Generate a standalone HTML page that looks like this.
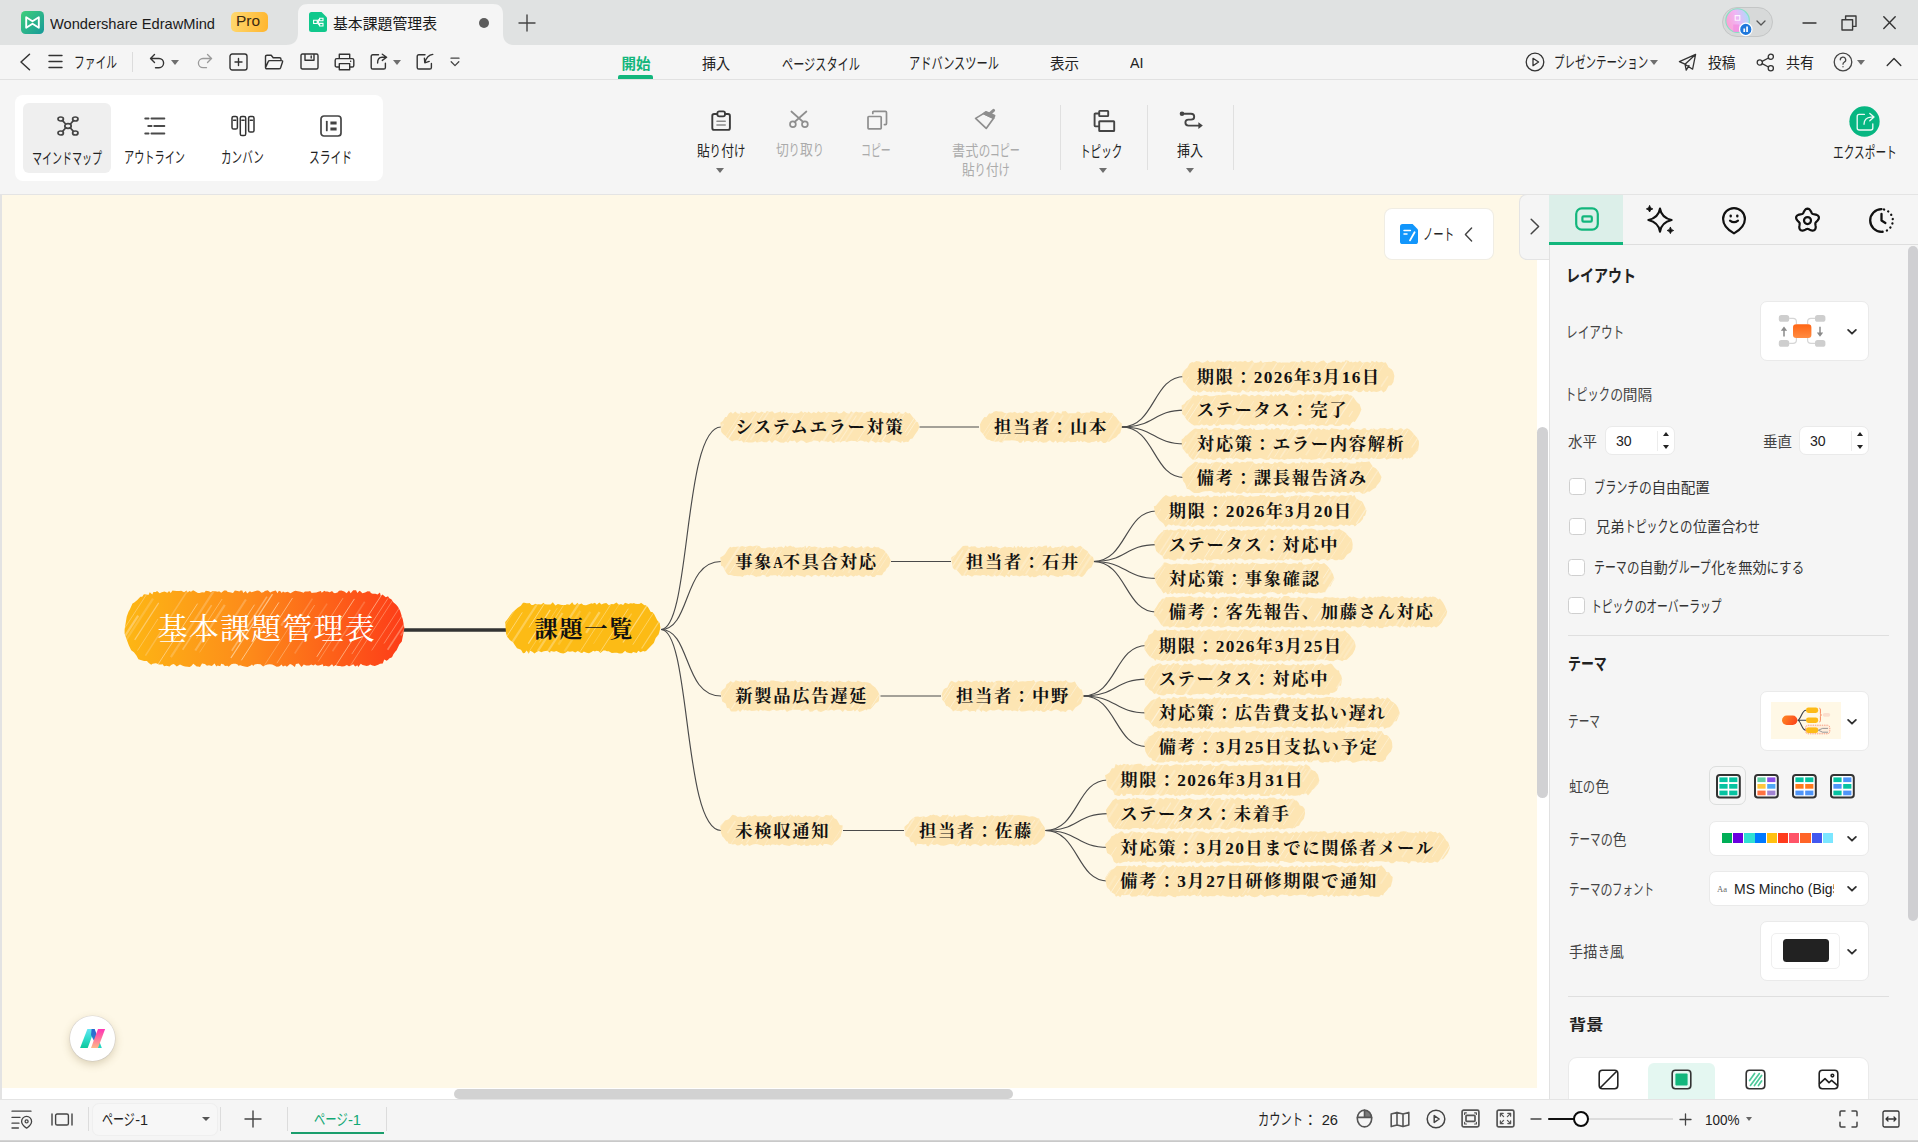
<!DOCTYPE html>
<html lang="ja"><head><meta charset="utf-8"><title>基本課題管理表 - Wondershare EdrawMind</title>
<style>
html,body{margin:0;padding:0}
html{width:1918px;height:1142px;overflow:hidden}
body{width:1918px;height:1142px;overflow:hidden;position:relative;background:#f5f5f5;font-family:"Liberation Sans","Noto Sans CJK JP",sans-serif}
.a{position:absolute;display:block}
.t{position:absolute;white-space:nowrap;line-height:24px;height:24px;transform-origin:0 50%;display:block}
.ko{display:inline-block;vertical-align:baseline;height:24px;line-height:24px}
.ki{display:inline-block;transform-origin:0 50%;white-space:nowrap;line-height:24px}

#mm text{font-family:"Liberation Serif","Noto Serif CJK JP","Noto Serif CJK SC",serif;}
#mm .mt text{font-size:17.3px;font-weight:700;fill:#111;letter-spacing:1.7px;}
#mm .mt .hw{letter-spacing:1.35px;}
#mm .mt .hwa{letter-spacing:0;font-size:16.5px;}
#mm .rt{font-size:30px;fill:#fff;font-weight:400;letter-spacing:1.2px;}
#mm .m2{font-size:23.2px;fill:#111;font-weight:700;letter-spacing:1.7px;}

</style></head>
<body>
<main id="canvas">
<div class="a" style="left:0px;top:195px;width:2px;height:904px;background:#e3e3e3"></div>
<div class="a" style="left:2px;top:195px;width:1535px;height:893px;background:#fef8e7"></div>
<div class="a" style="left:2px;top:1088px;width:1547px;height:11px;background:#fff"></div>
<div class="a" style="left:1537px;top:195px;width:12px;height:904px;background:#fff"></div>
<div class="a" style="left:454px;top:1088.6px;width:559px;height:10px;background:#d2d2d2;border-radius:5px"></div>
<div class="a" style="left:1537px;top:426.6px;width:11.4px;height:371.4px;background:#d1d1d3;border-radius:5.7px"></div>
<svg class="a" id="mm" style="left:2px;top:195px" width="1535" height="893" viewBox="0 0 1535 893">
<defs>
<linearGradient id="rootg" x1="0" y1="0" x2="1" y2="0"><stop offset="0" stop-color="#fdb714"/><stop offset="0.45" stop-color="#fd8a1a"/><stop offset="1" stop-color="#fd3c18"/></linearGradient>
</defs>
<g fill="none" stroke="#4a4a4a" stroke-width="1.15"><path d="M401 435 H506" stroke="#333" stroke-width="3.6" stroke-linecap="round"/><path d="M659 434.5 C689 434.5 681 232 719 232" /><path d="M917.5 232 H977" /><path d="M1119.5 232 C1153.5 232 1150.5 181.45 1182.5 181.45" /><path d="M1119.5 232 C1153.5 232 1150.5 215.15 1182.5 215.15" /><path d="M1119.5 232 C1153.5 232 1150.5 248.85 1182.5 248.85" /><path d="M1119.5 232 C1153.5 232 1150.5 282.55 1182.5 282.55" /><path d="M659 434.5 C689 434.5 681 366.5 719 366.5" /><path d="M889 366.5 H949" /><path d="M1091 366.5 C1125 366.5 1122.5 315.95 1154.5 315.95" /><path d="M1091 366.5 C1125 366.5 1122.5 349.65 1154.5 349.65" /><path d="M1091 366.5 C1125 366.5 1122.5 383.35 1154.5 383.35" /><path d="M1091 366.5 C1125 366.5 1122.5 417.05 1154.5 417.05" /><path d="M659 434.5 C689 434.5 681 501 719 501" /><path d="M878.5 501 H939" /><path d="M1081 501 C1115 501 1112.5 450.45 1144.5 450.45" /><path d="M1081 501 C1115 501 1112.5 484.15 1144.5 484.15" /><path d="M1081 501 C1115 501 1112.5 517.85 1144.5 517.85" /><path d="M1081 501 C1115 501 1112.5 551.55 1144.5 551.55" /><path d="M659 434.5 C689 434.5 681 635.5 719 635.5" /><path d="M841 635.5 H902" /><path d="M1043 635.5 C1077 635.5 1074 584.95 1106 584.95" /><path d="M1043 635.5 C1077 635.5 1074 618.65 1106 618.65" /><path d="M1043 635.5 C1077 635.5 1074 652.35 1106 652.35" /><path d="M1043 635.5 C1077 635.5 1074 686.05 1106 686.05" /></g>
<path id="n1" d="M122.6 434.4L124.7 421.8L126.5 416.8L127.8 414.4L130.5 408.6L132.3 407.6L135.3 405.1L138.4 401.8L140.2 401.7L141.9 399.2L144.9 399.6L146.4 399.9L147.8 397.3L150.3 399.5L151.4 397.0L153.7 397.0L155.1 396.0L157.6 398.3L159.7 397.2L162.5 396.5L165.3 397.7L167.1 395.9L168.7 398.0L170.5 395.5L172.1 395.7L174.9 396.0L177.1 396.1L179.2 395.8L182.1 397.3L184.5 395.6L185.8 397.6L187.2 396.0L189.0 396.7L191.1 395.2L192.5 396.1L195.9 397.9L197.6 398.1L200.0 397.2L202.4 397.5L203.8 395.7L207.0 396.2L208.7 397.3L210.6 395.9L213.3 396.3L215.9 396.7L217.1 396.2L219.2 397.8L222.1 395.5L224.3 395.4L225.8 397.0L228.0 397.3L231.0 398.1L232.9 395.4L235.7 396.0L237.4 396.6L238.5 395.5L240.3 395.4L241.2 398.0L243.9 395.9L245.1 398.4L247.9 396.2L249.6 397.3L252.7 396.3L255.2 395.4L257.1 395.7L259.6 397.8L261.8 396.9L262.8 396.1L265.8 395.2L268.2 397.4L270.2 396.5L273.6 395.5L274.0 395.7L275.5 398.3L276.9 395.7L278.7 396.6L279.7 397.9L281.0 396.4L282.9 397.4L285.6 396.7L288.5 398.2L291.9 396.2L293.3 395.7L295.9 396.2L298.7 396.7L301.6 397.7L302.9 396.4L306.2 396.5L308.2 395.9L309.7 398.0L311.0 397.7L314.4 397.6L315.6 397.1L318.9 396.1L319.7 397.7L322.4 395.7L323.4 396.5L325.5 396.6L327.7 397.2L330.1 395.9L331.2 397.4L332.9 398.2L335.5 397.6L337.0 395.7L339.3 395.4L342.3 396.5L344.6 398.2L347.0 395.4L348.6 398.3L351.2 395.3L354.1 395.2L355.3 398.1L357.5 395.8L358.7 396.4L360.4 398.3L363.1 397.4L365.6 396.3L368.1 396.4L368.8 397.9L370.7 398.8L373.4 398.8L375.5 399.6L378.0 397.4L378.7 400.7L380.5 399.6L383.8 402.3L386.0 401.3L387.3 403.2L389.3 404.3L391.4 407.3L394.0 409.5L395.9 411.7L398.0 415.4L400.8 424.6L402.4 432.9L399.8 446.4L397.3 449.6L394.6 455.2L393.2 456.7L391.4 459.2L390.0 462.2L387.1 463.4L386.4 464.4L384.7 465.8L382.2 464.6L380.8 468.5L378.0 468.7L376.2 469.7L372.8 470.9L370.4 470.5L368.2 469.5L366.7 470.6L364.7 471.1L362.8 470.6L360.5 470.0L358.8 468.8L356.3 471.9L355.4 470.2L353.2 471.5L351.2 469.3L348.3 471.1L346.8 471.3L344.9 470.1L342.3 471.3L339.9 471.4L338.1 471.1L335.9 470.9L333.4 470.0L331.7 471.5L330.0 469.2L327.1 471.6L325.5 471.2L323.7 470.7L321.4 471.2L320.7 469.3L316.9 470.6L315.0 470.5L313.2 469.3L311.5 470.4L309.2 469.4L307.3 470.5L304.2 470.4L301.8 469.4L299.5 471.9L296.7 468.6L293.9 469.1L292.9 471.9L289.9 469.7L288.0 468.9L284.9 471.7L283.1 470.5L281.0 471.5L279.4 469.5L278.2 470.8L277.0 471.6L274.6 471.8L272.3 470.6L270.2 469.6L267.8 469.2L265.4 469.4L263.1 470.2L261.2 471.6L258.5 469.3L255.3 469.1L252.6 469.5L251.2 471.0L250.0 469.6L248.4 470.7L245.4 471.9L242.6 471.4L240.5 471.0L238.3 470.2L236.3 470.7L235.6 469.4L233.6 468.7L231.3 468.8L229.4 469.2L226.6 471.8L225.5 470.8L222.9 471.0L221.8 469.4L219.2 468.7L218.3 471.2L215.6 470.4L214.4 471.5L212.5 468.6L209.9 471.0L207.0 470.3L204.9 470.7L202.9 469.1L200.0 468.6L198.0 471.9L196.1 471.4L194.7 471.6L191.4 468.7L190.4 469.7L189.4 471.1L187.6 471.9L185.7 471.7L183.1 471.5L181.2 470.9L178.0 469.6L174.8 471.4L172.5 469.6L171.3 468.9L169.2 470.0L167.6 471.4L164.4 470.7L162.0 471.3L160.7 469.2L159.0 469.4L156.8 469.4L154.9 468.4L153.6 468.3L150.6 468.8L149.2 469.7L146.8 467.9L144.9 466.0L142.0 466.1L138.7 465.1L136.4 464.3L134.4 460.5L131.9 457.3L129.2 455.3L126.9 450.6L125.6 447.1L122.6 438.8Z" fill="url(#rootg)"/><clipPath id="c1"><use href="#n1"/></clipPath><g clip-path="url(#c1)"><g stroke="#ffe9c8" fill="none"><path d="M88.9 454.7L115.8 413.3" stroke-width="0.9" stroke-opacity="0.69"/><path d="M91.3 466.8L138.3 394.6" stroke-width="1.2" stroke-opacity="0.63"/><path d="M100.2 467.7L144.9 398.9" stroke-width="0.7" stroke-opacity="0.57"/><path d="M104.4 469.5L136.2 420.6" stroke-width="2.2" stroke-opacity="0.42"/><path d="M108.4 469.1L151.0 403.6" stroke-width="2.2" stroke-opacity="0.22"/><path d="M132.7 444.8L156.7 407.9" stroke-width="1.2" stroke-opacity="0.47"/><path d="M135.5 455.6L156.0 423.9" stroke-width="0.9" stroke-opacity="0.41"/><path d="M143.4 460.6L185.9 395.1" stroke-width="1.6" stroke-opacity="0.26"/><path d="M168.9 437.6L176.5 425.9" stroke-width="0.9" stroke-opacity="0.43"/><path d="M155.2 470.7L195.6 408.6" stroke-width="0.9" stroke-opacity="0.60"/><path d="M168.9 462.1L212.1 395.5" stroke-width="2.2" stroke-opacity="0.26"/><path d="M180.6 454.8L209.6 410.1" stroke-width="1.6" stroke-opacity="0.34"/><path d="M194.5 443.4L220.1 404.0" stroke-width="0.9" stroke-opacity="0.43"/><path d="M193.3 455.5L222.8 409.9" stroke-width="2.2" stroke-opacity="0.30"/><path d="M197.6 457.4L212.7 434.1" stroke-width="0.7" stroke-opacity="0.37"/><path d="M227.3 430.0L243.9 404.5" stroke-width="2.2" stroke-opacity="0.28"/><path d="M234.8 436.9L252.5 409.7" stroke-width="0.9" stroke-opacity="0.62"/><path d="M229.8 455.8L265.0 401.6" stroke-width="1.6" stroke-opacity="0.42"/><path d="M228.9 463.0L270.5 399.1" stroke-width="1.2" stroke-opacity="0.64"/><path d="M239.4 465.3L276.9 407.4" stroke-width="0.9" stroke-opacity="0.70"/><path d="M271.8 431.9L290.5 403.0" stroke-width="0.9" stroke-opacity="0.60"/><path d="M279.2 430.7L283.7 423.7" stroke-width="2.2" stroke-opacity="0.30"/><path d="M262.2 470.7L288.3 430.5" stroke-width="0.9" stroke-opacity="0.33"/><path d="M287.1 439.4L310.4 403.6" stroke-width="1.6" stroke-opacity="0.22"/><path d="M274.9 468.2L312.6 410.1" stroke-width="0.9" stroke-opacity="0.42"/><path d="M292.7 458.5L325.1 408.6" stroke-width="1.6" stroke-opacity="0.19"/><path d="M318.1 438.4L341.0 403.1" stroke-width="0.9" stroke-opacity="0.44"/><path d="M314.8 461.8L352.4 403.9" stroke-width="0.9" stroke-opacity="0.67"/><path d="M316.2 466.5L338.0 432.9" stroke-width="0.7" stroke-opacity="0.45"/><path d="M330.5 456.3L362.7 406.8" stroke-width="1.6" stroke-opacity="0.21"/><path d="M351.5 435.4L359.4 423.3" stroke-width="0.7" stroke-opacity="0.32"/><path d="M334.3 469.8L381.9 396.4" stroke-width="0.9" stroke-opacity="0.62"/><path d="M349.8 459.1L386.0 403.3" stroke-width="0.9" stroke-opacity="0.45"/><path d="M347.1 472.6L392.8 402.1" stroke-width="0.9" stroke-opacity="0.39"/><path d="M369.7 455.4L406.5 398.8" stroke-width="0.9" stroke-opacity="0.40"/><path d="M382.0 448.5L410.0 405.3" stroke-width="0.7" stroke-opacity="0.57"/><path d="M385.6 454.7L408.0 420.3" stroke-width="1.6" stroke-opacity="0.37"/><path d="M398.8 440.5L421.6 405.3" stroke-width="1.6" stroke-opacity="0.32"/><path d="M414.1 430.4L426.3 411.7" stroke-width="2.2" stroke-opacity="0.25"/><path d="M400.2 468.8L439.5 408.3" stroke-width="1.6" stroke-opacity="0.19"/></g></g>
<path id="n2" d="M503.2 427.1L505.1 424.8L508.3 420.3L510.4 417.4L512.9 415.2L515.4 412.9L518.8 410.7L521.0 407.7L522.6 407.8L524.6 408.2L526.4 408.3L527.6 408.0L529.5 410.1L531.1 410.0L533.4 408.7L535.0 409.4L536.6 409.3L539.1 409.5L541.6 407.8L542.8 409.2L545.3 409.6L548.5 409.6L550.8 407.3L553.4 410.4L555.9 408.9L558.6 409.8L559.9 410.1L563.7 410.1L564.8 409.2L567.7 409.7L570.2 407.3L571.9 409.8L573.5 409.8L575.5 407.7L576.7 409.6L579.7 408.4L581.3 409.9L584.0 410.3L586.8 409.3L589.5 408.2L590.4 408.7L593.0 407.7L594.8 409.8L597.3 407.5L599.5 409.6L601.6 408.4L604.3 408.0L606.9 410.2L609.3 409.0L611.6 409.3L614.4 407.6L617.0 409.8L619.0 409.1L621.1 409.9L623.0 407.8L626.6 408.9L628.3 408.3L630.9 408.6L631.9 408.0L633.3 408.8L635.9 408.9L637.9 408.8L639.0 407.8L642.4 410.2L643.8 410.2L645.9 412.1L648.8 417.0L650.3 417.1L652.2 419.2L655.2 425.2L657.7 428.0L658.4 432.8L656.7 439.4L653.7 442.9L651.8 448.0L649.4 450.5L646.5 453.5L644.1 455.9L642.6 456.4L641.1 456.0L638.5 457.2L636.3 455.8L634.7 457.9L631.2 456.9L629.7 458.3L627.1 458.0L624.5 457.3L623.1 455.7L620.4 458.2L618.1 458.5L616.4 458.3L615.1 457.7L612.9 457.7L609.8 457.9L606.7 456.3L604.9 456.3L603.3 455.6L601.3 455.6L598.4 458.1L596.9 456.3L594.5 455.8L592.9 456.5L591.0 455.7L590.0 456.8L587.0 458.2L584.6 457.7L582.3 456.7L581.4 456.7L580.3 458.0L578.8 457.7L575.8 456.0L573.3 457.4L570.6 456.2L567.9 456.7L565.6 456.3L563.4 457.7L561.3 458.6L558.6 458.1L557.4 457.6L554.4 455.9L552.1 456.7L548.7 455.9L548.1 457.7L545.3 455.7L541.8 456.2L539.2 457.2L538.0 456.4L536.4 456.0L534.5 457.1L532.5 458.6L530.3 456.7L528.2 455.8L526.7 458.7L524.7 455.6L522.7 458.1L521.0 458.2L519.0 454.8L517.7 454.3L515.0 453.3L512.6 449.7L511.0 447.3L508.1 445.2L505.3 442.1L504.0 438.6Z" fill="#fcbb15"/><clipPath id="c2"><use href="#n2"/></clipPath><g clip-path="url(#c2)"><g stroke="#fff0c4" fill="none"><path d="M480.4 447.3L505.8 408.3" stroke-width="0.9" stroke-opacity="0.37"/><path d="M500.9 433.4L518.3 406.6" stroke-width="0.9" stroke-opacity="0.35"/><path d="M503.4 443.5L520.3 417.4" stroke-width="0.9" stroke-opacity="0.59"/><path d="M508.1 450.6L534.5 410.0" stroke-width="2.2" stroke-opacity="0.37"/><path d="M527.0 432.4L543.1 407.6" stroke-width="0.9" stroke-opacity="0.62"/><path d="M526.3 448.6L548.2 414.9" stroke-width="1.2" stroke-opacity="0.60"/><path d="M526.4 457.7L555.3 413.1" stroke-width="0.9" stroke-opacity="0.35"/><path d="M537.4 447.4L561.5 410.4" stroke-width="0.7" stroke-opacity="0.58"/><path d="M535.8 456.1L560.5 418.0" stroke-width="2.2" stroke-opacity="0.36"/><path d="M545.1 457.5L578.1 406.8" stroke-width="2.2" stroke-opacity="0.37"/><path d="M556.4 449.7L578.4 415.8" stroke-width="2.2" stroke-opacity="0.20"/><path d="M562.5 456.5L588.3 416.9" stroke-width="2.2" stroke-opacity="0.22"/><path d="M584.1 437.9L597.6 417.1" stroke-width="2.2" stroke-opacity="0.43"/><path d="M578.0 456.8L609.4 408.4" stroke-width="0.9" stroke-opacity="0.47"/><path d="M591.5 448.8L617.5 408.9" stroke-width="0.7" stroke-opacity="0.33"/><path d="M596.8 459.1L626.3 413.7" stroke-width="0.9" stroke-opacity="0.57"/><path d="M617.9 436.6L629.6 418.6" stroke-width="1.2" stroke-opacity="0.33"/><path d="M620.9 447.5L644.9 410.6" stroke-width="1.2" stroke-opacity="0.57"/><path d="M630.8 449.7L654.1 413.8" stroke-width="0.7" stroke-opacity="0.61"/><path d="M639.6 453.5L659.7 422.5" stroke-width="1.2" stroke-opacity="0.45"/><path d="M655.2 442.2L675.0 411.7" stroke-width="1.2" stroke-opacity="0.62"/><path d="M667.4 436.7L672.1 429.5" stroke-width="0.7" stroke-opacity="0.61"/><path d="M661.8 453.1L688.5 412.1" stroke-width="1.6" stroke-opacity="0.35"/></g></g>
<path id="n3" d="M718.3 227.8L720.8 226.0L723.2 222.1L724.7 222.0L726.9 218.2L729.0 216.9L730.9 218.7L733.2 216.4L735.6 218.4L737.8 218.7L738.5 216.7L741.3 218.2L743.5 218.1L744.0 216.8L747.1 218.2L750.3 216.2L752.1 216.9L753.6 216.1L754.9 217.4L757.2 218.1L759.7 216.5L763.1 218.2L764.9 216.1L767.6 217.1L770.3 216.3L772.7 218.4L774.6 217.7L777.3 217.1L778.7 216.3L779.8 218.4L781.3 216.6L783.1 218.0L784.3 217.1L786.6 218.2L789.6 217.8L791.6 218.0L793.7 218.5L797.0 218.0L798.6 216.6L799.8 216.2L801.2 217.9L802.8 216.7L805.2 218.1L806.4 216.4L807.3 217.1L809.3 218.5L811.8 217.1L814.2 218.3L816.3 216.3L819.3 217.9L822.2 216.4L824.8 218.0L826.5 217.1L827.7 217.1L830.9 217.3L832.9 217.4L834.7 216.5L836.1 218.2L837.3 218.5L839.7 217.9L841.8 216.1L844.5 218.0L847.2 218.7L849.1 216.3L851.8 218.1L854.1 216.6L856.7 217.4L860.0 217.0L861.7 218.0L862.8 218.3L864.7 216.7L866.8 216.8L869.5 216.1L872.3 218.4L875.5 216.5L876.5 218.1L878.4 216.4L882.2 218.3L884.2 217.5L887.0 218.4L889.6 217.9L890.5 216.4L893.9 218.7L896.8 216.5L899.6 218.8L901.5 218.7L903.4 216.7L906.0 218.4L907.7 217.9L910.9 222.3L912.7 223.9L914.7 227.1L916.0 227.3L917.3 231.9L915.9 235.5L913.2 239.2L910.5 243.4L908.3 244.0L906.3 247.1L904.0 246.7L901.6 247.5L900.0 245.7L899.1 247.9L896.9 246.9L894.0 245.7L892.3 245.6L889.3 245.5L887.6 247.7L886.6 247.8L884.4 247.2L883.3 246.9L881.4 246.1L879.1 247.5L876.9 247.0L875.6 246.9L873.5 247.8L871.5 246.5L869.2 245.4L866.6 247.8L864.1 246.3L862.7 246.7L860.4 245.8L858.5 245.5L856.8 246.1L855.3 247.1L853.2 245.9L851.8 245.9L849.3 245.7L845.9 246.5L845.1 247.2L842.7 246.1L840.2 246.3L838.6 247.6L836.3 246.6L833.5 246.8L832.2 247.9L830.8 247.8L828.8 245.8L825.8 247.2L825.1 246.6L821.8 246.2L819.2 245.5L817.5 247.5L816.1 246.0L812.8 245.4L811.2 245.5L810.1 246.5L808.2 246.8L806.1 247.5L804.2 247.9L801.8 246.2L800.0 245.5L798.6 245.5L794.7 248.0L792.6 245.6L790.1 246.3L788.0 245.4L786.0 247.8L783.8 246.4L781.8 247.8L778.2 247.5L776.7 246.7L775.7 246.2L773.8 245.3L772.5 245.3L770.0 247.9L767.3 245.3L764.8 247.3L762.0 247.3L760.8 246.7L759.5 246.2L757.8 246.9L754.7 247.5L753.4 246.3L751.5 247.2L750.0 247.4L747.9 247.6L746.6 247.5L744.5 247.0L741.2 247.4L739.7 245.6L737.1 246.2L735.3 245.3L732.2 245.6L730.2 246.4L728.2 245.3L724.7 242.6L723.4 241.0L721.3 239.2L719.3 237.1Z" fill="#fde5b3"/><clipPath id="c3"><use href="#n3"/></clipPath><g clip-path="url(#c3)"><g stroke="#fef8e7" fill="none"><path d="M703.5 245.4L722.4 216.3" stroke-width="0.9" stroke-opacity="0.65"/><path d="M710.4 245.5L721.4 228.6" stroke-width="2.2" stroke-opacity="0.30"/><path d="M721.1 245.5L739.6 217.0" stroke-width="0.9" stroke-opacity="0.41"/><path d="M725.2 245.3L740.0 222.5" stroke-width="1.2" stroke-opacity="0.69"/><path d="M733.9 249.2L754.2 217.9" stroke-width="1.2" stroke-opacity="0.43"/><path d="M742.7 247.2L762.5 216.6" stroke-width="0.9" stroke-opacity="0.54"/><path d="M748.4 245.0L767.7 215.3" stroke-width="1.6" stroke-opacity="0.40"/><path d="M756.5 247.0L772.2 222.8" stroke-width="1.6" stroke-opacity="0.26"/><path d="M767.3 244.4L781.8 222.2" stroke-width="0.7" stroke-opacity="0.50"/><path d="M775.4 243.4L793.6 215.2" stroke-width="0.7" stroke-opacity="0.63"/><path d="M780.2 243.7L793.6 223.0" stroke-width="1.2" stroke-opacity="0.35"/><path d="M783.4 248.5L803.1 218.2" stroke-width="0.9" stroke-opacity="0.44"/><path d="M798.7 241.5L810.5 223.3" stroke-width="0.9" stroke-opacity="0.31"/><path d="M813.4 234.2L814.2 233.0" stroke-width="0.7" stroke-opacity="0.35"/><path d="M809.7 245.4L827.1 218.5" stroke-width="1.6" stroke-opacity="0.21"/><path d="M820.0 248.0L834.1 226.3" stroke-width="2.2" stroke-opacity="0.41"/><path d="M830.1 243.7L847.3 217.1" stroke-width="2.2" stroke-opacity="0.19"/><path d="M832.5 246.6L852.5 215.8" stroke-width="2.2" stroke-opacity="0.36"/><path d="M836.1 248.7L854.5 220.5" stroke-width="1.2" stroke-opacity="0.47"/><path d="M842.5 247.2L863.5 215.0" stroke-width="1.6" stroke-opacity="0.29"/><path d="M855.2 246.4L867.9 226.8" stroke-width="0.7" stroke-opacity="0.66"/><path d="M866.4 235.6L868.4 232.7" stroke-width="0.9" stroke-opacity="0.66"/><path d="M867.0 240.8L878.6 222.9" stroke-width="1.2" stroke-opacity="0.34"/><path d="M866.8 248.6L879.9 228.5" stroke-width="1.2" stroke-opacity="0.54"/><path d="M875.1 247.9L892.3 221.5" stroke-width="1.2" stroke-opacity="0.32"/><path d="M879.9 246.3L899.8 215.6" stroke-width="1.2" stroke-opacity="0.65"/><path d="M891.9 235.5L903.0 218.4" stroke-width="0.9" stroke-opacity="0.44"/><path d="M890.6 247.3L902.8 228.5" stroke-width="0.7" stroke-opacity="0.47"/><path d="M902.9 237.4L912.3 223.1" stroke-width="0.9" stroke-opacity="0.67"/><path d="M904.5 240.7L920.8 215.7" stroke-width="0.9" stroke-opacity="0.64"/><path d="M918.3 234.3L926.5 221.6" stroke-width="0.9" stroke-opacity="0.37"/><path d="M919.4 241.9L925.3 232.8" stroke-width="2.2" stroke-opacity="0.35"/></g></g><path id="n4" d="M978.0 229.2L979.9 225.4L982.4 222.0L984.4 222.3L987.2 218.2L988.3 218.8L990.5 218.0L991.7 216.7L994.1 216.0L996.2 216.6L999.1 216.6L1000.5 216.7L1002.6 217.9L1004.8 218.2L1006.3 217.7L1008.4 217.2L1010.4 217.8L1012.7 216.7L1015.3 218.3L1017.7 217.6L1020.8 218.2L1023.2 216.3L1024.2 216.2L1025.9 216.8L1028.4 218.3L1030.6 218.0L1031.9 217.5L1034.5 216.2L1037.1 217.5L1039.9 216.5L1042.5 216.4L1043.9 216.8L1045.7 218.2L1047.7 217.2L1051.1 216.1L1053.5 218.2L1055.4 217.0L1057.7 218.3L1059.4 218.8L1060.0 216.6L1062.1 216.2L1063.7 216.0L1066.1 218.5L1067.6 218.3L1070.8 218.3L1073.7 218.2L1075.6 216.4L1077.8 217.0L1079.2 218.5L1082.3 217.9L1084.8 217.6L1087.6 217.8L1088.6 216.2L1091.8 216.4L1094.5 217.0L1096.5 217.8L1098.8 217.9L1100.2 217.8L1102.1 216.2L1105.1 218.2L1106.1 217.5L1107.5 217.9L1109.1 217.7L1110.9 218.6L1111.7 220.2L1114.2 222.2L1115.7 224.5L1117.6 226.7L1119.6 228.2L1119.9 231.9L1118.3 238.1L1116.3 239.5L1114.3 242.1L1113.3 242.7L1111.6 243.5L1109.4 245.0L1106.9 247.0L1105.8 246.2L1103.3 247.9L1101.2 247.9L1098.8 245.8L1095.9 247.4L1094.6 245.7L1092.2 246.8L1089.4 247.1L1087.9 247.8L1085.7 247.8L1084.7 247.2L1082.2 246.2L1080.4 247.2L1078.8 245.5L1077.0 247.2L1075.6 245.4L1073.8 247.0L1071.6 246.9L1068.6 247.2L1066.5 246.0L1064.2 246.9L1062.1 248.0L1060.6 246.8L1057.4 246.7L1055.1 247.9L1053.9 245.6L1051.5 247.6L1049.9 247.1L1048.0 245.3L1046.0 246.3L1044.8 247.3L1041.3 247.7L1039.1 247.0L1037.8 246.1L1036.1 247.7L1034.8 246.1L1032.6 246.0L1030.4 247.5L1027.0 245.9L1025.1 245.9L1023.9 246.2L1022.6 247.6L1021.5 245.3L1019.4 247.8L1017.4 247.7L1016.1 246.2L1012.9 245.4L1009.8 245.3L1007.8 245.5L1005.3 245.5L1002.0 245.4L1000.5 247.5L997.9 247.2L996.8 246.2L993.4 246.7L991.2 246.2L989.4 245.9L987.7 245.1L985.2 244.6L983.5 242.8L980.4 238.3L978.8 236.8L978.3 235.8Z" fill="#fde5b3"/><clipPath id="c4"><use href="#n4"/></clipPath><g clip-path="url(#c4)"><g stroke="#fef8e7" fill="none"><path d="M969.3 231.9L980.0 215.5" stroke-width="0.9" stroke-opacity="0.51"/><path d="M962.8 249.0L983.9 216.4" stroke-width="0.9" stroke-opacity="0.67"/><path d="M976.4 246.3L991.5 223.2" stroke-width="0.9" stroke-opacity="0.41"/><path d="M980.2 246.3L989.9 231.3" stroke-width="0.7" stroke-opacity="0.41"/><path d="M994.5 234.3L1007.0 215.0" stroke-width="1.2" stroke-opacity="0.53"/><path d="M990.8 248.4L1007.8 222.2" stroke-width="1.2" stroke-opacity="0.42"/><path d="M996.6 246.6L1012.3 222.6" stroke-width="1.6" stroke-opacity="0.24"/><path d="M999.0 248.9L1010.2 231.8" stroke-width="0.7" stroke-opacity="0.67"/><path d="M1012.8 243.8L1023.1 227.9" stroke-width="0.9" stroke-opacity="0.38"/><path d="M1019.4 241.7L1034.3 218.8" stroke-width="2.2" stroke-opacity="0.23"/><path d="M1030.6 243.6L1038.8 231.0" stroke-width="0.7" stroke-opacity="0.43"/><path d="M1033.7 248.9L1053.4 218.5" stroke-width="1.6" stroke-opacity="0.42"/><path d="M1050.4 236.9L1061.2 220.3" stroke-width="1.6" stroke-opacity="0.33"/><path d="M1055.3 241.6L1069.5 219.7" stroke-width="1.6" stroke-opacity="0.21"/><path d="M1060.3 246.1L1073.9 225.2" stroke-width="1.6" stroke-opacity="0.22"/><path d="M1067.0 243.0L1082.9 218.5" stroke-width="0.9" stroke-opacity="0.44"/><path d="M1082.4 233.6L1089.7 222.4" stroke-width="0.9" stroke-opacity="0.61"/><path d="M1090.5 232.2L1094.5 226.0" stroke-width="0.9" stroke-opacity="0.62"/><path d="M1097.2 241.1L1112.3 217.8" stroke-width="0.9" stroke-opacity="0.62"/><path d="M1105.6 246.7L1124.5 217.6" stroke-width="1.6" stroke-opacity="0.30"/><path d="M1113.0 247.6L1130.0 221.4" stroke-width="1.2" stroke-opacity="0.55"/><path d="M1120.1 248.8L1141.6 215.6" stroke-width="1.2" stroke-opacity="0.52"/></g></g><path id="n5" d="M1179.9 179.5L1181.8 175.7L1183.7 174.1L1185.3 172.8L1186.0 171.6L1187.6 168.6L1190.1 166.9L1191.8 167.5L1194.3 166.0L1197.6 166.4L1199.2 167.6L1200.9 167.7L1203.9 166.4L1205.6 165.2L1207.9 167.2L1211.2 166.5L1212.7 167.4L1214.6 165.8L1215.3 165.3L1218.4 165.8L1219.3 165.6L1220.8 167.0L1222.7 166.3L1224.3 166.6L1226.3 166.5L1228.6 166.1L1230.9 167.0L1233.2 166.0L1235.4 166.7L1238.1 166.3L1240.9 166.7L1243.1 165.8L1245.8 167.2L1247.2 167.0L1250.1 165.3L1252.0 167.7L1254.4 167.7L1257.1 167.2L1258.9 165.4L1260.8 167.9L1262.2 167.3L1265.4 166.9L1267.1 166.8L1269.2 167.0L1271.1 166.0L1273.4 166.3L1275.6 167.8L1277.8 167.3L1279.3 167.7L1280.5 167.4L1283.4 167.4L1285.4 167.6L1287.5 167.7L1288.9 166.8L1290.6 166.4L1293.3 166.4L1295.0 167.2L1297.6 167.3L1299.6 165.2L1301.0 166.7L1302.0 167.6L1303.4 166.9L1304.4 166.3L1307.1 166.0L1309.7 167.5L1312.4 166.5L1314.4 167.9L1316.3 167.6L1319.2 166.1L1321.4 165.4L1321.9 165.5L1324.3 167.9L1325.8 167.9L1327.9 167.5L1330.9 165.7L1332.9 165.7L1334.7 167.5L1336.8 166.8L1339.2 167.8L1340.6 166.4L1342.3 167.1L1343.5 165.3L1346.4 165.8L1347.9 167.3L1349.3 166.6L1350.7 167.5L1353.9 166.6L1355.0 167.5L1356.8 166.6L1357.9 165.8L1360.2 167.8L1362.9 167.3L1365.3 166.7L1368.4 167.9L1369.8 165.7L1373.2 167.6L1374.2 166.1L1376.9 167.6L1379.7 166.8L1381.9 167.8L1383.7 167.3L1385.5 170.2L1386.4 172.2L1389.9 174.6L1391.4 177.1L1392.4 181.1L1391.4 187.0L1389.4 190.2L1386.5 190.8L1384.4 194.7L1383.9 195.7L1381.4 197.5L1379.3 195.3L1376.6 196.5L1374.3 197.1L1371.9 196.4L1369.2 196.9L1367.4 195.5L1365.7 197.1L1363.2 196.7L1361.4 195.1L1359.2 197.1L1356.7 197.3L1354.8 196.1L1352.2 195.0L1349.6 196.9L1347.3 196.7L1345.6 196.1L1343.5 196.5L1340.3 195.1L1339.3 196.5L1337.5 195.7L1335.8 196.1L1332.5 195.4L1331.3 196.0L1329.2 196.4L1327.3 197.4L1325.7 197.1L1322.9 197.6L1320.0 197.5L1318.6 196.6L1316.5 196.2L1315.3 196.1L1312.2 196.5L1310.1 195.1L1309.8 197.2L1307.2 196.7L1306.1 195.1L1303.4 197.7L1302.2 196.9L1301.1 196.0L1298.5 195.5L1296.0 195.1L1294.4 197.6L1292.3 197.4L1291.4 197.5L1289.0 196.9L1287.4 196.1L1284.0 195.1L1281.3 197.0L1279.4 195.1L1277.3 196.4L1275.1 197.0L1273.0 196.4L1272.1 196.3L1269.5 197.6L1267.0 196.2L1266.0 196.2L1263.5 195.4L1261.9 196.8L1260.7 196.7L1259.0 196.1L1256.6 197.6L1254.5 195.9L1253.3 196.2L1250.9 196.8L1248.5 195.4L1246.6 197.3L1244.4 197.2L1241.9 195.4L1240.5 195.1L1238.5 197.5L1235.6 197.7L1234.0 197.1L1232.8 197.3L1230.1 196.6L1227.4 196.1L1225.2 196.3L1223.7 197.4L1220.0 197.5L1218.4 196.6L1216.7 197.0L1214.7 196.6L1213.1 197.5L1210.8 196.1L1209.5 197.5L1207.6 196.6L1205.0 196.9L1201.7 195.2L1198.8 197.2L1196.4 197.4L1194.3 195.7L1193.5 197.4L1192.5 196.4L1189.1 195.6L1186.6 193.0L1183.8 189.4L1183.0 188.4L1181.2 187.2Z" fill="#fde5b3"/><clipPath id="c5"><use href="#n5"/></clipPath><g clip-path="url(#c5)"><g stroke="#fef8e7" fill="none"><path d="M1158.8 197.9L1178.3 167.8" stroke-width="1.6" stroke-opacity="0.41"/><path d="M1177.6 182.2L1188.8 165.0" stroke-width="1.2" stroke-opacity="0.54"/><path d="M1177.9 195.8L1187.0 181.8" stroke-width="0.7" stroke-opacity="0.50"/><path d="M1192.0 193.2L1205.6 172.3" stroke-width="0.7" stroke-opacity="0.42"/><path d="M1199.8 193.3L1211.9 174.7" stroke-width="0.9" stroke-opacity="0.57"/><path d="M1205.0 192.3L1217.9 172.3" stroke-width="1.6" stroke-opacity="0.38"/><path d="M1213.4 192.0L1228.1 169.3" stroke-width="1.2" stroke-opacity="0.54"/><path d="M1218.1 196.0L1233.4 172.4" stroke-width="0.7" stroke-opacity="0.58"/><path d="M1234.0 182.2L1237.3 176.9" stroke-width="0.7" stroke-opacity="0.34"/><path d="M1236.0 191.8L1251.7 167.6" stroke-width="2.2" stroke-opacity="0.28"/><path d="M1243.7 198.3L1263.4 168.0" stroke-width="2.2" stroke-opacity="0.28"/><path d="M1263.3 186.1L1274.8 168.4" stroke-width="1.2" stroke-opacity="0.47"/><path d="M1264.2 198.8L1282.7 170.3" stroke-width="0.9" stroke-opacity="0.62"/><path d="M1273.2 198.9L1294.7 165.7" stroke-width="0.9" stroke-opacity="0.35"/><path d="M1278.4 197.5L1299.4 165.1" stroke-width="0.9" stroke-opacity="0.42"/><path d="M1286.1 196.9L1296.4 181.1" stroke-width="0.7" stroke-opacity="0.64"/><path d="M1299.5 192.3L1316.6 166.0" stroke-width="0.9" stroke-opacity="0.30"/><path d="M1308.1 188.1L1318.2 172.7" stroke-width="0.7" stroke-opacity="0.48"/><path d="M1307.9 195.6L1327.5 165.5" stroke-width="0.9" stroke-opacity="0.53"/><path d="M1324.6 182.7L1325.6 181.2" stroke-width="1.6" stroke-opacity="0.25"/><path d="M1327.6 193.1L1345.0 166.4" stroke-width="1.2" stroke-opacity="0.63"/><path d="M1334.7 198.3L1352.8 170.4" stroke-width="1.6" stroke-opacity="0.19"/><path d="M1351.9 183.1L1362.9 166.2" stroke-width="0.9" stroke-opacity="0.58"/><path d="M1351.7 196.5L1370.3 167.9" stroke-width="0.7" stroke-opacity="0.58"/><path d="M1359.1 191.1L1373.6 168.8" stroke-width="0.9" stroke-opacity="0.39"/><path d="M1365.7 194.7L1381.9 169.7" stroke-width="0.7" stroke-opacity="0.37"/><path d="M1379.0 191.8L1386.0 181.1" stroke-width="1.6" stroke-opacity="0.38"/><path d="M1392.2 190.5L1409.0 164.7" stroke-width="0.9" stroke-opacity="0.64"/></g></g><path id="n6" d="M1179.6 210.5L1182.3 209.0L1184.6 206.0L1186.4 205.1L1188.3 203.4L1189.4 202.6L1191.2 200.0L1194.5 201.0L1195.9 199.5L1198.5 201.1L1201.7 200.5L1202.4 199.9L1204.6 199.9L1207.3 201.3L1210.0 201.3L1212.3 201.1L1213.6 200.5L1217.0 200.0L1219.3 200.4L1220.5 199.7L1222.3 199.9L1225.5 199.6L1228.4 199.6L1229.8 201.4L1231.5 200.1L1234.3 200.4L1237.2 199.1L1238.3 201.3L1240.5 199.6L1241.7 199.2L1244.5 199.8L1247.1 201.5L1249.1 200.0L1250.6 200.1L1252.8 201.3L1256.0 199.5L1258.4 199.9L1260.6 201.3L1263.7 200.6L1267.0 201.2L1269.1 198.9L1271.5 201.5L1273.5 199.0L1275.6 201.2L1277.4 198.9L1280.0 200.6L1282.5 200.7L1283.3 199.0L1286.0 199.0L1288.0 200.6L1289.5 200.5L1291.8 201.0L1293.6 200.5L1296.0 200.1L1298.2 199.0L1301.2 200.8L1303.3 199.0L1304.7 199.5L1307.1 199.7L1309.4 199.4L1311.4 198.9L1313.8 201.1L1315.1 199.6L1317.5 199.3L1320.0 199.6L1322.0 200.8L1324.0 199.5L1326.4 201.2L1328.4 200.1L1330.9 201.5L1332.5 201.4L1334.6 200.1L1335.7 199.2L1337.9 200.4L1339.5 199.7L1342.7 199.5L1343.9 199.3L1345.6 199.1L1347.5 200.5L1349.0 200.2L1351.7 202.5L1354.2 206.2L1356.1 208.3L1357.5 209.0L1359.4 214.6L1357.5 219.3L1355.5 222.7L1352.8 227.0L1351.2 226.6L1349.5 228.1L1347.5 231.2L1345.1 229.8L1343.1 229.8L1340.7 229.1L1338.6 230.8L1335.8 231.1L1333.9 230.9L1333.0 231.1L1330.7 229.4L1327.8 229.4L1325.4 231.1L1323.1 230.8L1320.3 230.0L1317.5 230.5L1316.8 231.3L1315.1 231.1L1312.4 229.5L1309.6 229.2L1306.7 230.4L1306.0 229.7L1303.9 231.2L1302.2 229.8L1299.9 229.2L1298.0 229.3L1295.5 230.1L1292.8 231.4L1291.9 230.4L1290.0 230.7L1288.8 231.1L1287.3 230.9L1284.0 229.8L1281.8 229.4L1280.3 228.7L1278.4 230.8L1275.1 229.0L1274.0 231.2L1271.4 229.0L1269.0 228.7L1265.7 230.8L1264.4 231.0L1262.3 229.2L1259.8 228.9L1258.2 230.1L1256.4 228.8L1253.8 230.5L1250.4 230.0L1248.4 229.3L1247.5 230.9L1244.0 230.2L1242.9 231.1L1240.3 230.2L1237.4 228.7L1235.5 228.9L1232.9 230.1L1230.9 230.5L1228.4 229.5L1226.4 229.5L1223.1 229.4L1221.8 229.9L1219.3 230.1L1218.3 229.0L1216.8 230.4L1214.3 231.3L1212.0 228.8L1210.2 230.4L1207.2 230.9L1204.9 229.5L1201.9 230.5L1199.7 229.3L1197.3 230.5L1195.4 230.3L1192.1 230.5L1189.2 228.8L1186.5 226.6L1184.4 224.5L1182.3 220.8L1180.1 218.9Z" fill="#fde5b3"/><clipPath id="c6"><use href="#n6"/></clipPath><g clip-path="url(#c6)"><g stroke="#fef8e7" fill="none"><path d="M1163.0 228.3L1182.2 198.7" stroke-width="2.2" stroke-opacity="0.37"/><path d="M1178.3 219.6L1190.1 201.6" stroke-width="1.6" stroke-opacity="0.29"/><path d="M1177.3 230.7L1191.6 208.6" stroke-width="0.9" stroke-opacity="0.61"/><path d="M1184.6 227.6L1200.7 202.8" stroke-width="0.9" stroke-opacity="0.68"/><path d="M1196.4 228.5L1213.8 201.7" stroke-width="0.7" stroke-opacity="0.67"/><path d="M1207.1 224.3L1219.0 206.0" stroke-width="1.2" stroke-opacity="0.54"/><path d="M1212.4 230.4L1222.1 215.6" stroke-width="0.7" stroke-opacity="0.50"/><path d="M1231.0 219.9L1240.6 205.1" stroke-width="0.9" stroke-opacity="0.59"/><path d="M1232.6 230.0L1241.6 216.2" stroke-width="1.6" stroke-opacity="0.32"/><path d="M1239.5 225.2L1251.9 206.1" stroke-width="0.7" stroke-opacity="0.44"/><path d="M1250.3 221.7L1263.8 201.0" stroke-width="1.6" stroke-opacity="0.29"/><path d="M1257.2 224.5L1266.6 210.0" stroke-width="1.6" stroke-opacity="0.29"/><path d="M1264.8 229.9L1278.1 209.5" stroke-width="0.9" stroke-opacity="0.43"/><path d="M1282.3 218.2L1295.6 197.7" stroke-width="0.7" stroke-opacity="0.40"/><path d="M1285.3 228.2L1301.9 202.7" stroke-width="1.2" stroke-opacity="0.32"/><path d="M1305.6 214.0L1316.0 198.0" stroke-width="1.6" stroke-opacity="0.43"/><path d="M1307.6 225.7L1325.6 198.0" stroke-width="1.2" stroke-opacity="0.62"/><path d="M1310.9 231.1L1331.1 200.0" stroke-width="0.7" stroke-opacity="0.37"/><path d="M1323.4 228.6L1342.4 199.2" stroke-width="1.2" stroke-opacity="0.56"/><path d="M1333.2 229.2L1351.1 201.6" stroke-width="1.2" stroke-opacity="0.55"/><path d="M1346.9 221.8L1350.7 216.0" stroke-width="1.2" stroke-opacity="0.43"/><path d="M1355.6 225.0L1372.8 198.5" stroke-width="2.2" stroke-opacity="0.27"/></g></g><path id="n7" d="M1179.6 244.2L1181.2 243.4L1183.4 240.7L1184.8 240.3L1187.6 237.6L1188.8 236.6L1192.2 233.8L1193.7 233.4L1196.0 234.0L1198.5 233.9L1200.3 232.6L1201.6 234.1L1204.6 232.7L1206.8 235.0L1210.0 234.8L1211.3 233.6L1212.9 232.7L1215.7 233.0L1217.6 232.8L1219.5 234.6L1221.4 234.6L1223.5 233.1L1227.1 235.0L1228.5 233.0L1230.4 233.7L1233.9 235.0L1235.1 235.2L1236.5 234.6L1240.0 233.1L1242.2 233.9L1243.9 234.0L1246.1 233.9L1248.1 232.8L1251.0 234.9L1251.7 232.9L1253.6 235.0L1256.1 234.9L1259.5 234.5L1261.1 235.1L1262.2 233.9L1264.9 233.2L1266.2 234.2L1268.6 234.7L1269.7 233.1L1271.9 234.7L1273.2 233.8L1274.1 232.9L1276.8 233.0L1278.2 234.7L1281.1 234.6L1283.3 233.9L1284.5 233.4L1287.1 235.0L1289.4 232.7L1292.6 235.3L1294.7 235.0L1297.0 234.3L1299.0 234.1L1300.9 234.6L1303.5 233.9L1304.7 235.0L1306.5 233.0L1308.2 233.0L1309.6 234.6L1310.8 232.8L1313.6 235.0L1315.5 233.4L1316.9 233.3L1319.3 234.9L1321.6 233.5L1324.1 234.8L1325.3 234.5L1327.1 235.3L1329.6 232.9L1331.8 233.7L1332.8 233.7L1335.2 233.9L1337.7 234.7L1339.5 234.5L1340.9 234.9L1343.9 232.8L1346.1 234.9L1349.1 232.6L1351.7 233.2L1353.0 234.4L1354.9 234.1L1357.7 234.8L1359.0 234.8L1361.3 233.2L1363.3 233.1L1364.7 234.9L1366.8 235.2L1369.4 233.7L1370.6 234.1L1371.6 233.2L1373.4 234.4L1375.7 234.8L1377.4 233.4L1378.8 233.1L1379.7 233.6L1382.8 232.9L1385.5 234.2L1387.8 233.4L1390.5 232.8L1391.5 234.5L1393.3 235.1L1395.7 234.9L1398.0 233.2L1399.4 233.3L1401.8 235.0L1405.0 233.2L1407.2 234.3L1409.5 236.3L1413.0 240.6L1415.3 242.9L1416.9 246.0L1417.0 249.2L1416.0 255.5L1414.4 256.7L1412.9 259.0L1411.5 259.7L1410.5 261.7L1407.4 263.5L1406.1 262.5L1405.2 263.7L1402.9 262.4L1400.4 265.1L1399.2 262.4L1396.1 264.1L1394.2 263.6L1391.9 263.6L1389.5 263.2L1387.3 263.4L1384.6 264.7L1382.3 262.6L1380.6 263.4L1377.6 263.9L1375.4 264.0L1373.0 263.2L1371.2 263.7L1369.5 262.4L1366.9 264.5L1364.9 262.9L1362.3 263.4L1360.9 263.5L1358.0 262.6L1356.0 264.6L1353.9 264.5L1352.0 262.8L1350.2 263.0L1349.3 264.5L1346.6 264.7L1344.4 262.9L1342.2 263.0L1340.2 264.9L1339.1 263.0L1336.8 263.1L1334.6 263.9L1333.2 262.7L1329.8 264.7L1328.3 263.3L1325.5 263.3L1324.1 263.7L1321.9 264.3L1319.4 264.4L1318.0 263.1L1315.6 263.4L1314.4 264.2L1312.1 264.5L1310.0 264.7L1309.3 264.9L1307.5 264.3L1304.6 264.2L1302.2 264.0L1300.8 264.7L1298.1 262.5L1296.1 263.9L1293.8 263.8L1292.0 264.1L1289.9 263.7L1287.3 264.0L1285.5 263.8L1282.4 265.0L1279.7 263.9L1276.9 264.7L1275.2 264.3L1272.3 264.2L1269.4 263.5L1268.6 262.7L1267.1 264.8L1264.4 265.1L1261.7 264.3L1260.0 263.5L1257.8 263.0L1255.2 264.1L1252.8 263.9L1250.2 264.7L1249.2 263.1L1246.9 263.2L1245.0 262.4L1242.8 263.9L1241.2 265.0L1239.9 264.7L1237.2 263.9L1233.8 263.0L1231.5 264.6L1229.2 262.8L1225.8 263.4L1224.1 262.8L1222.8 264.2L1220.4 264.8L1219.0 263.7L1217.8 262.4L1214.6 263.8L1213.6 265.0L1210.4 265.0L1209.0 264.1L1206.1 264.6L1204.9 263.2L1203.2 264.6L1201.5 263.7L1198.5 263.4L1196.5 262.5L1195.0 263.7L1192.5 264.7L1190.8 264.7L1189.7 263.7L1187.3 261.7L1185.6 258.5L1184.4 258.4L1182.0 255.2L1179.9 252.5Z" fill="#fde5b3"/><clipPath id="c7"><use href="#n7"/></clipPath><g clip-path="url(#c7)"><g stroke="#fef8e7" fill="none"><path d="M1160.7 261.4L1179.6 232.3" stroke-width="0.9" stroke-opacity="0.51"/><path d="M1165.3 265.9L1185.4 235.0" stroke-width="0.9" stroke-opacity="0.61"/><path d="M1175.3 260.5L1184.1 246.8" stroke-width="1.2" stroke-opacity="0.59"/><path d="M1180.7 258.7L1194.9 236.9" stroke-width="2.2" stroke-opacity="0.19"/><path d="M1184.3 262.9L1203.6 233.2" stroke-width="0.9" stroke-opacity="0.35"/><path d="M1187.8 263.5L1204.4 238.0" stroke-width="0.9" stroke-opacity="0.34"/><path d="M1191.8 265.2L1210.5 236.4" stroke-width="1.2" stroke-opacity="0.65"/><path d="M1204.8 253.3L1213.7 239.6" stroke-width="2.2" stroke-opacity="0.28"/><path d="M1207.2 262.5L1220.2 242.5" stroke-width="0.7" stroke-opacity="0.60"/><path d="M1224.0 249.2L1232.0 236.9" stroke-width="0.9" stroke-opacity="0.57"/><path d="M1225.5 265.1L1243.9 236.7" stroke-width="0.7" stroke-opacity="0.63"/><path d="M1229.4 265.9L1247.2 238.5" stroke-width="0.9" stroke-opacity="0.51"/><path d="M1241.6 258.0L1250.3 244.5" stroke-width="0.9" stroke-opacity="0.47"/><path d="M1257.5 248.3L1260.9 243.2" stroke-width="0.7" stroke-opacity="0.39"/><path d="M1265.9 253.3L1271.8 244.3" stroke-width="2.2" stroke-opacity="0.32"/><path d="M1265.6 262.9L1285.4 232.4" stroke-width="1.2" stroke-opacity="0.40"/><path d="M1272.3 262.4L1291.4 233.1" stroke-width="0.9" stroke-opacity="0.49"/><path d="M1278.3 262.7L1296.2 235.3" stroke-width="1.6" stroke-opacity="0.40"/><path d="M1284.1 259.7L1295.4 242.2" stroke-width="0.7" stroke-opacity="0.31"/><path d="M1298.0 253.0L1310.5 233.8" stroke-width="1.2" stroke-opacity="0.51"/><path d="M1303.6 249.9L1304.5 248.5" stroke-width="0.9" stroke-opacity="0.42"/><path d="M1303.8 260.1L1315.5 242.0" stroke-width="1.6" stroke-opacity="0.30"/><path d="M1316.0 260.5L1329.9 239.1" stroke-width="0.9" stroke-opacity="0.46"/><path d="M1318.2 265.9L1337.2 236.7" stroke-width="1.6" stroke-opacity="0.34"/><path d="M1329.6 263.0L1342.2 243.6" stroke-width="1.2" stroke-opacity="0.40"/><path d="M1339.5 262.8L1359.6 231.8" stroke-width="0.7" stroke-opacity="0.37"/><path d="M1347.9 263.5L1365.1 237.0" stroke-width="1.2" stroke-opacity="0.56"/><path d="M1352.1 263.2L1372.8 231.5" stroke-width="2.2" stroke-opacity="0.40"/><path d="M1361.6 259.2L1377.5 234.8" stroke-width="0.7" stroke-opacity="0.62"/><path d="M1369.0 259.6L1384.9 235.2" stroke-width="1.6" stroke-opacity="0.21"/><path d="M1371.7 265.9L1393.1 232.9" stroke-width="0.9" stroke-opacity="0.70"/><path d="M1379.9 258.7L1392.4 239.5" stroke-width="0.7" stroke-opacity="0.55"/><path d="M1383.8 262.4L1402.5 233.5" stroke-width="0.9" stroke-opacity="0.64"/><path d="M1388.7 261.7L1406.2 234.8" stroke-width="0.9" stroke-opacity="0.67"/><path d="M1405.3 249.4L1414.0 236.0" stroke-width="0.7" stroke-opacity="0.43"/><path d="M1409.6 252.7L1423.1 231.8" stroke-width="1.2" stroke-opacity="0.47"/><path d="M1412.0 260.7L1430.3 232.6" stroke-width="2.2" stroke-opacity="0.25"/><path d="M1420.1 260.1L1426.7 250.0" stroke-width="0.7" stroke-opacity="0.58"/></g></g><path id="n8" d="M1179.6 279.3L1182.8 276.6L1185.2 272.9L1187.8 271.0L1190.8 268.8L1193.1 266.8L1195.3 266.9L1196.6 268.0L1198.3 267.6L1201.0 268.1L1204.2 267.3L1205.0 268.3L1208.6 269.0L1209.7 267.7L1212.2 267.5L1214.4 266.7L1217.3 267.4L1219.5 267.2L1222.0 269.0L1223.5 268.7L1225.4 266.5L1228.6 268.5L1230.4 268.7L1232.8 266.7L1235.1 266.5L1237.6 268.1L1239.9 266.8L1242.4 267.2L1243.5 267.6L1245.2 266.6L1247.0 266.6L1249.0 266.6L1250.7 266.4L1252.6 268.6L1254.3 268.9L1257.0 267.9L1259.2 269.0L1261.3 266.4L1262.6 267.9L1264.8 267.7L1266.2 267.8L1268.9 268.9L1270.7 268.9L1272.8 267.1L1275.2 268.3L1276.9 267.0L1279.3 266.5L1282.6 268.6L1284.2 268.2L1285.6 268.9L1288.9 268.5L1290.3 267.4L1292.1 267.2L1293.9 268.7L1294.9 267.9L1297.7 268.5L1299.1 266.3L1300.6 267.4L1302.9 267.3L1306.0 268.7L1306.9 266.7L1309.6 268.0L1312.9 267.4L1314.9 267.6L1317.5 268.2L1319.9 267.4L1322.1 269.0L1324.5 267.4L1327.8 266.9L1330.8 268.1L1332.9 267.7L1336.2 268.0L1337.6 267.4L1339.4 266.3L1341.6 268.0L1343.6 267.3L1344.2 267.6L1347.2 267.7L1348.3 268.4L1349.4 268.6L1351.4 268.5L1353.5 268.5L1354.7 266.7L1358.1 267.6L1359.4 266.5L1361.3 267.1L1363.9 267.1L1366.5 266.4L1367.5 266.4L1368.7 268.6L1371.2 272.0L1373.7 273.2L1376.2 276.1L1377.6 278.6L1379.5 281.9L1378.2 286.4L1374.8 290.6L1373.7 292.8L1371.7 293.8L1370.6 294.5L1367.7 296.8L1365.6 296.5L1362.7 298.6L1360.3 298.8L1357.1 296.6L1355.8 297.1L1353.8 297.1L1352.4 297.8L1349.6 296.3L1348.3 296.8L1346.3 298.4L1345.0 297.7L1344.3 296.9L1340.8 296.9L1340.1 296.6L1337.4 298.5L1335.8 297.1L1333.2 297.5L1330.6 296.2L1328.5 296.7L1325.8 297.0L1323.6 297.5L1320.6 296.4L1318.9 296.6L1316.7 298.2L1314.2 298.2L1312.4 297.8L1309.4 296.8L1308.5 296.9L1306.5 296.3L1305.0 297.0L1302.1 297.8L1300.8 297.7L1298.6 297.6L1296.9 296.7L1294.6 298.7L1291.8 296.1L1289.0 297.2L1286.9 297.4L1285.0 296.3L1283.2 298.8L1281.2 297.6L1278.2 298.6L1276.3 297.7L1275.0 296.2L1274.1 298.1L1272.6 298.3L1271.0 298.3L1268.2 298.2L1265.7 297.2L1263.1 298.1L1261.4 298.3L1258.6 297.9L1255.6 297.9L1252.8 297.9L1250.4 298.3L1249.3 298.5L1247.9 297.5L1245.3 298.5L1241.8 296.8L1241.2 296.9L1239.4 298.5L1237.5 298.7L1235.0 298.6L1232.9 297.2L1230.5 298.1L1227.2 296.6L1224.6 296.7L1223.2 298.6L1221.4 297.4L1218.8 298.8L1216.5 297.1L1214.2 297.8L1212.0 297.6L1209.4 296.1L1207.3 296.1L1205.7 296.3L1203.2 296.2L1201.5 296.5L1199.6 297.1L1197.1 298.0L1194.5 298.1L1192.0 298.0L1189.8 296.6L1187.3 294.6L1184.9 293.7L1183.1 288.5L1181.1 286.0Z" fill="#fde5b3"/><clipPath id="c8"><use href="#n8"/></clipPath><g clip-path="url(#c8)"><g stroke="#fef8e7" fill="none"><path d="M1163.8 291.9L1175.8 273.3" stroke-width="1.6" stroke-opacity="0.29"/><path d="M1171.4 296.2L1179.8 283.4" stroke-width="0.9" stroke-opacity="0.64"/><path d="M1187.6 281.5L1196.5 267.8" stroke-width="0.7" stroke-opacity="0.59"/><path d="M1182.4 296.8L1201.6 267.1" stroke-width="0.9" stroke-opacity="0.41"/><path d="M1194.0 294.6L1212.3 266.3" stroke-width="0.9" stroke-opacity="0.57"/><path d="M1211.5 282.0L1220.0 268.9" stroke-width="1.2" stroke-opacity="0.57"/><path d="M1214.1 284.6L1222.0 272.5" stroke-width="1.6" stroke-opacity="0.23"/><path d="M1221.4 280.9L1227.2 272.0" stroke-width="0.7" stroke-opacity="0.67"/><path d="M1222.9 293.2L1232.1 279.1" stroke-width="0.9" stroke-opacity="0.41"/><path d="M1230.8 299.5L1252.5 266.0" stroke-width="0.9" stroke-opacity="0.34"/><path d="M1245.1 295.8L1261.1 271.3" stroke-width="2.2" stroke-opacity="0.38"/><path d="M1260.4 287.3L1271.6 270.1" stroke-width="0.7" stroke-opacity="0.44"/><path d="M1260.5 297.9L1277.3 272.0" stroke-width="2.2" stroke-opacity="0.39"/><path d="M1266.8 298.7L1278.0 281.5" stroke-width="1.6" stroke-opacity="0.42"/><path d="M1279.1 297.4L1297.6 269.0" stroke-width="0.9" stroke-opacity="0.30"/><path d="M1286.9 291.5L1300.7 270.3" stroke-width="0.7" stroke-opacity="0.68"/><path d="M1296.7 294.9L1315.4 266.2" stroke-width="0.9" stroke-opacity="0.31"/><path d="M1302.9 299.1L1323.9 266.8" stroke-width="0.9" stroke-opacity="0.34"/><path d="M1312.9 293.8L1326.3 273.1" stroke-width="2.2" stroke-opacity="0.20"/><path d="M1320.4 296.5L1335.4 273.4" stroke-width="2.2" stroke-opacity="0.19"/><path d="M1334.5 286.0L1347.6 265.8" stroke-width="2.2" stroke-opacity="0.32"/><path d="M1345.5 286.2L1355.1 271.4" stroke-width="0.7" stroke-opacity="0.39"/><path d="M1345.3 292.8L1359.4 271.0" stroke-width="0.7" stroke-opacity="0.43"/><path d="M1357.4 291.6L1370.8 271.1" stroke-width="0.9" stroke-opacity="0.69"/><path d="M1361.5 297.8L1379.1 270.7" stroke-width="1.2" stroke-opacity="0.39"/><path d="M1375.2 293.9L1388.6 273.1" stroke-width="0.9" stroke-opacity="0.56"/></g></g><path id="n9" d="M718.2 362.6L721.2 360.8L723.1 358.9L726.0 354.2L728.2 351.8L729.4 352.4L731.9 351.7L733.1 352.1L736.2 351.5L737.4 351.9L740.1 350.9L743.5 352.0L744.3 351.7L746.7 351.0L748.3 350.7L750.9 351.6L753.1 350.8L755.0 350.6L757.7 351.2L759.1 353.0L761.3 353.2L763.5 353.3L765.1 352.5L767.9 352.2L770.4 353.1L771.9 351.6L773.7 353.1L775.7 352.0L778.2 351.8L779.4 351.4L781.8 353.0L783.5 350.6L785.1 352.1L787.6 350.8L788.8 350.7L790.2 351.8L791.7 351.4L793.5 352.7L796.8 352.5L798.3 352.2L799.7 352.6L802.2 352.0L803.2 350.5L804.6 353.2L806.6 351.0L807.9 351.0L809.7 352.1L812.8 351.5L814.6 352.1L817.1 352.9L818.0 351.9L820.3 353.2L822.6 352.7L824.3 351.8L825.4 352.5L828.5 351.9L830.5 353.1L831.4 350.9L834.1 351.6L836.1 352.6L837.6 352.9L840.2 352.2L842.5 351.0L844.0 351.0L846.8 352.2L847.8 352.8L850.2 351.1L853.8 353.1L856.3 352.5L857.3 352.2L859.5 351.0L861.1 353.2L863.1 351.9L866.0 351.2L868.3 352.8L870.5 353.0L872.3 351.6L874.0 352.2L876.8 352.2L878.1 353.6L879.8 354.0L881.9 355.1L884.2 357.7L886.6 361.0L888.9 365.5L887.0 371.2L884.6 373.4L883.3 376.2L881.9 376.9L880.0 380.2L877.5 380.3L874.6 379.9L872.6 381.9L870.3 382.0L868.3 380.2L866.7 381.3L864.0 380.1L862.0 382.0L859.2 381.6L857.0 380.1L854.9 381.0L853.5 380.4L851.6 381.7L848.9 380.3L845.9 382.1L844.0 381.6L842.1 380.1L840.9 381.5L838.0 380.7L835.8 381.8L834.8 382.0L832.9 380.8L830.8 382.2L828.5 381.8L825.9 379.8L823.9 382.3L822.6 380.3L820.3 379.9L818.4 380.3L816.9 381.6L813.4 379.8L811.4 380.6L809.7 382.1L806.9 380.2L804.5 380.2L802.9 382.2L800.2 381.2L797.8 380.8L794.7 380.0L792.6 382.0L789.7 380.0L787.5 381.8L785.3 381.0L783.1 381.5L781.2 381.3L780.0 381.7L776.7 379.8L775.6 381.5L774.0 380.3L771.9 380.3L769.8 380.4L768.8 380.3L766.3 381.7L764.2 381.7L762.8 380.3L760.7 379.8L758.2 381.3L755.2 381.5L754.2 382.1L750.9 380.2L748.9 379.8L747.3 380.4L745.8 379.7L743.0 380.6L742.5 380.3L740.5 382.1L738.5 381.2L736.0 381.2L733.1 381.1L732.1 381.1L728.9 380.1L726.2 379.9L724.7 378.5L723.0 375.8L721.0 371.5L719.1 370.7Z" fill="#fde5b3"/><clipPath id="c9"><use href="#n9"/></clipPath><g clip-path="url(#c9)"><g stroke="#fef8e7" fill="none"><path d="M697.2 383.1L708.5 365.6" stroke-width="1.6" stroke-opacity="0.37"/><path d="M707.8 380.9L718.9 363.8" stroke-width="1.2" stroke-opacity="0.60"/><path d="M721.4 376.5L737.4 351.8" stroke-width="2.2" stroke-opacity="0.43"/><path d="M727.6 378.1L744.0 352.7" stroke-width="0.9" stroke-opacity="0.64"/><path d="M743.5 369.2L755.9 350.1" stroke-width="0.9" stroke-opacity="0.63"/><path d="M746.3 383.4L763.4 356.9" stroke-width="0.9" stroke-opacity="0.37"/><path d="M759.0 378.2L777.1 350.2" stroke-width="0.9" stroke-opacity="0.52"/><path d="M762.1 382.4L779.4 355.6" stroke-width="0.7" stroke-opacity="0.60"/><path d="M779.8 369.5L783.2 364.4" stroke-width="1.2" stroke-opacity="0.40"/><path d="M778.8 380.1L795.6 354.3" stroke-width="0.9" stroke-opacity="0.50"/><path d="M789.6 372.6L803.0 351.9" stroke-width="0.7" stroke-opacity="0.58"/><path d="M799.6 365.3L808.9 351.0" stroke-width="0.7" stroke-opacity="0.68"/><path d="M805.2 370.1L818.1 350.3" stroke-width="2.2" stroke-opacity="0.40"/><path d="M813.9 368.3L819.5 359.7" stroke-width="1.6" stroke-opacity="0.24"/><path d="M823.1 371.5L830.3 360.4" stroke-width="0.9" stroke-opacity="0.60"/><path d="M825.5 375.8L839.3 354.6" stroke-width="1.6" stroke-opacity="0.36"/><path d="M829.2 381.5L846.1 355.4" stroke-width="0.9" stroke-opacity="0.48"/><path d="M840.8 376.5L848.0 365.5" stroke-width="0.7" stroke-opacity="0.48"/><path d="M846.3 378.0L864.9 349.3" stroke-width="2.2" stroke-opacity="0.27"/><path d="M862.3 371.1L871.8 356.4" stroke-width="2.2" stroke-opacity="0.42"/><path d="M869.8 378.7L888.4 350.0" stroke-width="0.7" stroke-opacity="0.65"/><path d="M875.5 376.6L888.4 356.7" stroke-width="0.9" stroke-opacity="0.39"/><path d="M889.3 372.4L899.3 357.0" stroke-width="2.2" stroke-opacity="0.30"/><path d="M887.4 381.7L907.2 351.2" stroke-width="0.9" stroke-opacity="0.65"/></g></g><path id="n10" d="M949.1 362.7L950.6 361.5L953.8 359.5L955.1 357.0L957.0 355.3L959.7 352.3L960.9 350.9L963.3 350.8L966.0 350.8L966.9 352.6L969.5 351.3L970.3 351.4L973.2 351.3L975.0 352.7L977.3 353.1L979.4 352.0L982.7 352.8L984.3 351.1L985.4 351.5L988.2 351.6L989.6 350.7L990.8 352.2L994.0 351.5L996.9 352.9L999.2 353.0L1002.0 352.1L1002.9 351.3L1004.8 352.4L1006.4 351.9L1009.0 352.0L1011.2 353.0L1012.4 350.7L1014.0 353.2L1016.1 350.7L1018.0 352.6L1019.4 351.1L1021.5 353.1L1024.3 351.6L1024.6 352.5L1027.5 352.8L1028.2 352.0L1031.3 351.9L1032.7 351.3L1034.2 353.1L1036.5 351.1L1038.2 351.4L1040.1 352.0L1042.3 350.7L1044.7 350.5L1045.6 352.9L1048.5 350.7L1049.5 352.4L1051.0 353.3L1053.1 352.3L1054.6 352.3L1057.4 351.7L1058.8 352.3L1060.1 350.8L1062.0 350.7L1063.4 350.9L1065.1 352.4L1067.9 351.3L1070.7 350.6L1073.4 352.8L1074.9 352.6L1076.3 351.6L1078.4 350.7L1081.0 353.0L1082.0 354.0L1084.1 355.3L1085.8 356.6L1086.4 357.9L1088.7 360.5L1091.0 362.0L1092.1 366.3L1090.5 369.9L1089.5 372.2L1086.6 374.0L1084.4 376.8L1083.1 379.0L1080.8 381.5L1079.2 382.0L1076.0 380.2L1074.1 381.2L1072.0 381.5L1070.6 381.7L1068.1 380.5L1065.8 379.8L1063.8 380.2L1061.9 380.1L1060.2 381.8L1058.0 380.9L1056.3 382.1L1053.9 381.5L1051.1 380.4L1048.5 379.9L1046.3 382.3L1043.8 380.6L1040.7 380.3L1039.3 381.2L1038.1 379.9L1035.5 381.0L1034.0 381.9L1031.6 382.2L1030.2 381.2L1028.1 382.5L1025.6 380.2L1022.3 380.9L1020.9 380.5L1019.5 380.8L1017.5 381.6L1014.4 380.5L1011.4 381.0L1008.9 379.7L1007.4 382.3L1004.0 380.0L1002.9 382.2L1000.1 380.7L997.3 380.2L994.4 381.4L992.7 380.0L991.1 381.4L989.0 381.5L985.7 379.8L985.0 381.3L982.2 380.1L980.3 380.0L978.7 380.7L976.9 380.5L974.8 380.2L972.2 380.2L970.0 381.7L968.6 381.1L965.4 379.8L964.4 381.0L962.2 380.3L959.9 381.1L957.7 378.6L954.7 375.1L952.3 374.4L950.8 372.7Z" fill="#fde5b3"/><clipPath id="c10"><use href="#n10"/></clipPath><g clip-path="url(#c10)"><g stroke="#fef8e7" fill="none"><path d="M938.3 371.1L949.1 354.5" stroke-width="2.2" stroke-opacity="0.26"/><path d="M941.5 377.8L957.0 353.9" stroke-width="1.2" stroke-opacity="0.36"/><path d="M944.5 380.6L961.0 355.1" stroke-width="1.6" stroke-opacity="0.42"/><path d="M948.7 382.9L967.5 353.9" stroke-width="2.2" stroke-opacity="0.43"/><path d="M962.0 379.8L971.3 365.5" stroke-width="1.6" stroke-opacity="0.36"/><path d="M973.6 376.7L985.9 357.7" stroke-width="0.9" stroke-opacity="0.68"/><path d="M986.7 371.3L999.9 351.0" stroke-width="0.9" stroke-opacity="0.59"/><path d="M989.8 383.2L1003.9 361.5" stroke-width="2.2" stroke-opacity="0.22"/><path d="M995.6 383.1L1015.2 352.8" stroke-width="0.9" stroke-opacity="0.43"/><path d="M1005.7 379.1L1014.2 365.9" stroke-width="1.6" stroke-opacity="0.40"/><path d="M1017.6 375.2L1033.8 350.3" stroke-width="2.2" stroke-opacity="0.31"/><path d="M1020.9 376.1L1037.6 350.4" stroke-width="0.9" stroke-opacity="0.31"/><path d="M1023.6 379.1L1038.8 355.6" stroke-width="1.6" stroke-opacity="0.37"/><path d="M1034.1 376.0L1046.6 356.6" stroke-width="2.2" stroke-opacity="0.40"/><path d="M1040.4 378.7L1058.0 351.7" stroke-width="0.7" stroke-opacity="0.37"/><path d="M1044.5 378.7L1063.3 349.7" stroke-width="2.2" stroke-opacity="0.31"/><path d="M1058.7 371.0L1068.9 355.3" stroke-width="2.2" stroke-opacity="0.33"/><path d="M1065.4 376.4L1082.7 349.9" stroke-width="0.9" stroke-opacity="0.58"/><path d="M1072.3 379.1L1087.7 355.4" stroke-width="0.9" stroke-opacity="0.48"/><path d="M1074.7 383.1L1093.9 353.5" stroke-width="2.2" stroke-opacity="0.32"/><path d="M1085.6 380.5L1094.2 367.2" stroke-width="0.9" stroke-opacity="0.62"/></g></g><path id="n11" d="M1151.8 311.3L1153.8 310.7L1156.9 306.9L1159.9 303.4L1161.0 302.2L1163.9 300.0L1166.9 301.6L1168.6 301.7L1170.4 300.7L1173.7 299.8L1175.7 302.3L1178.1 300.9L1179.1 300.5L1182.0 302.3L1184.4 300.7L1187.8 301.2L1189.7 300.3L1191.6 300.5L1193.3 302.2L1196.2 300.4L1198.3 301.9L1201.0 301.2L1202.5 301.7L1206.0 300.0L1207.8 302.3L1210.1 302.3L1212.1 300.7L1213.7 301.0L1215.5 300.8L1217.6 302.1L1219.4 300.8L1220.7 302.0L1221.9 300.1L1224.6 302.2L1225.7 299.9L1226.4 300.9L1229.8 300.5L1230.9 300.0L1232.6 301.8L1234.5 300.8L1236.3 299.9L1238.5 300.0L1240.8 300.5L1242.7 301.6L1245.8 302.0L1248.4 300.5L1250.0 301.4L1251.5 301.6L1253.8 301.3L1257.0 301.0L1258.3 299.8L1259.2 300.3L1261.1 300.0L1262.8 300.1L1264.4 302.1L1266.7 300.3L1268.6 302.1L1270.1 302.0L1273.2 302.1L1275.4 300.8L1278.2 300.4L1280.4 299.8L1282.9 302.4L1285.5 302.1L1286.3 302.1L1288.4 301.1L1290.6 301.3L1293.9 300.2L1296.4 300.7L1298.3 299.7L1299.9 301.1L1302.8 301.8L1304.2 300.7L1306.4 301.2L1308.8 302.0L1311.4 300.2L1313.5 300.1L1315.6 300.3L1317.3 300.8L1319.9 299.8L1322.2 302.0L1325.1 300.0L1327.1 299.9L1328.5 302.3L1330.3 300.9L1333.2 300.6L1335.8 301.8L1337.3 301.6L1338.8 300.2L1341.7 300.6L1344.0 301.0L1345.7 300.6L1347.2 300.0L1349.5 299.9L1350.3 301.5L1352.4 299.9L1354.2 303.5L1357.6 305.5L1359.4 305.9L1360.7 307.2L1363.1 312.3L1364.5 315.5L1363.2 320.6L1361.4 321.4L1360.9 324.0L1357.9 327.6L1355.3 329.1L1354.0 330.4L1352.8 331.6L1351.5 329.9L1349.4 329.7L1347.3 330.9L1345.3 329.9L1343.5 329.7L1342.1 331.0L1339.1 329.6L1337.3 329.8L1336.2 331.1L1334.8 331.2L1333.1 331.7L1330.9 330.9L1329.3 330.5L1326.7 330.1L1323.8 331.4L1322.1 332.2L1319.8 330.0L1316.4 330.6L1313.7 329.5L1311.8 331.0L1309.1 330.9L1307.2 331.8L1305.3 330.2L1302.7 329.8L1300.5 329.9L1298.2 332.1L1296.9 331.3L1294.5 330.5L1293.7 330.5L1292.0 329.5L1291.1 329.7L1289.0 331.9L1287.1 331.5L1285.6 331.8L1282.7 331.3L1281.1 331.9L1280.0 332.1L1277.8 330.9L1276.2 330.3L1274.4 332.2L1272.5 329.6L1269.6 331.5L1268.4 330.3L1265.0 329.7L1263.5 332.0L1261.7 331.4L1260.9 331.1L1259.5 331.6L1256.2 331.8L1255.0 332.0L1252.4 331.3L1250.7 331.5L1249.6 332.1L1247.7 331.5L1244.7 331.0L1241.1 331.9L1239.8 330.6L1238.3 332.0L1236.4 330.1L1234.8 331.6L1232.4 331.4L1230.6 331.6L1228.8 331.9L1227.2 331.6L1225.3 329.5L1222.2 330.8L1220.9 331.1L1219.6 330.8L1216.9 329.6L1213.9 330.9L1213.1 331.7L1211.5 331.2L1208.1 331.6L1206.7 331.2L1204.9 329.9L1202.2 332.1L1200.3 331.4L1197.4 330.5L1195.9 330.0L1194.2 330.4L1191.5 331.8L1190.2 332.0L1187.3 330.7L1186.0 329.7L1184.2 331.6L1182.2 331.8L1181.3 331.6L1179.1 331.3L1176.2 330.2L1173.4 330.8L1171.3 329.6L1169.7 330.6L1167.2 329.6L1166.3 329.5L1163.7 332.2L1161.4 328.6L1160.2 327.6L1157.3 325.2L1155.8 323.1L1153.2 318.9Z" fill="#fde5b3"/><clipPath id="c11"><use href="#n11"/></clipPath><g clip-path="url(#c11)"><g stroke="#fef8e7" fill="none"><path d="M1140.9 319.6L1146.0 311.8" stroke-width="0.9" stroke-opacity="0.68"/><path d="M1141.6 325.2L1154.1 305.9" stroke-width="2.2" stroke-opacity="0.36"/><path d="M1151.7 325.1L1158.8 314.2" stroke-width="0.7" stroke-opacity="0.55"/><path d="M1163.1 325.0L1175.3 306.4" stroke-width="0.9" stroke-opacity="0.65"/><path d="M1171.9 326.6L1184.6 306.9" stroke-width="0.9" stroke-opacity="0.65"/><path d="M1174.8 333.4L1192.6 306.1" stroke-width="2.2" stroke-opacity="0.26"/><path d="M1183.6 330.1L1200.8 303.6" stroke-width="1.2" stroke-opacity="0.44"/><path d="M1188.3 331.4L1205.3 305.3" stroke-width="0.9" stroke-opacity="0.65"/><path d="M1206.5 322.1L1218.0 304.4" stroke-width="0.9" stroke-opacity="0.31"/><path d="M1205.9 332.8L1223.8 305.4" stroke-width="0.9" stroke-opacity="0.67"/><path d="M1227.7 316.2L1239.0 298.8" stroke-width="1.6" stroke-opacity="0.26"/><path d="M1228.9 326.8L1242.6 305.7" stroke-width="1.2" stroke-opacity="0.47"/><path d="M1238.4 329.6L1254.2 305.3" stroke-width="0.9" stroke-opacity="0.59"/><path d="M1248.1 324.8L1261.9 303.5" stroke-width="0.7" stroke-opacity="0.42"/><path d="M1261.6 314.8L1267.0 306.4" stroke-width="1.2" stroke-opacity="0.53"/><path d="M1262.5 330.2L1278.1 306.1" stroke-width="2.2" stroke-opacity="0.38"/><path d="M1272.1 326.6L1289.6 299.7" stroke-width="0.9" stroke-opacity="0.65"/><path d="M1279.5 328.1L1298.0 299.6" stroke-width="1.2" stroke-opacity="0.39"/><path d="M1286.0 326.3L1302.9 300.2" stroke-width="0.9" stroke-opacity="0.35"/><path d="M1296.0 321.1L1308.6 301.7" stroke-width="0.9" stroke-opacity="0.69"/><path d="M1305.2 325.6L1315.7 309.5" stroke-width="0.9" stroke-opacity="0.62"/><path d="M1314.1 326.1L1328.7 303.6" stroke-width="2.2" stroke-opacity="0.43"/><path d="M1322.9 319.7L1335.2 300.8" stroke-width="2.2" stroke-opacity="0.29"/><path d="M1328.7 316.7L1337.9 302.6" stroke-width="0.7" stroke-opacity="0.46"/><path d="M1330.4 326.1L1348.0 299.0" stroke-width="2.2" stroke-opacity="0.28"/><path d="M1341.0 318.7L1348.6 307.1" stroke-width="1.2" stroke-opacity="0.37"/><path d="M1347.3 315.5L1354.6 304.3" stroke-width="1.6" stroke-opacity="0.21"/><path d="M1347.5 327.2L1365.0 300.1" stroke-width="0.9" stroke-opacity="0.34"/><path d="M1354.3 328.9L1368.8 306.5" stroke-width="1.2" stroke-opacity="0.56"/><path d="M1372.4 316.4L1374.9 312.7" stroke-width="2.2" stroke-opacity="0.34"/></g></g><path id="n12" d="M1151.9 346.6L1153.3 344.9L1156.1 340.8L1159.6 337.3L1160.6 336.8L1161.4 335.3L1163.8 335.0L1165.7 334.4L1166.8 335.4L1168.7 334.5L1171.4 335.6L1175.0 335.2L1175.6 334.3L1178.4 333.4L1179.5 334.8L1180.9 335.4L1182.5 334.3L1184.6 334.7L1187.0 334.3L1187.8 335.7L1190.5 335.3L1191.8 333.4L1193.4 335.4L1194.9 336.0L1197.5 334.6L1199.7 333.8L1202.7 335.2L1204.7 333.6L1206.0 334.6L1208.9 334.1L1210.9 333.5L1212.1 333.9L1214.8 336.0L1216.5 333.5L1218.2 335.2L1220.1 335.6L1221.3 335.9L1223.2 336.0L1224.8 334.8L1226.5 336.1L1229.2 333.9L1230.9 334.3L1232.0 333.4L1234.1 334.9L1235.0 334.7L1237.0 335.1L1239.3 336.1L1241.6 335.2L1244.0 335.5L1246.9 334.5L1249.4 335.4L1251.3 334.5L1254.4 334.1L1256.7 333.4L1257.8 335.8L1260.1 334.8L1261.8 333.8L1263.7 336.1L1264.9 335.3L1266.0 333.7L1268.1 333.4L1270.6 334.7L1271.8 334.9L1275.1 333.8L1277.4 333.5L1279.9 334.8L1281.7 335.4L1283.7 333.5L1286.1 335.5L1289.5 333.4L1290.6 333.7L1291.4 335.6L1293.9 334.0L1295.0 333.4L1295.8 333.6L1297.3 335.2L1298.6 334.2L1300.2 335.7L1303.3 333.5L1305.5 333.9L1307.1 333.7L1309.6 333.5L1311.6 334.1L1313.8 334.7L1315.0 336.0L1316.9 334.7L1319.0 335.2L1322.5 334.4L1324.9 334.1L1327.6 335.6L1329.2 334.4L1331.2 334.8L1334.3 334.3L1335.2 334.7L1337.2 333.5L1338.4 334.7L1341.0 336.0L1343.6 337.7L1345.9 340.5L1347.8 342.4L1348.8 343.1L1349.8 344.4L1350.7 349.2L1350.4 353.8L1348.8 357.3L1346.3 358.8L1344.9 359.8L1342.0 364.1L1339.7 365.1L1336.4 364.6L1335.2 365.3L1332.9 365.2L1330.5 363.9L1328.9 363.9L1325.4 365.7L1323.2 364.6L1321.8 364.0L1319.0 364.6L1317.0 365.9L1314.2 364.5L1313.3 363.3L1310.0 365.9L1307.6 364.7L1306.4 363.8L1304.3 363.7L1301.3 364.0L1299.6 365.7L1298.6 364.9L1295.7 365.6L1292.7 365.2L1289.9 364.2L1288.3 363.2L1287.4 363.8L1286.1 364.9L1284.1 364.1L1281.4 365.8L1280.2 365.2L1278.0 365.2L1275.9 365.0L1274.2 365.8L1271.6 364.5L1269.9 365.0L1267.8 364.8L1265.3 364.7L1263.9 363.9L1260.4 363.6L1258.9 364.4L1257.9 363.5L1256.3 363.5L1254.5 364.2L1251.2 365.0L1248.5 363.9L1246.5 364.6L1242.8 365.5L1241.3 364.4L1239.0 363.5L1236.6 363.2L1234.6 365.2L1232.8 363.6L1231.2 364.2L1229.6 364.8L1228.2 364.9L1226.4 363.8L1223.9 365.2L1221.1 363.9L1218.5 364.9L1216.0 364.1L1212.7 364.3L1211.2 364.3L1208.8 365.8L1206.3 364.7L1205.4 365.7L1202.5 363.4L1200.9 365.9L1198.3 364.3L1195.7 363.5L1193.8 364.9L1191.4 365.3L1188.7 363.5L1186.9 365.8L1184.7 363.9L1183.1 365.0L1181.0 364.2L1180.2 363.5L1178.1 364.0L1175.6 363.5L1173.5 365.4L1171.6 365.5L1169.9 364.7L1167.8 364.5L1166.6 363.4L1164.7 363.9L1161.9 364.3L1160.2 360.7L1157.0 358.8L1154.1 355.9Z" fill="#fde5b3"/><clipPath id="c12"><use href="#n12"/></clipPath><g clip-path="url(#c12)"><g stroke="#fef8e7" fill="none"><path d="M1131.1 366.3L1150.4 336.5" stroke-width="0.9" stroke-opacity="0.49"/><path d="M1138.0 363.6L1156.6 335.0" stroke-width="1.2" stroke-opacity="0.57"/><path d="M1153.3 350.3L1162.8 335.7" stroke-width="1.6" stroke-opacity="0.22"/><path d="M1156.4 359.9L1171.2 337.1" stroke-width="1.6" stroke-opacity="0.37"/><path d="M1157.2 366.7L1176.5 337.0" stroke-width="1.2" stroke-opacity="0.60"/><path d="M1172.4 355.5L1187.5 332.3" stroke-width="0.9" stroke-opacity="0.69"/><path d="M1181.0 355.2L1188.2 344.0" stroke-width="1.6" stroke-opacity="0.19"/><path d="M1178.1 365.3L1194.1 340.8" stroke-width="2.2" stroke-opacity="0.40"/><path d="M1190.4 363.3L1205.5 340.1" stroke-width="0.7" stroke-opacity="0.44"/><path d="M1202.6 362.4L1218.8 337.4" stroke-width="0.9" stroke-opacity="0.69"/><path d="M1208.5 360.6L1224.5 336.0" stroke-width="0.9" stroke-opacity="0.68"/><path d="M1218.7 359.2L1231.7 339.2" stroke-width="1.2" stroke-opacity="0.51"/><path d="M1235.1 352.9L1243.9 339.4" stroke-width="1.6" stroke-opacity="0.41"/><path d="M1239.0 361.3L1256.9 333.6" stroke-width="0.9" stroke-opacity="0.54"/><path d="M1251.2 358.5L1263.1 340.3" stroke-width="0.9" stroke-opacity="0.53"/><path d="M1264.0 356.3L1274.2 340.7" stroke-width="2.2" stroke-opacity="0.40"/><path d="M1270.1 359.0L1286.9 333.1" stroke-width="1.6" stroke-opacity="0.33"/><path d="M1275.5 365.3L1291.9 340.1" stroke-width="0.7" stroke-opacity="0.62"/><path d="M1281.5 364.4L1294.1 344.9" stroke-width="1.6" stroke-opacity="0.41"/><path d="M1289.8 361.8L1305.5 337.7" stroke-width="0.9" stroke-opacity="0.52"/><path d="M1293.5 363.0L1310.4 337.0" stroke-width="0.7" stroke-opacity="0.38"/><path d="M1297.0 365.5L1316.8 335.0" stroke-width="0.9" stroke-opacity="0.32"/><path d="M1307.9 360.0L1313.9 350.9" stroke-width="0.9" stroke-opacity="0.47"/><path d="M1322.3 351.5L1332.2 336.1" stroke-width="2.2" stroke-opacity="0.38"/><path d="M1322.3 365.6L1343.6 332.8" stroke-width="0.7" stroke-opacity="0.39"/><path d="M1326.7 366.5L1346.6 335.9" stroke-width="0.7" stroke-opacity="0.52"/><path d="M1339.3 360.3L1356.1 334.5" stroke-width="0.7" stroke-opacity="0.34"/><path d="M1345.1 364.3L1362.7 337.2" stroke-width="2.2" stroke-opacity="0.22"/><path d="M1353.8 358.6L1365.3 340.7" stroke-width="0.9" stroke-opacity="0.55"/></g></g><path id="n13" d="M1151.7 379.7L1153.2 378.0L1156.1 374.8L1158.4 372.5L1160.4 370.1L1162.0 367.5L1164.0 367.5L1166.9 368.8L1169.2 369.4L1172.4 369.0L1174.6 368.4L1175.5 368.8L1177.6 368.8L1180.2 369.5L1182.8 368.8L1184.5 368.7L1186.6 369.3L1189.4 369.6L1191.5 368.9L1193.9 368.8L1196.5 367.9L1198.5 368.0L1202.0 368.8L1203.7 367.4L1205.0 369.1L1207.3 367.4L1210.4 367.8L1212.6 368.5L1215.3 368.8L1217.4 369.6L1219.5 369.0L1221.0 368.0L1223.1 369.4L1224.7 368.1L1227.3 369.4L1229.2 367.2L1232.3 369.2L1233.2 367.3L1236.5 368.8L1238.5 369.1L1240.7 367.5L1242.4 369.3L1245.9 367.9L1246.7 369.8L1250.5 367.3L1252.2 368.0L1254.0 368.1L1255.4 368.4L1258.1 369.0L1261.4 369.0L1263.8 368.3L1264.5 368.0L1266.5 369.2L1268.8 368.6L1272.6 367.3L1272.9 369.0L1276.2 367.2L1279.0 368.3L1281.6 367.3L1283.4 367.9L1286.2 369.0L1289.2 369.1L1291.0 368.3L1293.3 368.3L1295.7 369.0L1297.1 367.1L1298.1 367.5L1299.6 367.3L1301.1 369.5L1303.6 369.8L1307.0 369.1L1309.3 368.7L1310.7 368.0L1312.7 367.5L1316.3 367.5L1317.6 369.1L1319.8 369.1L1322.1 368.1L1324.7 370.3L1327.5 373.3L1329.1 375.8L1331.0 379.2L1332.4 383.9L1330.4 387.3L1328.4 391.4L1327.4 391.3L1326.0 392.4L1324.4 394.9L1323.2 397.2L1321.8 397.3L1318.7 398.0L1316.7 397.2L1315.1 398.6L1312.4 398.3L1309.5 398.1L1307.0 397.6L1304.9 399.6L1302.5 398.5L1300.8 398.8L1299.4 397.4L1298.5 398.5L1295.7 397.0L1293.0 397.0L1291.6 398.7L1289.5 397.2L1288.2 397.9L1286.7 397.6L1284.0 399.5L1281.0 399.4L1279.3 397.5L1277.7 399.1L1275.8 399.2L1272.7 397.5L1270.8 397.0L1268.0 397.3L1265.0 397.7L1264.0 398.8L1262.0 399.6L1259.1 397.8L1258.0 397.7L1256.4 399.0L1254.2 397.7L1252.2 398.6L1250.1 399.6L1247.5 399.2L1246.0 399.1L1243.6 398.9L1242.1 397.5L1240.8 398.1L1238.3 398.2L1236.2 399.3L1234.7 399.5L1232.6 397.5L1230.6 398.8L1228.6 398.5L1225.5 399.2L1223.8 397.4L1222.2 398.8L1221.2 396.9L1219.2 397.8L1218.3 397.5L1216.3 399.3L1214.9 397.3L1212.9 399.1L1210.1 399.6L1207.7 397.4L1204.3 396.9L1202.8 399.6L1200.2 397.8L1197.6 397.0L1195.6 397.4L1192.7 398.8L1190.7 399.6L1189.2 398.0L1187.7 399.5L1185.8 398.3L1183.3 398.9L1181.8 398.1L1179.1 398.5L1176.8 398.0L1174.2 398.8L1172.9 397.6L1170.2 399.3L1168.4 397.7L1167.1 398.9L1165.3 399.2L1163.9 397.0L1161.5 398.4L1158.9 394.3L1156.1 390.9L1154.0 387.4Z" fill="#fde5b3"/><clipPath id="c13"><use href="#n13"/></clipPath><g clip-path="url(#c13)"><g stroke="#fef8e7" fill="none"><path d="M1130.4 400.0L1151.0 368.3" stroke-width="1.6" stroke-opacity="0.30"/><path d="M1143.1 397.0L1161.8 368.3" stroke-width="1.6" stroke-opacity="0.31"/><path d="M1148.4 394.8L1163.2 372.0" stroke-width="0.9" stroke-opacity="0.43"/><path d="M1155.9 399.8L1176.4 368.2" stroke-width="0.7" stroke-opacity="0.33"/><path d="M1167.0 398.7L1181.5 376.4" stroke-width="0.9" stroke-opacity="0.65"/><path d="M1185.6 385.8L1187.6 382.7" stroke-width="1.2" stroke-opacity="0.39"/><path d="M1184.4 399.1L1204.4 368.3" stroke-width="0.7" stroke-opacity="0.42"/><path d="M1193.0 393.2L1203.8 376.5" stroke-width="0.7" stroke-opacity="0.41"/><path d="M1196.9 394.9L1213.4 369.6" stroke-width="2.2" stroke-opacity="0.42"/><path d="M1206.4 397.1L1224.0 369.9" stroke-width="0.9" stroke-opacity="0.31"/><path d="M1213.7 399.4L1233.6 368.9" stroke-width="1.6" stroke-opacity="0.22"/><path d="M1229.3 393.2L1236.6 381.9" stroke-width="0.9" stroke-opacity="0.62"/><path d="M1234.3 393.1L1240.3 383.7" stroke-width="2.2" stroke-opacity="0.43"/><path d="M1235.7 396.7L1254.6 367.7" stroke-width="0.9" stroke-opacity="0.60"/><path d="M1247.0 396.5L1256.0 382.7" stroke-width="1.2" stroke-opacity="0.33"/><path d="M1260.4 383.2L1259.5 384.6" stroke-width="0.9" stroke-opacity="0.52"/><path d="M1259.6 393.2L1277.3 366.0" stroke-width="1.2" stroke-opacity="0.31"/><path d="M1266.0 400.5L1288.0 366.7" stroke-width="0.7" stroke-opacity="0.41"/><path d="M1282.7 387.2L1292.4 372.3" stroke-width="1.2" stroke-opacity="0.42"/><path d="M1294.5 386.7L1304.2 371.7" stroke-width="2.2" stroke-opacity="0.39"/><path d="M1293.9 396.9L1313.7 366.5" stroke-width="0.9" stroke-opacity="0.68"/><path d="M1303.1 393.1L1317.0 371.9" stroke-width="0.7" stroke-opacity="0.53"/><path d="M1321.1 383.2L1330.3 369.0" stroke-width="0.9" stroke-opacity="0.67"/><path d="M1321.3 389.0L1331.9 372.6" stroke-width="2.2" stroke-opacity="0.31"/><path d="M1321.1 400.5L1338.5 373.6" stroke-width="1.2" stroke-opacity="0.55"/><path d="M1337.0 381.8L1337.5 380.9" stroke-width="0.9" stroke-opacity="0.68"/></g></g><path id="n14" d="M1152.3 414.9L1154.5 411.7L1157.0 407.6L1158.4 406.2L1160.0 403.7L1162.7 403.4L1163.7 402.0L1166.0 402.3L1167.9 402.1L1169.5 402.1L1171.1 401.5L1174.1 402.4L1175.6 402.5L1177.8 402.0L1180.5 401.4L1181.6 401.9L1184.7 401.4L1186.0 401.2L1187.7 400.8L1189.6 401.4L1191.6 402.6L1193.9 402.4L1195.3 402.5L1197.3 401.5L1199.8 402.5L1201.7 401.3L1204.9 403.0L1206.9 402.5L1209.6 403.0L1211.2 400.9L1212.3 402.0L1214.5 403.5L1216.7 403.5L1218.2 402.4L1220.8 401.9L1223.1 402.6L1224.3 401.8L1226.3 401.7L1229.0 401.5L1230.9 401.9L1231.7 402.0L1234.0 402.2L1235.7 403.2L1238.3 403.5L1241.1 401.3L1243.5 402.7L1246.4 402.9L1247.8 401.7L1249.9 402.6L1252.9 403.2L1255.5 402.4L1257.0 402.3L1258.3 403.5L1259.2 402.3L1261.6 401.2L1264.3 401.2L1266.6 403.3L1269.6 401.7L1272.2 402.8L1273.4 402.7L1276.2 403.5L1277.9 401.6L1279.6 403.3L1281.9 401.0L1284.8 401.1L1286.6 401.1L1288.8 402.7L1291.6 402.8L1294.8 403.3L1296.8 401.4L1299.8 403.1L1301.6 402.6L1304.2 402.1L1306.2 402.4L1307.6 402.8L1310.2 402.7L1313.3 403.4L1315.3 403.3L1317.3 403.4L1320.8 403.4L1322.9 401.7L1325.0 402.2L1327.0 402.4L1328.8 402.4L1330.7 402.3L1333.7 403.1L1336.0 402.4L1337.8 403.5L1339.7 403.3L1341.7 403.1L1344.0 403.5L1344.7 403.1L1347.7 401.2L1350.0 402.5L1351.2 401.5L1354.4 402.7L1355.8 403.3L1358.8 403.5L1359.9 403.0L1362.3 401.3L1364.1 403.4L1366.3 402.3L1367.7 401.6L1370.9 402.9L1373.2 401.5L1374.5 402.5L1375.9 401.6L1377.9 401.9L1380.7 401.0L1383.3 402.0L1384.5 402.4L1387.0 401.2L1390.0 403.2L1392.3 401.9L1395.0 401.8L1396.5 403.1L1399.0 401.3L1400.5 400.9L1402.3 402.8L1405.2 402.4L1408.0 403.2L1409.7 401.6L1411.7 403.2L1414.4 403.0L1416.3 401.7L1417.9 403.1L1420.2 403.5L1422.0 402.1L1423.3 401.3L1426.0 402.6L1428.3 401.6L1429.3 402.2L1430.7 401.6L1433.3 402.0L1436.4 404.6L1437.9 403.6L1441.0 407.6L1442.8 410.8L1445.2 416.4L1444.2 420.5L1441.3 424.5L1439.8 427.8L1436.8 430.8L1434.2 432.5L1432.1 431.2L1429.4 432.7L1427.9 431.7L1427.0 431.9L1425.4 432.1L1423.6 432.2L1420.5 431.1L1419.4 432.6L1418.0 430.6L1415.8 430.6L1413.9 432.7L1411.9 431.1L1408.4 432.6L1406.9 430.8L1405.1 432.8L1402.8 431.9L1399.6 430.7L1398.0 432.7L1396.7 431.8L1394.7 431.0L1392.7 430.7L1390.2 431.8L1389.5 431.0L1387.8 430.6L1385.3 432.1L1382.4 431.8L1380.5 433.3L1378.7 433.1L1377.4 433.2L1374.7 430.8L1373.6 433.1L1371.8 431.4L1369.9 432.1L1367.7 433.1L1364.8 431.4L1363.2 430.6L1360.3 431.0L1359.0 431.9L1355.4 432.5L1353.5 431.6L1350.7 431.2L1349.6 431.3L1348.5 433.0L1347.0 432.7L1343.5 431.5L1341.3 433.3L1339.3 433.3L1337.2 431.4L1334.0 432.6L1331.8 433.0L1329.7 431.2L1328.7 432.3L1326.8 431.0L1325.7 430.7L1323.3 432.6L1321.9 431.1L1320.3 430.9L1318.1 432.0L1314.5 431.2L1312.9 432.3L1310.1 432.5L1308.2 431.2L1305.7 431.4L1304.1 431.2L1303.2 432.7L1300.7 432.6L1299.2 432.8L1297.2 430.9L1294.9 432.8L1293.1 431.1L1291.8 432.9L1288.7 432.2L1287.0 432.0L1284.7 432.2L1282.8 432.3L1279.8 430.9L1277.8 432.7L1276.2 431.8L1273.3 432.7L1271.3 431.4L1270.1 432.8L1268.6 433.3L1266.5 432.6L1263.3 431.5L1262.2 433.0L1260.4 431.0L1258.7 432.9L1257.1 431.1L1255.5 431.3L1253.5 431.3L1251.7 431.4L1248.0 433.1L1245.3 431.0L1242.6 431.4L1240.0 432.6L1238.4 431.0L1235.9 432.5L1232.7 431.8L1230.7 432.0L1228.4 431.5L1226.4 430.7L1224.4 431.6L1221.7 432.2L1218.7 432.7L1215.8 430.8L1213.1 431.8L1211.5 430.7L1208.8 431.9L1206.7 431.9L1204.0 431.1L1201.9 431.5L1199.8 432.2L1198.5 430.8L1195.3 432.6L1192.9 432.1L1191.5 430.8L1190.2 431.0L1187.4 432.6L1185.2 433.3L1184.2 433.2L1181.2 431.8L1179.2 432.2L1176.2 432.6L1174.2 431.9L1171.2 431.3L1167.7 432.7L1166.2 431.2L1162.9 431.5L1161.6 431.8L1159.0 429.5L1156.2 424.9L1153.9 421.8L1151.9 420.6Z" fill="#fde5b3"/><clipPath id="c14"><use href="#n14"/></clipPath><g clip-path="url(#c14)"><g stroke="#fef8e7" fill="none"><path d="M1141.7 421.4L1152.4 405.1" stroke-width="0.9" stroke-opacity="0.59"/><path d="M1147.7 426.9L1164.4 401.2" stroke-width="0.9" stroke-opacity="0.33"/><path d="M1157.1 419.1L1160.7 413.7" stroke-width="1.6" stroke-opacity="0.29"/><path d="M1159.4 431.0L1167.6 418.3" stroke-width="1.6" stroke-opacity="0.24"/><path d="M1170.9 427.8L1180.4 413.1" stroke-width="0.9" stroke-opacity="0.58"/><path d="M1171.0 433.4L1181.6 417.1" stroke-width="0.9" stroke-opacity="0.65"/><path d="M1178.4 428.1L1195.8 401.4" stroke-width="2.2" stroke-opacity="0.28"/><path d="M1187.6 428.0L1200.9 407.6" stroke-width="0.7" stroke-opacity="0.62"/><path d="M1195.9 432.0L1213.2 405.3" stroke-width="1.6" stroke-opacity="0.43"/><path d="M1211.1 415.7L1214.2 410.9" stroke-width="1.2" stroke-opacity="0.54"/><path d="M1208.2 432.0L1228.3 401.1" stroke-width="1.2" stroke-opacity="0.42"/><path d="M1222.4 428.4L1238.8 403.1" stroke-width="1.2" stroke-opacity="0.42"/><path d="M1237.3 422.5L1243.9 412.3" stroke-width="2.2" stroke-opacity="0.33"/><path d="M1237.2 428.3L1250.4 408.0" stroke-width="1.2" stroke-opacity="0.45"/><path d="M1247.6 429.3L1266.8 399.7" stroke-width="0.9" stroke-opacity="0.65"/><path d="M1253.0 431.5L1272.4 401.6" stroke-width="0.7" stroke-opacity="0.58"/><path d="M1263.1 427.5L1280.5 400.7" stroke-width="1.2" stroke-opacity="0.64"/><path d="M1269.1 432.5L1289.8 400.5" stroke-width="0.9" stroke-opacity="0.31"/><path d="M1284.9 418.1L1294.2 403.8" stroke-width="1.6" stroke-opacity="0.32"/><path d="M1287.2 427.6L1304.5 401.0" stroke-width="2.2" stroke-opacity="0.42"/><path d="M1301.7 423.5L1310.0 410.6" stroke-width="0.9" stroke-opacity="0.59"/><path d="M1312.0 426.2L1326.0 404.7" stroke-width="1.2" stroke-opacity="0.68"/><path d="M1322.4 427.1L1339.4 401.0" stroke-width="0.7" stroke-opacity="0.65"/><path d="M1329.9 428.5L1346.1 403.4" stroke-width="0.9" stroke-opacity="0.61"/><path d="M1342.3 426.7L1357.8 403.0" stroke-width="2.2" stroke-opacity="0.36"/><path d="M1350.1 426.7L1367.1 400.5" stroke-width="2.2" stroke-opacity="0.35"/><path d="M1357.4 434.3L1372.5 411.0" stroke-width="0.9" stroke-opacity="0.57"/><path d="M1373.2 426.8L1388.1 403.8" stroke-width="0.9" stroke-opacity="0.32"/><path d="M1383.1 429.6L1398.5 405.9" stroke-width="1.2" stroke-opacity="0.41"/><path d="M1392.9 432.5L1412.9 401.7" stroke-width="1.6" stroke-opacity="0.38"/><path d="M1399.5 431.9L1418.1 403.2" stroke-width="0.7" stroke-opacity="0.69"/><path d="M1407.7 434.2L1425.4 406.9" stroke-width="0.9" stroke-opacity="0.62"/><path d="M1423.5 422.4L1434.6 405.3" stroke-width="0.7" stroke-opacity="0.48"/><path d="M1433.9 422.3L1437.7 416.4" stroke-width="0.9" stroke-opacity="0.46"/><path d="M1436.8 426.7L1446.3 412.2" stroke-width="0.9" stroke-opacity="0.40"/><path d="M1442.7 426.9L1460.0 400.2" stroke-width="0.9" stroke-opacity="0.58"/></g></g><path id="n15" d="M718.6 497.5L720.4 495.1L723.4 492.7L724.5 489.3L726.6 487.9L728.6 486.0L730.0 487.1L731.9 487.4L733.7 485.3L735.9 486.1L738.6 486.8L739.4 485.5L741.3 487.1L743.7 486.0L746.1 487.7L747.4 485.2L750.7 485.4L753.5 485.1L755.9 487.3L758.4 485.9L760.4 487.6L763.0 485.8L763.6 487.3L765.6 486.1L767.4 487.3L768.6 485.6L771.5 485.4L773.4 486.1L776.2 486.3L778.4 486.8L780.8 487.5L782.1 486.9L783.4 486.8L785.4 485.5L787.8 486.5L789.9 486.0L792.0 486.2L793.1 485.0L795.9 487.4L797.1 486.8L799.9 486.4L803.1 487.2L804.7 487.4L805.7 487.0L807.8 487.4L809.9 486.1L812.7 487.1L814.8 485.6L816.8 487.3L818.1 486.2L819.9 486.0L822.6 487.0L825.4 486.0L827.7 486.9L829.8 485.9L832.7 487.6L833.9 485.6L835.1 486.7L837.6 485.6L839.2 486.4L841.4 486.9L843.5 487.2L846.4 485.6L849.0 486.7L850.8 486.7L854.2 487.1L855.8 485.4L857.9 486.4L860.5 487.2L862.3 487.0L864.1 487.3L866.0 487.5L868.7 488.4L869.9 490.0L873.3 492.6L875.9 496.3L877.5 500.0L876.9 506.1L875.9 507.0L873.6 508.3L870.9 511.4L868.4 514.2L865.6 514.3L864.5 515.5L863.4 514.6L861.0 515.7L859.0 516.4L857.3 517.0L855.2 514.5L852.8 516.6L851.4 514.4L850.3 515.8L848.3 515.9L845.5 515.9L842.9 514.2L842.0 515.6L840.8 516.9L838.0 514.4L835.6 514.5L833.6 514.9L831.9 515.7L829.6 514.5L827.0 515.5L825.0 515.3L823.7 515.1L821.5 515.9L819.0 516.9L816.2 516.2L814.9 514.4L812.3 515.3L810.6 516.5L807.8 516.7L806.2 514.6L804.4 514.2L801.9 515.6L799.8 516.0L797.8 514.8L795.8 514.7L792.8 514.7L790.4 514.6L789.4 515.2L787.5 515.5L784.9 516.9L782.7 514.2L780.7 515.2L778.8 514.7L776.3 515.5L774.2 515.7L771.6 514.6L769.7 515.3L767.9 516.2L765.8 516.0L762.8 515.3L760.8 515.7L757.9 514.4L756.9 516.5L754.9 515.2L752.8 515.8L749.5 516.0L747.4 515.3L745.3 515.8L743.8 515.0L742.1 515.5L740.6 514.3L738.1 517.0L736.2 515.0L734.2 516.6L731.8 516.6L729.9 516.5L728.8 516.2L727.2 513.2L725.0 512.9L723.6 508.6L720.2 506.4Z" fill="#fde5b3"/><clipPath id="c15"><use href="#n15"/></clipPath><g clip-path="url(#c15)"><g stroke="#fef8e7" fill="none"><path d="M707.1 504.9L717.9 488.3" stroke-width="0.7" stroke-opacity="0.61"/><path d="M706.6 514.0L718.5 495.7" stroke-width="0.7" stroke-opacity="0.37"/><path d="M712.4 515.3L731.8 485.6" stroke-width="0.9" stroke-opacity="0.37"/><path d="M730.3 503.5L738.2 491.4" stroke-width="0.7" stroke-opacity="0.54"/><path d="M729.3 514.2L745.1 489.8" stroke-width="1.2" stroke-opacity="0.45"/><path d="M740.6 515.6L760.5 484.9" stroke-width="0.9" stroke-opacity="0.40"/><path d="M754.2 507.0L764.1 491.7" stroke-width="1.6" stroke-opacity="0.42"/><path d="M764.8 507.1L775.3 490.9" stroke-width="0.9" stroke-opacity="0.30"/><path d="M768.4 516.5L786.6 488.5" stroke-width="0.7" stroke-opacity="0.33"/><path d="M780.2 511.5L797.2 485.4" stroke-width="0.7" stroke-opacity="0.38"/><path d="M792.3 501.8L801.6 487.6" stroke-width="2.2" stroke-opacity="0.22"/><path d="M790.0 514.7L806.3 489.5" stroke-width="2.2" stroke-opacity="0.26"/><path d="M797.2 516.5L815.0 489.1" stroke-width="0.9" stroke-opacity="0.51"/><path d="M812.1 510.1L828.9 484.2" stroke-width="2.2" stroke-opacity="0.21"/><path d="M825.9 504.2L827.2 502.3" stroke-width="2.2" stroke-opacity="0.29"/><path d="M825.5 514.9L838.9 494.2" stroke-width="1.2" stroke-opacity="0.50"/><path d="M838.8 501.2L846.0 490.1" stroke-width="0.7" stroke-opacity="0.54"/><path d="M844.6 509.9L857.9 489.4" stroke-width="0.7" stroke-opacity="0.38"/><path d="M849.5 512.4L864.1 489.8" stroke-width="1.2" stroke-opacity="0.69"/><path d="M855.5 515.1L865.1 500.4" stroke-width="0.9" stroke-opacity="0.68"/><path d="M869.5 511.5L883.0 490.6" stroke-width="0.9" stroke-opacity="0.63"/><path d="M886.7 501.8L891.0 495.3" stroke-width="0.9" stroke-opacity="0.60"/></g></g><path id="n16" d="M939.7 499.0L941.6 494.6L943.2 493.3L945.4 492.4L947.2 488.6L948.3 486.8L949.7 485.7L952.5 487.2L954.0 487.5L956.6 485.4L958.6 486.5L961.7 486.6L963.8 485.6L965.3 485.6L967.5 486.6L969.6 487.2L971.2 486.2L973.5 485.8L975.2 485.6L976.3 487.3L978.9 485.5L981.0 486.8L982.9 485.6L985.1 487.7L986.4 486.4L988.7 487.4L989.9 486.2L991.7 487.7L993.8 486.2L994.4 485.9L996.4 485.7L999.5 485.8L1001.3 487.1L1002.5 487.4L1006.1 485.7L1007.3 486.2L1009.1 485.7L1010.8 487.0L1013.1 485.3L1014.5 485.2L1016.3 487.2L1017.5 486.4L1020.7 486.3L1023.2 486.4L1025.7 486.1L1026.6 486.1L1029.5 486.0L1031.9 485.1L1033.2 487.2L1035.8 486.6L1038.7 485.8L1040.7 485.8L1042.8 487.3L1045.0 486.8L1046.5 485.9L1049.7 486.1L1051.5 485.9L1054.0 487.2L1055.0 485.5L1056.8 486.5L1059.0 485.4L1060.0 486.6L1062.4 486.0L1063.8 485.0L1066.1 487.3L1067.3 487.6L1069.9 487.4L1072.9 486.6L1075.0 490.6L1078.3 494.2L1079.7 494.6L1081.7 500.9L1080.6 504.3L1079.0 508.5L1075.7 511.1L1073.4 512.6L1070.4 516.6L1068.5 514.7L1066.0 514.8L1063.7 516.9L1061.0 516.2L1058.7 516.8L1056.9 515.4L1054.3 514.4L1052.3 514.8L1049.4 516.2L1048.3 515.9L1045.9 514.7L1043.0 516.7L1042.1 517.0L1040.3 516.7L1038.7 515.2L1037.6 516.3L1034.4 515.3L1031.5 516.9L1030.0 515.4L1026.9 515.4L1025.4 515.7L1023.2 516.2L1020.5 516.6L1018.9 516.4L1017.1 514.7L1015.8 516.4L1013.9 515.8L1011.8 515.5L1010.4 516.3L1008.2 515.1L1007.2 515.5L1004.1 515.2L1002.8 514.9L1001.0 516.5L999.7 515.5L996.5 514.2L994.3 515.0L992.4 515.4L990.1 515.4L988.7 514.8L986.7 515.4L984.2 517.0L982.9 516.3L980.6 515.3L979.6 516.9L977.0 514.4L974.8 514.2L973.8 516.9L972.4 515.9L969.6 515.9L967.7 516.7L966.0 515.5L964.6 514.6L963.2 515.0L960.8 515.6L959.2 516.7L957.2 515.8L955.3 516.1L953.2 515.2L951.0 516.6L950.0 514.8L948.4 513.2L945.0 510.7L944.3 511.2L942.5 507.2L940.0 504.6Z" fill="#fde5b3"/><clipPath id="c16"><use href="#n16"/></clipPath><g clip-path="url(#c16)"><g stroke="#fef8e7" fill="none"><path d="M921.4 514.1L930.6 500.1" stroke-width="0.9" stroke-opacity="0.57"/><path d="M939.0 505.1L949.9 488.4" stroke-width="0.9" stroke-opacity="0.60"/><path d="M938.8 511.0L951.7 491.1" stroke-width="0.9" stroke-opacity="0.60"/><path d="M945.0 517.4L963.3 489.2" stroke-width="0.9" stroke-opacity="0.60"/><path d="M953.3 517.3L969.9 491.6" stroke-width="1.6" stroke-opacity="0.28"/><path d="M967.1 511.4L977.3 495.8" stroke-width="1.6" stroke-opacity="0.35"/><path d="M975.2 516.7L994.1 487.7" stroke-width="2.2" stroke-opacity="0.35"/><path d="M987.5 512.1L1005.0 485.2" stroke-width="0.9" stroke-opacity="0.46"/><path d="M996.7 504.5L1005.9 490.3" stroke-width="2.2" stroke-opacity="0.32"/><path d="M1004.2 500.8L1014.4 485.1" stroke-width="0.7" stroke-opacity="0.35"/><path d="M1014.1 504.8L1022.9 491.2" stroke-width="0.9" stroke-opacity="0.31"/><path d="M1016.3 514.7L1036.1 484.1" stroke-width="1.2" stroke-opacity="0.50"/><path d="M1027.1 512.2L1040.6 491.5" stroke-width="0.9" stroke-opacity="0.31"/><path d="M1032.0 517.0L1051.8 486.5" stroke-width="0.7" stroke-opacity="0.30"/><path d="M1041.9 514.5L1058.1 489.6" stroke-width="0.9" stroke-opacity="0.47"/><path d="M1047.1 515.5L1065.2 487.7" stroke-width="1.2" stroke-opacity="0.46"/><path d="M1067.3 502.7L1078.7 485.2" stroke-width="0.9" stroke-opacity="0.57"/><path d="M1074.9 507.5L1084.8 492.2" stroke-width="1.2" stroke-opacity="0.32"/><path d="M1083.2 511.7L1096.3 491.4" stroke-width="0.9" stroke-opacity="0.45"/></g></g><path id="n17" d="M1142.4 447.7L1144.6 444.9L1145.7 442.9L1146.6 440.0L1148.3 439.2L1150.5 438.1L1152.2 434.9L1153.0 434.4L1155.6 435.8L1159.1 435.2L1162.0 435.3L1163.2 436.1L1164.5 434.3L1167.2 435.1L1170.5 434.9L1171.3 434.9L1172.9 434.6L1175.3 435.9L1177.4 436.6L1178.8 434.5L1180.9 435.3L1182.6 435.5L1183.8 434.8L1187.2 434.7L1189.7 434.5L1191.5 436.3L1193.4 435.4L1194.3 436.8L1197.2 434.4L1199.2 436.7L1201.9 435.3L1203.7 435.7L1206.0 434.6L1207.9 434.3L1210.4 435.3L1211.1 436.1L1213.2 436.6L1216.2 435.6L1218.6 435.5L1221.5 435.4L1224.2 434.3L1225.7 436.6L1228.2 435.1L1229.5 435.8L1231.0 436.4L1232.6 435.8L1235.8 436.8L1238.1 434.5L1240.7 434.7L1242.3 434.2L1244.9 435.0L1246.6 435.6L1248.9 434.9L1250.3 436.7L1252.4 436.9L1253.9 436.2L1255.5 434.8L1257.5 436.6L1259.3 435.3L1261.6 435.2L1263.4 436.9L1265.0 435.5L1268.1 434.9L1269.4 435.6L1271.2 436.2L1272.9 436.7L1275.2 435.5L1278.2 436.8L1280.2 434.3L1281.4 434.2L1282.6 436.5L1284.7 435.5L1287.1 434.3L1289.9 435.7L1291.3 436.6L1294.4 434.8L1297.5 435.1L1299.3 434.8L1301.3 436.4L1302.3 435.4L1303.8 435.2L1306.8 434.8L1309.0 436.0L1311.7 435.1L1312.7 436.0L1315.0 434.6L1317.4 436.4L1320.1 435.2L1322.7 434.3L1324.4 434.5L1327.5 435.8L1330.4 435.1L1332.3 435.9L1335.3 434.6L1336.5 436.7L1338.1 436.4L1340.7 436.2L1342.6 435.0L1344.8 437.6L1347.1 439.2L1349.2 441.9L1351.8 445.3L1352.9 447.3L1353.7 451.3L1352.9 454.5L1350.6 458.9L1348.1 461.6L1346.8 462.8L1344.7 464.8L1341.9 465.1L1340.2 466.2L1338.2 465.2L1336.9 465.1L1335.7 464.4L1333.7 464.9L1331.4 466.3L1329.0 465.9L1327.4 465.9L1324.9 464.9L1322.7 465.2L1320.9 464.4L1318.8 464.2L1317.0 464.7L1314.7 464.5L1314.1 465.7L1312.2 466.0L1310.5 465.2L1307.6 465.6L1306.5 465.7L1304.1 465.3L1303.0 465.6L1300.7 465.2L1299.6 466.6L1296.1 466.4L1293.5 466.2L1290.4 464.3L1289.1 464.2L1287.4 466.3L1285.4 465.1L1282.2 466.4L1281.3 466.4L1279.9 465.5L1277.3 465.2L1274.4 466.7L1271.9 466.2L1269.8 465.8L1267.3 466.6L1264.6 466.5L1263.2 464.6L1261.9 466.5L1259.5 465.5L1258.3 465.3L1257.7 464.0L1254.2 466.5L1253.0 464.1L1250.4 466.3L1247.7 465.6L1245.9 465.1L1244.6 465.5L1243.0 466.4L1242.4 464.8L1239.6 465.4L1238.1 465.9L1237.2 465.5L1234.4 464.0L1232.7 466.6L1230.3 466.5L1229.2 465.5L1227.9 464.5L1224.6 465.7L1223.4 465.7L1220.9 466.3L1218.7 465.5L1215.4 464.7L1214.9 464.0L1212.0 464.8L1209.4 464.3L1207.0 464.3L1204.3 464.8L1203.3 464.4L1200.3 466.4L1197.8 464.9L1195.7 464.4L1194.0 464.1L1190.8 464.4L1188.8 466.2L1186.7 464.3L1185.1 466.7L1183.3 466.1L1181.2 466.5L1179.1 464.7L1177.9 465.6L1175.3 466.6L1173.1 465.7L1171.4 464.4L1168.7 465.7L1167.3 465.8L1165.4 466.0L1164.5 465.4L1163.3 465.0L1160.1 466.1L1156.8 465.0L1154.4 464.2L1153.3 465.9L1151.7 463.7L1150.0 462.9L1147.6 461.6L1145.4 458.8L1142.6 454.6Z" fill="#fde5b3"/><clipPath id="c17"><use href="#n17"/></clipPath><g clip-path="url(#c17)"><g stroke="#fef8e7" fill="none"><path d="M1125.1 459.8L1137.6 440.6" stroke-width="0.9" stroke-opacity="0.63"/><path d="M1131.7 459.9L1144.8 439.8" stroke-width="1.6" stroke-opacity="0.37"/><path d="M1137.7 463.0L1147.6 447.8" stroke-width="0.7" stroke-opacity="0.57"/><path d="M1144.5 467.8L1163.8 438.2" stroke-width="0.9" stroke-opacity="0.49"/><path d="M1156.8 467.0L1175.6 438.1" stroke-width="0.9" stroke-opacity="0.54"/><path d="M1164.5 465.0L1173.7 450.9" stroke-width="0.9" stroke-opacity="0.48"/><path d="M1171.4 466.4L1188.8 439.6" stroke-width="1.2" stroke-opacity="0.31"/><path d="M1189.4 456.4L1203.9 434.2" stroke-width="1.6" stroke-opacity="0.26"/><path d="M1198.0 461.8L1209.2 444.5" stroke-width="1.2" stroke-opacity="0.31"/><path d="M1210.0 454.3L1220.6 437.9" stroke-width="0.7" stroke-opacity="0.35"/><path d="M1215.1 460.0L1229.5 437.8" stroke-width="0.7" stroke-opacity="0.67"/><path d="M1222.1 465.0L1242.8 433.1" stroke-width="0.9" stroke-opacity="0.66"/><path d="M1232.6 456.3L1240.6 444.0" stroke-width="0.9" stroke-opacity="0.58"/><path d="M1240.3 463.3L1258.1 435.8" stroke-width="0.9" stroke-opacity="0.33"/><path d="M1252.7 461.0L1268.5 436.6" stroke-width="0.9" stroke-opacity="0.60"/><path d="M1265.6 456.4L1278.1 437.1" stroke-width="2.2" stroke-opacity="0.22"/><path d="M1263.9 467.2L1281.1 440.7" stroke-width="0.9" stroke-opacity="0.41"/><path d="M1281.1 454.7L1292.2 437.7" stroke-width="2.2" stroke-opacity="0.33"/><path d="M1284.7 463.8L1300.6 439.4" stroke-width="2.2" stroke-opacity="0.27"/><path d="M1295.8 461.4L1303.4 449.7" stroke-width="1.2" stroke-opacity="0.64"/><path d="M1297.2 465.5L1318.2 433.2" stroke-width="1.6" stroke-opacity="0.37"/><path d="M1304.4 464.7L1316.6 446.0" stroke-width="0.9" stroke-opacity="0.38"/><path d="M1314.9 465.1L1332.5 438.0" stroke-width="1.2" stroke-opacity="0.48"/><path d="M1320.1 467.5L1333.6 446.7" stroke-width="1.2" stroke-opacity="0.69"/><path d="M1333.3 459.4L1345.9 439.8" stroke-width="0.9" stroke-opacity="0.37"/><path d="M1334.7 467.1L1352.4 439.9" stroke-width="2.2" stroke-opacity="0.19"/><path d="M1341.7 463.3L1357.8 438.6" stroke-width="2.2" stroke-opacity="0.26"/><path d="M1347.8 465.7L1367.8 434.9" stroke-width="2.2" stroke-opacity="0.24"/><path d="M1356.4 461.5L1373.2 435.6" stroke-width="1.2" stroke-opacity="0.48"/></g></g><path id="n18" d="M1142.0 480.5L1144.3 478.5L1146.7 474.2L1148.5 472.4L1150.7 470.5L1151.9 471.2L1153.4 470.0L1155.9 468.8L1158.3 468.3L1160.8 470.2L1163.2 469.8L1165.6 468.8L1168.1 470.6L1171.4 468.1L1173.6 469.1L1176.0 468.1L1177.4 469.9L1180.7 470.6L1182.5 468.6L1185.5 469.2L1188.4 468.6L1189.8 469.0L1191.7 470.4L1194.3 470.6L1195.0 469.2L1198.5 469.6L1200.0 467.9L1201.5 468.3L1204.4 469.7L1206.6 469.3L1209.2 470.6L1212.2 469.3L1214.0 468.2L1215.0 470.6L1216.9 468.5L1219.3 470.5L1221.3 470.2L1223.0 468.7L1225.2 469.4L1227.7 468.5L1230.2 467.9L1231.5 470.1L1233.9 469.4L1236.2 469.6L1238.4 470.1L1241.2 468.6L1242.8 469.3L1244.3 468.5L1246.5 470.2L1248.2 468.1L1249.9 468.0L1251.5 469.0L1254.0 469.4L1257.8 470.0L1260.0 470.3L1260.9 468.5L1262.8 469.6L1264.2 469.2L1266.3 469.5L1267.7 469.1L1270.5 469.3L1272.7 470.6L1275.2 467.9L1278.5 469.9L1280.4 468.0L1281.9 469.3L1283.6 470.0L1286.8 470.3L1289.1 470.3L1291.4 468.9L1294.3 470.5L1295.8 468.5L1298.0 470.4L1298.9 470.5L1301.6 469.3L1303.9 470.4L1305.9 469.2L1307.6 469.6L1308.9 469.3L1311.5 468.6L1313.0 470.6L1314.2 470.0L1317.4 469.2L1319.4 468.3L1322.8 470.5L1325.5 469.6L1328.5 468.5L1330.1 469.3L1332.4 472.4L1335.2 475.3L1337.0 475.4L1337.6 477.9L1339.2 480.5L1340.2 484.4L1338.8 491.0L1336.8 490.3L1334.9 495.6L1332.5 497.3L1330.1 498.1L1328.6 497.7L1326.9 500.1L1325.4 499.4L1323.3 499.5L1321.6 500.2L1319.5 499.7L1316.6 500.0L1314.1 499.2L1312.0 499.9L1309.0 499.3L1307.2 498.1L1304.4 498.8L1302.9 500.2L1300.1 499.9L1298.4 499.5L1295.7 498.0L1293.8 499.0L1291.8 500.2L1289.4 499.8L1286.5 500.4L1283.4 498.8L1281.1 498.3L1278.2 500.4L1275.9 499.4L1273.5 499.5L1272.0 499.6L1270.0 497.9L1268.7 497.8L1266.3 498.8L1263.6 499.1L1262.7 500.3L1259.5 500.0L1257.2 499.8L1254.3 499.3L1253.0 499.6L1249.8 499.7L1248.9 500.3L1246.7 500.4L1244.4 498.7L1242.0 499.1L1239.3 498.7L1237.6 499.9L1235.5 499.5L1234.2 499.7L1231.6 498.9L1229.4 499.2L1227.6 499.0L1226.7 500.1L1225.6 500.4L1222.7 497.7L1220.6 500.0L1218.3 499.3L1216.6 498.0L1214.5 497.9L1212.4 498.9L1210.2 499.8L1208.6 499.9L1205.5 498.4L1203.0 498.3L1200.8 499.3L1198.7 499.1L1196.9 499.5L1196.2 498.8L1193.1 499.3L1190.5 499.6L1188.8 500.4L1185.5 499.4L1184.2 498.3L1181.2 499.9L1179.5 499.9L1177.4 499.9L1174.9 499.8L1173.7 499.1L1172.2 498.1L1169.9 499.4L1168.4 499.1L1167.0 498.9L1164.7 498.8L1163.3 500.1L1161.8 500.4L1159.6 500.3L1156.5 499.8L1154.4 498.2L1152.2 499.0L1149.8 495.9L1147.6 494.9L1145.0 491.7L1143.2 490.3Z" fill="#fde5b3"/><clipPath id="c18"><use href="#n18"/></clipPath><g clip-path="url(#c18)"><g stroke="#fef8e7" fill="none"><path d="M1122.6 498.1L1137.8 474.7" stroke-width="0.7" stroke-opacity="0.34"/><path d="M1126.6 499.9L1139.6 479.8" stroke-width="0.9" stroke-opacity="0.64"/><path d="M1136.1 495.9L1144.7 482.5" stroke-width="0.9" stroke-opacity="0.60"/><path d="M1138.6 499.2L1159.3 467.3" stroke-width="0.7" stroke-opacity="0.43"/><path d="M1151.0 493.6L1167.3 468.4" stroke-width="1.2" stroke-opacity="0.42"/><path d="M1152.1 500.9L1174.2 466.8" stroke-width="0.7" stroke-opacity="0.50"/><path d="M1157.6 498.2L1169.5 479.9" stroke-width="1.6" stroke-opacity="0.25"/><path d="M1164.5 494.0L1182.2 466.8" stroke-width="0.9" stroke-opacity="0.47"/><path d="M1172.5 497.4L1183.6 480.3" stroke-width="2.2" stroke-opacity="0.30"/><path d="M1182.2 501.4L1192.8 485.0" stroke-width="2.2" stroke-opacity="0.42"/><path d="M1205.3 484.1L1215.3 468.7" stroke-width="2.2" stroke-opacity="0.37"/><path d="M1211.2 493.1L1224.4 472.9" stroke-width="0.9" stroke-opacity="0.48"/><path d="M1211.1 501.4L1224.9 480.2" stroke-width="0.9" stroke-opacity="0.35"/><path d="M1216.3 499.4L1237.0 467.6" stroke-width="1.2" stroke-opacity="0.34"/><path d="M1223.1 497.1L1234.6 479.3" stroke-width="0.9" stroke-opacity="0.31"/><path d="M1232.0 488.7L1242.9 472.0" stroke-width="1.6" stroke-opacity="0.33"/><path d="M1234.2 498.3L1250.0 473.9" stroke-width="0.7" stroke-opacity="0.50"/><path d="M1238.2 500.8L1258.5 469.5" stroke-width="0.7" stroke-opacity="0.40"/><path d="M1247.2 494.8L1262.4 471.4" stroke-width="0.9" stroke-opacity="0.55"/><path d="M1259.6 482.4L1267.8 469.9" stroke-width="0.9" stroke-opacity="0.63"/><path d="M1267.2 485.4L1275.0 473.3" stroke-width="1.2" stroke-opacity="0.40"/><path d="M1271.7 494.7L1284.9 474.4" stroke-width="0.7" stroke-opacity="0.57"/><path d="M1275.3 498.1L1293.0 470.8" stroke-width="2.2" stroke-opacity="0.33"/><path d="M1288.9 493.3L1303.0 471.5" stroke-width="1.2" stroke-opacity="0.52"/><path d="M1300.7 489.5L1314.2 468.8" stroke-width="0.9" stroke-opacity="0.69"/><path d="M1301.7 497.2L1320.6 468.1" stroke-width="0.9" stroke-opacity="0.35"/><path d="M1312.4 494.9L1323.9 477.2" stroke-width="2.2" stroke-opacity="0.42"/><path d="M1322.6 494.2L1331.3 480.8" stroke-width="0.9" stroke-opacity="0.46"/><path d="M1334.5 493.3L1350.3 468.8" stroke-width="1.6" stroke-opacity="0.40"/><path d="M1349.9 482.7L1358.9 468.8" stroke-width="1.2" stroke-opacity="0.56"/></g></g><path id="n19" d="M1142.0 514.4L1143.3 512.4L1146.5 508.8L1148.9 506.0L1151.4 504.6L1153.6 504.2L1156.2 502.4L1157.8 501.6L1158.9 504.0L1162.0 503.8L1163.5 504.0L1163.8 503.5L1165.4 503.1L1167.9 503.6L1169.1 503.9L1171.3 501.8L1173.5 502.7L1175.8 503.5L1178.3 501.7L1179.5 502.1L1181.7 501.8L1183.8 501.6L1185.2 503.4L1187.5 503.3L1190.2 502.4L1191.4 503.9L1194.7 503.4L1196.4 503.7L1199.8 503.8L1201.2 502.5L1203.8 504.1L1205.9 504.2L1208.5 503.4L1209.8 504.3L1212.6 501.8L1213.6 503.3L1215.3 503.0L1218.3 501.9L1220.2 503.5L1223.0 503.2L1225.1 503.0L1226.7 503.3L1229.8 503.1L1230.9 502.4L1232.2 502.0L1234.9 501.8L1236.2 503.0L1238.2 504.3L1241.6 502.0L1243.6 502.0L1245.3 502.1L1248.2 502.8L1250.5 503.9L1252.4 503.4L1254.0 503.8L1255.8 504.3L1257.1 503.2L1259.9 502.5L1262.3 504.3L1265.1 503.8L1266.6 503.0L1268.6 504.0L1269.8 503.5L1272.9 503.8L1276.1 503.0L1276.9 504.2L1279.6 502.3L1280.8 502.1L1282.7 503.4L1284.8 502.4L1287.5 501.9L1288.6 502.0L1289.5 504.0L1292.3 502.9L1294.7 503.9L1295.9 502.2L1298.5 504.2L1300.3 503.8L1303.8 504.2L1305.0 502.7L1306.5 502.5L1310.2 503.3L1311.5 503.9L1313.3 501.6L1315.0 503.3L1316.5 502.5L1318.0 503.2L1319.9 503.1L1321.7 502.7L1324.9 501.7L1326.3 502.1L1328.4 501.9L1331.2 502.3L1332.5 503.0L1334.7 502.6L1336.8 503.3L1339.5 502.5L1341.1 502.1L1343.2 503.1L1345.3 502.7L1347.2 501.7L1350.3 504.0L1352.8 503.8L1356.1 503.1L1359.0 504.0L1362.0 502.5L1364.0 503.4L1367.0 503.2L1369.0 503.0L1371.1 503.8L1372.2 503.3L1374.7 502.2L1375.9 501.8L1378.3 504.2L1380.2 502.9L1383.3 504.2L1384.8 502.7L1385.7 502.5L1388.0 504.5L1389.0 505.9L1391.7 507.6L1394.0 509.6L1396.0 512.5L1397.9 518.3L1396.1 522.5L1394.5 526.2L1392.8 526.2L1391.6 527.8L1390.4 529.8L1387.6 532.3L1384.8 532.7L1382.2 534.1L1381.2 531.4L1378.2 532.1L1376.8 534.0L1374.0 532.0L1371.9 532.5L1368.6 531.9L1366.7 532.4L1363.9 533.2L1361.7 533.0L1358.3 533.1L1355.5 533.6L1354.6 532.7L1352.8 531.7L1351.8 531.9L1349.3 532.1L1346.0 532.0L1344.0 531.9L1341.1 533.9L1340.0 531.5L1338.0 533.7L1335.5 531.9L1334.2 533.1L1331.4 533.7L1329.2 531.8L1327.2 533.4L1324.7 533.5L1322.9 534.0L1320.7 531.9L1319.5 533.4L1316.6 532.1L1315.4 533.3L1313.3 532.1L1312.7 532.0L1309.8 533.9L1308.0 531.5L1306.0 532.3L1304.4 533.3L1302.3 533.1L1301.0 532.5L1297.8 532.2L1295.1 531.5L1293.2 533.5L1291.6 533.1L1289.4 531.8L1286.1 532.1L1284.9 532.9L1283.0 533.4L1280.4 532.6L1278.7 531.4L1277.4 532.8L1275.5 531.7L1272.8 532.1L1271.0 532.2L1267.9 533.3L1266.3 532.5L1263.1 533.7L1260.8 532.7L1257.6 532.9L1256.1 533.5L1254.1 533.3L1253.4 531.4L1251.0 531.5L1248.3 531.9L1247.0 532.0L1244.4 532.0L1241.3 531.5L1239.4 533.1L1238.3 531.9L1235.5 532.0L1232.5 531.5L1231.7 532.8L1229.8 533.3L1227.5 533.6L1226.0 532.5L1223.9 532.3L1221.8 533.3L1219.6 532.5L1217.8 533.9L1215.9 532.3L1212.9 533.0L1210.2 531.4L1209.3 532.0L1206.8 533.9L1204.3 533.8L1201.5 531.9L1200.5 533.7L1198.7 533.8L1196.8 532.3L1194.9 533.0L1191.6 532.5L1190.5 534.0L1189.0 532.4L1187.1 531.8L1185.7 533.1L1184.3 533.2L1182.2 532.2L1180.4 533.9L1177.8 531.8L1176.3 532.7L1174.6 533.5L1173.7 533.6L1171.5 533.6L1168.5 532.6L1166.3 532.3L1163.2 533.4L1160.4 532.4L1156.7 533.5L1154.2 531.8L1152.0 531.1L1151.6 532.3L1148.6 528.3L1146.6 525.4L1142.9 524.1Z" fill="#fde5b3"/><clipPath id="c19"><use href="#n19"/></clipPath><g clip-path="url(#c19)"><g stroke="#fef8e7" fill="none"><path d="M1124.8 528.2L1139.8 505.2" stroke-width="0.7" stroke-opacity="0.33"/><path d="M1128.5 529.8L1142.2 508.7" stroke-width="0.9" stroke-opacity="0.32"/><path d="M1135.2 532.8L1155.4 501.7" stroke-width="1.6" stroke-opacity="0.19"/><path d="M1149.2 527.7L1165.2 503.1" stroke-width="1.2" stroke-opacity="0.69"/><path d="M1158.5 532.0L1176.8 503.8" stroke-width="0.9" stroke-opacity="0.41"/><path d="M1165.4 532.1L1181.6 507.1" stroke-width="0.7" stroke-opacity="0.38"/><path d="M1181.5 523.5L1191.4 508.2" stroke-width="1.2" stroke-opacity="0.33"/><path d="M1183.4 529.2L1198.3 506.2" stroke-width="0.9" stroke-opacity="0.60"/><path d="M1200.4 517.6L1210.6 501.9" stroke-width="0.7" stroke-opacity="0.56"/><path d="M1204.4 527.1L1221.6 500.7" stroke-width="2.2" stroke-opacity="0.33"/><path d="M1204.2 533.4L1224.7 501.8" stroke-width="0.9" stroke-opacity="0.62"/><path d="M1211.3 528.3L1226.9 504.3" stroke-width="0.7" stroke-opacity="0.54"/><path d="M1217.5 526.9L1230.5 506.8" stroke-width="0.9" stroke-opacity="0.49"/><path d="M1223.7 527.1L1233.1 512.8" stroke-width="2.2" stroke-opacity="0.36"/><path d="M1236.3 518.5L1248.0 500.5" stroke-width="0.7" stroke-opacity="0.44"/><path d="M1236.0 528.0L1251.7 503.7" stroke-width="0.9" stroke-opacity="0.43"/><path d="M1243.8 527.1L1256.5 507.6" stroke-width="0.9" stroke-opacity="0.49"/><path d="M1254.2 529.2L1268.3 507.4" stroke-width="0.7" stroke-opacity="0.66"/><path d="M1260.0 529.5L1276.9 503.6" stroke-width="1.2" stroke-opacity="0.68"/><path d="M1266.0 531.5L1283.5 504.7" stroke-width="0.7" stroke-opacity="0.51"/><path d="M1275.8 533.7L1294.7 504.5" stroke-width="0.9" stroke-opacity="0.42"/><path d="M1290.3 530.5L1304.5 508.7" stroke-width="1.2" stroke-opacity="0.56"/><path d="M1295.1 529.1L1302.7 517.4" stroke-width="0.9" stroke-opacity="0.43"/><path d="M1304.4 530.6L1316.4 512.1" stroke-width="0.9" stroke-opacity="0.48"/><path d="M1313.7 527.3L1330.1 502.0" stroke-width="0.7" stroke-opacity="0.65"/><path d="M1319.0 527.0L1334.4 503.3" stroke-width="1.6" stroke-opacity="0.31"/><path d="M1318.4 534.3L1339.8 501.4" stroke-width="0.9" stroke-opacity="0.50"/><path d="M1330.5 534.5L1351.4 502.3" stroke-width="0.9" stroke-opacity="0.66"/><path d="M1342.6 533.4L1352.0 518.9" stroke-width="2.2" stroke-opacity="0.38"/><path d="M1356.2 531.2L1367.8 513.3" stroke-width="0.7" stroke-opacity="0.67"/><path d="M1364.2 533.7L1385.0 501.7" stroke-width="0.9" stroke-opacity="0.65"/><path d="M1373.1 528.5L1387.5 506.3" stroke-width="0.9" stroke-opacity="0.66"/><path d="M1377.4 531.1L1392.2 508.3" stroke-width="0.9" stroke-opacity="0.56"/><path d="M1389.9 530.3L1404.6 507.6" stroke-width="0.7" stroke-opacity="0.58"/><path d="M1397.5 532.8L1409.2 514.8" stroke-width="0.9" stroke-opacity="0.38"/></g></g><path id="n20" d="M1142.0 547.2L1145.0 544.0L1146.4 541.5L1148.9 540.7L1151.2 539.3L1152.9 537.1L1153.9 537.2L1156.2 535.8L1158.1 536.6L1159.1 535.4L1161.0 538.0L1163.8 536.1L1166.8 536.4L1168.2 536.8L1170.6 536.9L1172.1 535.5L1175.5 536.6L1176.7 535.9L1179.1 537.6L1182.2 536.8L1184.2 537.6L1186.0 535.9L1189.4 536.3L1190.8 537.7L1193.1 537.7L1194.3 537.9L1196.9 537.5L1198.7 536.0L1200.1 537.7L1203.3 535.5L1205.6 536.4L1208.3 536.2L1209.5 537.7L1211.8 537.8L1214.2 536.7L1216.0 537.8L1218.8 535.3L1219.5 536.6L1222.7 536.8L1223.9 535.6L1227.3 537.7L1229.9 537.3L1233.0 537.8L1235.3 537.2L1236.8 537.7L1239.9 535.5L1242.9 535.4L1244.6 538.0L1246.5 537.4L1248.6 537.2L1250.4 536.1L1251.6 535.9L1253.8 535.7L1255.5 535.7L1256.9 536.6L1259.2 537.9L1262.2 537.0L1263.7 535.5L1265.8 537.8L1268.6 536.9L1270.7 537.8L1273.5 537.4L1274.7 537.1L1277.3 536.7L1280.0 536.9L1281.0 535.4L1282.2 537.4L1283.9 535.5L1287.0 535.7L1289.0 536.2L1290.8 535.6L1292.1 537.6L1295.0 536.0L1297.2 537.2L1299.5 537.2L1301.6 537.4L1302.8 536.4L1304.8 537.5L1306.7 536.6L1309.1 537.8L1311.9 535.7L1313.9 535.8L1316.3 536.6L1318.2 536.5L1321.0 535.8L1323.3 537.4L1325.7 537.9L1328.2 536.8L1329.7 537.5L1333.0 536.9L1334.0 537.9L1336.0 535.7L1337.7 535.4L1339.4 536.2L1342.2 535.8L1344.4 537.9L1347.1 536.7L1349.1 535.7L1351.2 537.1L1353.8 536.8L1355.6 535.9L1357.2 537.0L1359.9 535.5L1362.3 536.3L1365.7 535.5L1368.6 537.3L1369.9 536.0L1371.5 537.3L1373.1 536.6L1374.5 537.9L1375.8 536.0L1378.5 536.3L1379.6 535.9L1382.3 540.0L1384.8 539.9L1386.8 541.7L1389.5 545.4L1390.1 547.8L1390.4 552.2L1389.0 556.5L1387.1 558.3L1384.4 561.8L1383.4 565.0L1382.3 564.9L1381.2 566.4L1378.4 566.8L1377.1 567.2L1375.2 566.5L1374.8 565.9L1371.3 565.7L1369.7 566.6L1368.5 566.7L1366.2 565.1L1364.7 566.3L1361.8 565.3L1359.3 565.7L1357.9 565.9L1355.9 566.6L1352.8 567.4L1350.6 567.8L1347.8 565.7L1345.3 565.5L1344.6 565.1L1342.2 565.8L1340.3 565.5L1339.4 565.6L1336.1 567.6L1334.5 566.6L1333.6 567.7L1330.3 566.5L1327.9 566.1L1327.0 567.2L1325.4 567.2L1322.6 567.1L1320.7 567.7L1318.5 567.3L1317.3 566.6L1316.2 565.1L1313.9 565.6L1311.4 565.5L1309.5 567.2L1306.6 567.2L1304.2 565.1L1302.6 567.2L1301.4 565.4L1299.2 566.5L1296.7 566.0L1294.3 566.8L1291.8 567.4L1289.4 565.7L1287.0 565.8L1284.9 567.5L1282.9 566.2L1281.3 567.8L1278.5 565.5L1276.8 565.5L1274.8 567.1L1272.9 565.3L1271.7 567.6L1270.4 565.3L1267.9 567.6L1264.8 567.8L1263.7 566.8L1261.6 566.2L1260.5 565.2L1258.6 565.7L1256.9 566.2L1254.9 567.0L1252.8 566.7L1249.9 565.3L1248.4 565.8L1246.4 565.8L1245.2 567.5L1243.6 565.1L1241.8 566.1L1239.6 565.8L1236.3 565.3L1235.0 567.1L1232.3 567.6L1231.0 566.4L1228.2 566.7L1226.1 565.4L1223.7 565.5L1221.1 566.0L1219.5 566.3L1217.0 567.7L1213.9 566.3L1211.4 567.8L1209.3 566.2L1207.2 565.5L1204.7 565.7L1201.8 566.1L1198.5 565.3L1196.4 567.5L1195.3 565.2L1192.0 565.7L1191.3 565.8L1187.9 565.4L1186.0 567.0L1182.7 567.6L1179.6 567.4L1176.9 567.8L1174.9 565.8L1173.7 566.7L1170.9 566.3L1168.7 565.8L1166.5 566.9L1163.9 566.6L1161.5 567.5L1157.9 567.4L1155.5 567.5L1151.8 565.8L1150.3 565.5L1149.4 563.0L1147.2 562.4L1145.2 559.9L1143.3 556.2Z" fill="#fde5b3"/><clipPath id="c20"><use href="#n20"/></clipPath><g clip-path="url(#c20)"><g stroke="#fef8e7" fill="none"><path d="M1131.1 556.8L1141.7 540.6" stroke-width="0.7" stroke-opacity="0.47"/><path d="M1133.9 561.7L1147.6 540.6" stroke-width="1.6" stroke-opacity="0.42"/><path d="M1143.7 563.3L1161.9 535.2" stroke-width="0.9" stroke-opacity="0.44"/><path d="M1153.9 565.8L1171.3 539.0" stroke-width="1.6" stroke-opacity="0.43"/><path d="M1161.4 561.7L1175.1 540.6" stroke-width="0.7" stroke-opacity="0.36"/><path d="M1163.1 566.3L1182.8 535.9" stroke-width="0.9" stroke-opacity="0.37"/><path d="M1176.6 560.3L1191.8 536.9" stroke-width="1.6" stroke-opacity="0.33"/><path d="M1181.3 567.9L1198.8 541.0" stroke-width="1.2" stroke-opacity="0.50"/><path d="M1197.4 558.5L1211.8 536.3" stroke-width="0.9" stroke-opacity="0.62"/><path d="M1201.8 569.0L1216.3 546.6" stroke-width="0.7" stroke-opacity="0.49"/><path d="M1207.9 566.0L1217.6 551.1" stroke-width="2.2" stroke-opacity="0.21"/><path d="M1220.3 565.1L1230.4 549.6" stroke-width="1.6" stroke-opacity="0.22"/><path d="M1232.0 564.4L1242.0 549.1" stroke-width="1.2" stroke-opacity="0.59"/><path d="M1243.6 560.6L1256.7 540.4" stroke-width="0.9" stroke-opacity="0.42"/><path d="M1246.5 566.9L1266.8 535.6" stroke-width="0.7" stroke-opacity="0.33"/><path d="M1254.6 566.0L1273.1 537.5" stroke-width="0.9" stroke-opacity="0.61"/><path d="M1264.5 565.8L1280.9 540.5" stroke-width="1.6" stroke-opacity="0.31"/><path d="M1280.3 550.0L1285.4 542.1" stroke-width="2.2" stroke-opacity="0.42"/><path d="M1282.6 564.2L1291.3 550.8" stroke-width="1.6" stroke-opacity="0.22"/><path d="M1291.9 568.3L1311.1 538.7" stroke-width="1.2" stroke-opacity="0.31"/><path d="M1299.7 563.8L1313.4 542.7" stroke-width="0.9" stroke-opacity="0.66"/><path d="M1307.1 568.4L1318.9 550.3" stroke-width="0.7" stroke-opacity="0.63"/><path d="M1317.0 564.9L1325.5 551.8" stroke-width="0.9" stroke-opacity="0.43"/><path d="M1329.2 565.1L1348.9 534.8" stroke-width="0.7" stroke-opacity="0.53"/><path d="M1338.8 560.9L1352.3 540.1" stroke-width="0.7" stroke-opacity="0.58"/><path d="M1344.2 567.2L1362.1 539.7" stroke-width="1.2" stroke-opacity="0.55"/><path d="M1358.0 564.8L1377.5 534.8" stroke-width="0.9" stroke-opacity="0.38"/><path d="M1363.4 563.4L1382.1 534.6" stroke-width="1.2" stroke-opacity="0.37"/><path d="M1377.5 557.4L1388.5 540.5" stroke-width="0.9" stroke-opacity="0.55"/><path d="M1383.2 566.6L1398.9 542.6" stroke-width="1.6" stroke-opacity="0.40"/><path d="M1389.4 567.1L1408.1 538.2" stroke-width="2.2" stroke-opacity="0.19"/></g></g><path id="n21" d="M718.2 631.1L721.0 627.9L723.1 625.4L726.2 624.6L727.6 623.2L729.5 620.8L730.7 619.8L733.6 620.5L735.7 622.1L738.5 621.5L740.7 622.3L743.5 622.1L746.2 620.5L748.3 620.7L749.7 621.5L753.3 619.7L755.6 621.4L758.1 621.2L759.9 621.2L761.9 620.9L764.8 621.5L766.9 620.5L768.1 619.6L770.9 621.9L773.1 622.1L774.9 621.2L777.5 621.3L779.4 620.6L781.2 621.2L781.9 621.9L785.0 620.4L786.6 621.1L788.4 619.6L790.1 620.3L792.2 622.1L793.3 620.1L794.5 621.6L796.3 619.8L798.7 621.7L800.2 622.2L803.6 620.3L805.5 621.4L807.7 621.1L810.9 622.0L812.5 621.5L814.7 620.0L817.7 621.3L820.0 622.1L821.8 621.8L823.6 620.1L824.5 620.0L827.6 620.6L828.3 620.8L829.3 619.6L832.2 623.2L834.7 624.6L837.8 630.0L840.7 630.6L840.1 636.1L838.5 641.9L837.9 642.2L835.6 645.0L832.1 647.5L831.1 649.2L829.6 650.5L826.8 649.5L824.7 649.0L821.8 649.1L820.9 651.0L817.8 648.8L816.7 650.2L814.6 651.0L813.7 649.8L810.0 650.5L808.2 649.5L806.6 650.7L803.8 651.1L802.6 649.5L799.0 651.1L797.5 649.8L795.9 650.4L794.6 648.9L792.6 649.2L789.2 650.0L787.3 650.9L784.9 650.5L782.0 649.9L780.1 649.1L777.2 650.5L774.9 649.5L773.6 650.0L771.6 649.4L769.8 649.6L768.4 650.8L767.2 649.4L764.7 650.2L763.2 649.6L761.5 651.3L759.6 649.9L758.2 650.1L755.6 649.2L753.6 649.1L750.7 649.6L748.4 650.5L747.0 651.0L745.9 648.9L744.2 649.9L742.1 651.0L739.6 648.8L737.4 650.2L735.0 650.4L733.1 648.9L731.0 649.4L728.7 649.0L726.4 648.4L725.7 646.6L724.3 646.2L721.8 642.8L720.5 641.7L719.0 637.9Z" fill="#fde5b3"/><clipPath id="c21"><use href="#n21"/></clipPath><g clip-path="url(#c21)"><g stroke="#fef8e7" fill="none"><path d="M705.1 639.7L718.3 619.3" stroke-width="0.9" stroke-opacity="0.36"/><path d="M708.5 640.6L721.5 620.6" stroke-width="2.2" stroke-opacity="0.31"/><path d="M708.9 646.4L722.1 626.2" stroke-width="0.9" stroke-opacity="0.38"/><path d="M725.4 638.3L733.3 626.1" stroke-width="1.6" stroke-opacity="0.35"/><path d="M727.4 651.5L748.2 619.4" stroke-width="0.9" stroke-opacity="0.43"/><path d="M739.8 646.6L746.2 636.6" stroke-width="0.9" stroke-opacity="0.47"/><path d="M744.4 648.3L758.8 626.1" stroke-width="1.2" stroke-opacity="0.45"/><path d="M754.4 647.5L771.7 620.8" stroke-width="0.9" stroke-opacity="0.53"/><path d="M763.4 649.0L780.8 622.2" stroke-width="0.9" stroke-opacity="0.34"/><path d="M778.4 637.0L789.8 619.6" stroke-width="0.7" stroke-opacity="0.59"/><path d="M787.0 636.9L791.5 629.9" stroke-width="0.9" stroke-opacity="0.68"/><path d="M792.0 647.1L806.1 625.2" stroke-width="0.7" stroke-opacity="0.39"/><path d="M801.8 646.8L818.8 620.7" stroke-width="1.2" stroke-opacity="0.44"/><path d="M811.8 641.7L823.2 624.1" stroke-width="0.9" stroke-opacity="0.38"/><path d="M816.6 644.5L831.0 622.3" stroke-width="0.7" stroke-opacity="0.47"/><path d="M818.2 649.6L829.9 631.4" stroke-width="0.7" stroke-opacity="0.35"/><path d="M827.2 652.5L847.1 621.8" stroke-width="0.9" stroke-opacity="0.30"/><path d="M841.4 647.7L855.4 626.1" stroke-width="1.6" stroke-opacity="0.36"/></g></g><path id="n22" d="M902.3 631.9L904.1 630.2L906.4 628.4L907.6 626.3L910.6 623.6L913.3 621.8L916.1 621.5L917.3 621.9L919.7 621.8L921.8 621.3L923.7 622.3L925.8 621.5L928.3 619.9L929.9 620.3L931.1 619.5L933.3 620.2L935.0 620.3L938.0 622.0L939.1 621.5L940.5 620.0L943.8 620.2L946.0 619.5L946.9 621.6L948.2 620.9L950.2 622.2L952.5 619.6L953.9 621.9L957.1 620.6L958.8 620.4L962.1 620.2L963.7 619.6L966.9 620.9L969.2 622.0L971.1 622.2L973.7 621.8L975.8 620.9L977.5 622.1L980.8 622.1L982.9 622.0L985.0 620.2L987.0 621.4L990.0 619.9L990.8 620.6L992.9 621.4L995.8 620.7L997.3 621.6L1000.6 621.0L1002.4 620.2L1004.0 620.9L1006.6 619.6L1008.7 619.9L1010.5 619.7L1012.3 620.4L1014.4 620.3L1016.5 620.0L1020.2 620.4L1022.0 620.4L1024.5 621.0L1027.3 621.8L1029.8 621.3L1030.5 621.3L1032.7 621.7L1035.5 623.2L1037.1 623.4L1039.2 627.6L1042.6 632.3L1043.2 635.0L1042.7 641.0L1040.9 643.1L1038.9 645.4L1037.2 647.1L1035.2 648.7L1032.4 649.9L1030.1 649.0L1029.0 650.0L1027.6 651.0L1026.2 649.6L1023.6 649.8L1022.5 651.1L1021.4 650.9L1020.0 649.4L1017.9 649.3L1016.4 651.5L1014.6 650.4L1011.7 650.8L1009.9 649.7L1008.6 649.8L1006.2 649.0L1004.2 650.3L1001.4 649.9L1000.4 649.4L997.4 650.8L996.4 649.7L994.4 650.3L993.0 650.7L991.2 650.4L988.8 649.4L986.3 651.0L983.4 648.8L981.3 649.8L979.0 651.3L977.1 650.6L975.7 649.8L973.2 649.0L970.6 649.4L968.3 651.2L965.5 649.5L964.6 651.1L963.3 648.8L960.8 649.3L958.4 650.0L956.8 651.1L955.9 651.2L953.2 650.8L951.9 649.3L950.0 649.3L948.1 649.0L946.1 649.5L944.1 650.3L941.8 650.7L938.6 650.6L937.6 650.0L935.0 649.1L933.4 649.7L931.7 650.1L930.0 648.9L927.5 649.7L926.9 651.2L924.8 651.1L924.1 649.0L921.3 649.4L919.2 649.0L916.9 649.0L915.1 648.7L913.9 651.4L911.2 646.9L908.9 647.2L906.9 642.5L903.4 641.0Z" fill="#fde5b3"/><clipPath id="c22"><use href="#n22"/></clipPath><g clip-path="url(#c22)"><g stroke="#fef8e7" fill="none"><path d="M891.6 639.4L904.8 619.1" stroke-width="1.2" stroke-opacity="0.66"/><path d="M893.9 651.4L912.3 623.0" stroke-width="1.6" stroke-opacity="0.43"/><path d="M901.1 652.2L922.6 619.2" stroke-width="1.2" stroke-opacity="0.32"/><path d="M917.7 638.5L921.8 632.3" stroke-width="2.2" stroke-opacity="0.33"/><path d="M925.4 638.5L934.1 625.1" stroke-width="2.2" stroke-opacity="0.29"/><path d="M928.2 649.7L946.7 621.2" stroke-width="1.2" stroke-opacity="0.41"/><path d="M949.6 634.0L955.6 624.7" stroke-width="0.9" stroke-opacity="0.38"/><path d="M952.7 634.9L958.7 625.6" stroke-width="0.9" stroke-opacity="0.36"/><path d="M954.6 651.0L971.6 624.8" stroke-width="1.2" stroke-opacity="0.53"/><path d="M963.0 648.1L973.6 631.8" stroke-width="0.9" stroke-opacity="0.42"/><path d="M972.1 645.0L989.2 618.6" stroke-width="1.6" stroke-opacity="0.23"/><path d="M975.9 648.0L992.7 622.3" stroke-width="0.9" stroke-opacity="0.41"/><path d="M995.1 637.4L1006.1 620.5" stroke-width="0.9" stroke-opacity="0.54"/><path d="M991.9 651.3L1011.9 620.4" stroke-width="1.2" stroke-opacity="0.51"/><path d="M1003.7 645.7L1016.9 625.2" stroke-width="1.2" stroke-opacity="0.43"/><path d="M1011.1 648.5L1026.7 624.6" stroke-width="0.7" stroke-opacity="0.41"/><path d="M1018.8 646.6L1032.8 625.0" stroke-width="1.2" stroke-opacity="0.47"/><path d="M1030.7 635.2L1038.3 623.5" stroke-width="1.6" stroke-opacity="0.27"/><path d="M1028.7 649.2L1040.5 631.0" stroke-width="1.6" stroke-opacity="0.24"/><path d="M1039.0 648.7L1047.3 635.9" stroke-width="0.7" stroke-opacity="0.37"/><path d="M1040.8 651.8L1052.5 633.7" stroke-width="0.9" stroke-opacity="0.45"/></g></g><path id="n23" d="M1103.0 580.3L1105.0 579.2L1107.3 577.7L1109.9 573.3L1112.3 573.2L1113.7 569.1L1116.4 570.4L1118.4 569.6L1119.8 570.3L1121.8 568.8L1124.1 569.5L1126.0 568.9L1127.8 570.5L1129.3 569.5L1131.1 569.7L1132.3 569.4L1134.4 569.1L1136.3 568.8L1138.8 568.8L1141.3 571.0L1142.3 570.2L1145.1 571.3L1146.7 570.9L1148.3 570.6L1149.8 568.7L1152.6 570.7L1155.2 569.0L1157.8 569.9L1161.0 570.2L1163.2 569.7L1165.7 569.3L1167.7 571.3L1170.2 570.6L1173.0 569.6L1174.7 569.3L1177.1 569.8L1178.5 569.4L1180.6 570.9L1182.5 569.3L1184.8 570.3L1186.9 570.1L1189.7 569.0L1190.7 570.1L1193.0 570.5L1194.6 569.1L1196.9 569.0L1197.4 569.4L1199.2 568.9L1202.6 571.0L1204.6 569.9L1206.1 569.7L1208.9 568.8L1210.1 570.9L1211.1 570.2L1213.7 571.3L1216.8 570.4L1218.9 568.9L1221.3 568.7L1224.0 569.4L1226.5 571.3L1230.0 570.8L1232.2 570.4L1235.1 571.1L1236.0 570.6L1237.5 568.7L1238.8 570.6L1240.1 571.0L1242.6 569.8L1244.7 570.3L1246.9 570.6L1249.4 570.2L1252.3 569.8L1255.1 570.1L1258.1 569.7L1261.1 569.0L1262.7 570.6L1264.6 570.4L1265.7 569.9L1268.7 570.5L1271.5 569.2L1274.2 571.0L1276.1 570.3L1278.3 570.5L1279.1 569.7L1281.5 569.0L1282.4 570.6L1285.5 570.2L1286.9 570.5L1290.0 570.5L1293.1 571.3L1295.3 571.3L1296.6 569.7L1298.1 569.5L1301.3 571.2L1303.8 569.2L1307.3 571.3L1309.5 574.7L1311.8 575.7L1313.0 576.0L1316.0 579.7L1317.4 585.7L1316.3 588.7L1314.5 590.9L1312.0 593.7L1309.9 595.2L1309.2 596.8L1306.0 600.4L1304.5 598.6L1303.2 598.6L1302.0 599.3L1300.1 598.9L1297.8 600.6L1296.7 600.2L1295.3 600.5L1293.5 600.8L1291.5 600.8L1289.3 600.3L1286.9 600.9L1284.6 598.5L1282.0 601.2L1279.3 601.1L1277.8 598.8L1275.0 599.0L1272.9 600.1L1270.4 600.3L1268.6 599.0L1266.9 601.2L1265.0 600.7L1263.3 600.9L1260.8 600.9L1258.7 600.9L1256.5 598.6L1254.3 599.7L1251.0 599.4L1249.8 598.7L1248.1 599.9L1247.0 599.5L1245.0 601.1L1242.9 601.1L1241.5 598.8L1240.1 599.8L1236.2 598.9L1234.5 599.8L1232.1 600.7L1229.1 599.5L1228.0 599.2L1225.6 600.5L1224.2 599.8L1220.8 599.0L1219.2 599.9L1216.3 599.9L1214.5 600.1L1211.5 601.0L1209.4 601.1L1206.9 599.3L1205.2 598.6L1203.4 600.7L1200.2 599.5L1197.9 599.9L1196.5 599.9L1195.2 599.8L1193.1 599.7L1190.8 598.8L1188.5 599.6L1187.1 600.7L1184.2 599.2L1182.9 600.9L1179.7 599.5L1178.1 601.2L1176.9 600.2L1174.0 600.9L1173.1 601.2L1171.2 599.3L1169.4 600.2L1167.9 600.0L1165.5 599.1L1162.9 599.6L1161.2 600.6L1158.1 600.8L1155.9 599.0L1154.3 599.3L1151.3 600.0L1149.2 600.6L1145.4 600.3L1142.9 600.0L1140.6 599.6L1137.8 599.9L1134.5 599.9L1133.0 599.8L1130.9 600.9L1129.2 598.8L1126.8 599.0L1124.6 598.8L1123.2 600.8L1121.2 601.1L1119.8 598.6L1117.5 601.1L1115.7 600.8L1112.5 599.8L1111.1 595.7L1108.8 594.5L1107.1 593.3L1105.4 591.5Z" fill="#fde5b3"/><clipPath id="c23"><use href="#n23"/></clipPath><g clip-path="url(#c23)"><g stroke="#fef8e7" fill="none"><path d="M1086.2 600.5L1104.9 571.6" stroke-width="0.7" stroke-opacity="0.60"/><path d="M1097.9 596.5L1105.6 584.6" stroke-width="0.9" stroke-opacity="0.64"/><path d="M1105.2 598.5L1124.0 569.5" stroke-width="1.6" stroke-opacity="0.27"/><path d="M1110.2 602.2L1131.5 569.4" stroke-width="2.2" stroke-opacity="0.21"/><path d="M1120.5 594.9L1133.4 575.1" stroke-width="0.9" stroke-opacity="0.66"/><path d="M1133.8 588.4L1146.1 569.4" stroke-width="2.2" stroke-opacity="0.28"/><path d="M1137.5 600.9L1158.7 568.3" stroke-width="2.2" stroke-opacity="0.42"/><path d="M1140.6 602.4L1162.1 569.3" stroke-width="0.9" stroke-opacity="0.55"/><path d="M1152.0 601.9L1163.4 584.3" stroke-width="2.2" stroke-opacity="0.40"/><path d="M1155.9 601.5L1173.0 575.1" stroke-width="2.2" stroke-opacity="0.31"/><path d="M1162.6 599.8L1181.6 570.6" stroke-width="0.9" stroke-opacity="0.38"/><path d="M1174.1 598.3L1190.8 572.6" stroke-width="0.7" stroke-opacity="0.39"/><path d="M1183.9 597.9L1203.6 567.6" stroke-width="0.9" stroke-opacity="0.58"/><path d="M1203.5 586.4L1212.8 572.1" stroke-width="1.2" stroke-opacity="0.69"/><path d="M1201.2 602.0L1223.2 568.2" stroke-width="1.6" stroke-opacity="0.37"/><path d="M1208.7 601.6L1223.1 579.4" stroke-width="0.9" stroke-opacity="0.60"/><path d="M1216.8 594.6L1230.3 573.8" stroke-width="0.9" stroke-opacity="0.47"/><path d="M1225.7 597.5L1236.2 581.3" stroke-width="1.2" stroke-opacity="0.41"/><path d="M1234.5 597.1L1246.3 579.0" stroke-width="0.9" stroke-opacity="0.69"/><path d="M1246.5 594.4L1261.4 571.5" stroke-width="2.2" stroke-opacity="0.22"/><path d="M1259.5 587.6L1272.4 567.7" stroke-width="2.2" stroke-opacity="0.32"/><path d="M1261.9 598.9L1278.4 573.5" stroke-width="1.2" stroke-opacity="0.65"/><path d="M1269.3 597.5L1286.4 571.1" stroke-width="1.2" stroke-opacity="0.52"/><path d="M1276.8 595.9L1290.1 575.4" stroke-width="0.9" stroke-opacity="0.47"/><path d="M1278.2 602.2L1299.4 569.5" stroke-width="0.9" stroke-opacity="0.60"/><path d="M1293.7 584.8L1302.5 571.3" stroke-width="1.6" stroke-opacity="0.37"/><path d="M1291.4 593.8L1304.3 574.0" stroke-width="0.9" stroke-opacity="0.42"/><path d="M1300.6 586.7L1311.7 569.5" stroke-width="1.6" stroke-opacity="0.38"/><path d="M1300.4 601.8L1313.1 582.2" stroke-width="0.9" stroke-opacity="0.36"/><path d="M1311.0 595.6L1325.3 573.7" stroke-width="0.9" stroke-opacity="0.37"/><path d="M1315.3 599.1L1327.7 579.9" stroke-width="2.2" stroke-opacity="0.30"/></g></g><path id="n24" d="M1103.9 614.9L1105.4 612.8L1108.2 608.9L1110.6 605.6L1114.0 603.3L1115.7 605.1L1118.3 604.3L1121.0 603.9L1122.9 604.6L1125.2 603.7L1127.2 602.9L1129.1 604.6L1131.5 602.8L1133.6 603.9L1134.4 602.5L1136.4 603.3L1138.5 604.1L1141.2 603.6L1143.4 605.0L1144.7 605.0L1145.6 604.8L1147.7 603.9L1149.4 603.0L1150.9 602.7L1152.5 603.7L1154.6 603.9L1155.4 605.1L1157.7 602.7L1159.7 603.6L1161.4 604.5L1164.0 602.5L1166.1 603.2L1167.5 603.4L1170.7 602.9L1173.6 604.5L1174.5 602.4L1175.4 603.8L1178.2 605.0L1181.7 604.2L1183.6 603.7L1185.8 603.5L1187.7 603.1L1189.3 603.8L1191.4 604.6L1193.7 605.1L1195.3 604.6L1196.9 604.7L1198.2 604.8L1200.7 603.5L1203.5 603.2L1204.8 602.5L1207.4 603.7L1210.4 602.6L1213.3 603.9L1216.2 603.3L1218.3 602.8L1219.1 604.7L1221.6 605.1L1223.2 604.8L1224.0 603.2L1227.6 604.5L1228.3 602.6L1231.2 603.2L1232.6 604.7L1235.1 602.6L1236.4 602.5L1239.3 603.8L1240.5 603.9L1241.4 604.8L1243.8 604.2L1246.5 602.9L1248.5 604.8L1251.2 602.4L1253.0 605.0L1256.1 604.7L1257.1 602.8L1260.1 604.3L1261.9 603.6L1264.8 604.0L1267.6 602.6L1269.3 602.7L1272.1 602.4L1274.2 603.8L1275.8 604.4L1278.8 603.1L1281.9 604.7L1283.4 603.7L1284.6 604.9L1286.2 603.8L1288.6 604.2L1291.1 603.6L1293.2 605.5L1294.6 605.5L1296.6 607.8L1297.7 610.2L1300.9 611.5L1302.7 613.9L1303.1 618.5L1301.9 623.7L1298.9 627.2L1297.2 630.5L1296.1 631.0L1294.4 631.4L1292.4 633.2L1291.6 633.0L1290.4 633.4L1287.3 632.9L1284.5 633.5L1282.0 634.5L1280.4 633.8L1277.9 634.7L1275.5 632.6L1271.9 634.5L1270.1 632.4L1268.0 633.6L1265.0 634.5L1263.6 632.9L1260.9 632.9L1259.2 633.6L1255.8 633.4L1254.2 634.4L1252.0 632.9L1250.0 634.8L1247.4 634.4L1245.3 634.4L1242.9 634.4L1242.3 633.0L1240.9 634.9L1239.8 634.5L1236.1 633.6L1233.7 633.1L1231.6 632.6L1228.4 633.4L1226.9 634.4L1223.4 634.7L1221.5 633.7L1219.2 633.9L1217.8 632.7L1217.0 632.4L1215.4 633.1L1213.0 633.0L1211.2 634.1L1209.5 634.4L1208.4 633.7L1207.3 634.9L1204.3 633.4L1202.3 634.9L1200.3 632.5L1197.8 634.2L1196.1 633.9L1193.6 632.6L1191.8 633.4L1189.3 634.1L1187.8 634.6L1186.3 633.1L1184.6 633.0L1181.9 634.9L1179.7 632.3L1177.6 633.0L1174.4 634.1L1172.4 633.5L1169.1 634.4L1166.8 632.5L1164.4 634.2L1162.5 632.9L1158.7 633.7L1157.7 633.7L1155.7 634.5L1153.5 634.4L1151.6 632.9L1150.7 633.9L1148.1 632.7L1146.3 632.7L1143.3 634.6L1141.3 633.5L1139.6 633.0L1137.9 634.3L1136.3 632.9L1134.5 633.1L1133.1 633.1L1130.4 633.3L1129.2 633.9L1126.5 634.7L1124.6 634.1L1122.7 634.6L1120.0 633.9L1117.5 633.9L1115.4 633.2L1114.1 634.3L1111.0 632.2L1110.3 630.9L1108.5 628.0L1106.6 626.9L1105.3 622.7Z" fill="#fde5b3"/><clipPath id="c24"><use href="#n24"/></clipPath><g clip-path="url(#c24)"><g stroke="#fef8e7" fill="none"><path d="M1086.5 633.0L1096.7 617.4" stroke-width="1.6" stroke-opacity="0.31"/><path d="M1089.7 634.8L1099.3 620.0" stroke-width="0.9" stroke-opacity="0.49"/><path d="M1102.2 629.4L1115.7 608.5" stroke-width="2.2" stroke-opacity="0.28"/><path d="M1111.1 633.4L1128.9 606.0" stroke-width="0.9" stroke-opacity="0.60"/><path d="M1117.8 630.7L1132.4 608.3" stroke-width="0.9" stroke-opacity="0.58"/><path d="M1119.0 634.6L1129.6 618.3" stroke-width="0.7" stroke-opacity="0.38"/><path d="M1135.8 624.9L1148.2 605.8" stroke-width="0.9" stroke-opacity="0.39"/><path d="M1140.7 627.8L1156.9 602.9" stroke-width="2.2" stroke-opacity="0.37"/><path d="M1150.2 630.0L1162.1 611.8" stroke-width="1.6" stroke-opacity="0.26"/><path d="M1155.1 628.9L1168.9 607.7" stroke-width="1.2" stroke-opacity="0.54"/><path d="M1163.2 627.9L1179.4 602.9" stroke-width="1.2" stroke-opacity="0.38"/><path d="M1164.3 635.6L1182.4 607.8" stroke-width="1.2" stroke-opacity="0.43"/><path d="M1172.2 629.4L1181.4 615.2" stroke-width="1.2" stroke-opacity="0.63"/><path d="M1172.1 635.1L1189.6 608.2" stroke-width="0.7" stroke-opacity="0.65"/><path d="M1178.3 632.4L1194.5 607.6" stroke-width="0.9" stroke-opacity="0.44"/><path d="M1188.4 632.3L1208.3 601.7" stroke-width="1.6" stroke-opacity="0.30"/><path d="M1196.4 629.9L1214.4 602.2" stroke-width="0.9" stroke-opacity="0.55"/><path d="M1214.7 618.0L1225.4 601.7" stroke-width="1.6" stroke-opacity="0.42"/><path d="M1209.7 632.8L1229.5 602.4" stroke-width="1.6" stroke-opacity="0.38"/><path d="M1217.0 632.8L1232.7 608.6" stroke-width="2.2" stroke-opacity="0.41"/><path d="M1224.3 632.9L1242.8 604.5" stroke-width="0.9" stroke-opacity="0.39"/><path d="M1232.5 633.9L1252.1 603.7" stroke-width="0.7" stroke-opacity="0.54"/><path d="M1236.9 635.8L1255.2 607.6" stroke-width="1.2" stroke-opacity="0.48"/><path d="M1252.8 629.0L1267.2 606.9" stroke-width="0.9" stroke-opacity="0.32"/><path d="M1265.2 619.6L1271.6 609.7" stroke-width="0.9" stroke-opacity="0.60"/><path d="M1269.0 632.8L1289.3 601.5" stroke-width="0.7" stroke-opacity="0.54"/><path d="M1280.0 621.7L1292.4 602.8" stroke-width="2.2" stroke-opacity="0.38"/><path d="M1281.2 630.0L1292.5 612.6" stroke-width="0.9" stroke-opacity="0.53"/><path d="M1290.6 634.3L1309.5 605.2" stroke-width="0.7" stroke-opacity="0.45"/><path d="M1302.4 629.0L1317.7 605.3" stroke-width="0.9" stroke-opacity="0.37"/></g></g><path id="n25" d="M1103.1 649.3L1105.8 646.5L1108.1 644.0L1109.5 641.3L1112.1 640.2L1113.9 638.6L1115.6 638.8L1119.0 636.2L1120.4 636.6L1122.3 638.4L1125.3 638.2L1126.1 638.5L1129.2 636.3L1132.0 636.8L1134.8 637.4L1137.7 637.0L1140.5 638.6L1141.6 637.3L1143.8 638.6L1146.1 636.6L1148.3 636.7L1151.8 637.2L1154.8 638.0L1156.7 637.5L1159.2 638.1L1162.2 638.5L1164.1 638.8L1166.5 636.3L1168.7 636.2L1171.8 636.2L1173.5 637.5L1175.9 638.1L1178.2 636.1L1180.2 638.8L1182.4 636.3L1184.8 636.8L1186.1 637.5L1189.3 637.2L1190.3 638.4L1192.4 637.1L1195.7 636.1L1197.9 636.5L1200.4 636.4L1202.0 637.1L1204.0 638.1L1206.6 638.5L1208.6 636.6L1211.4 637.1L1212.8 637.5L1215.9 637.4L1218.0 636.8L1219.3 636.8L1221.5 637.9L1223.8 638.2L1226.4 637.2L1228.3 636.7L1230.2 638.3L1231.9 637.4L1233.3 637.0L1235.2 636.2L1238.3 636.1L1239.7 637.2L1241.7 637.7L1244.7 636.8L1247.5 638.2L1249.0 638.6L1249.7 637.6L1252.2 638.1L1254.6 637.4L1256.5 636.8L1258.7 638.1L1260.1 637.7L1260.9 636.3L1263.1 638.1L1264.6 636.5L1267.6 636.9L1268.8 636.1L1270.9 637.2L1273.4 636.3L1276.2 636.3L1278.2 638.1L1280.6 638.5L1283.3 636.6L1284.7 636.5L1287.0 638.8L1289.5 637.7L1291.1 636.7L1292.0 638.3L1294.2 636.6L1296.9 637.9L1299.5 636.9L1301.7 636.1L1304.1 638.3L1306.5 636.4L1309.5 636.2L1310.9 636.7L1313.3 636.4L1314.4 636.4L1316.5 636.9L1319.0 636.3L1319.8 636.8L1321.8 636.1L1323.7 636.4L1325.5 638.6L1328.0 638.0L1330.8 637.4L1332.5 636.2L1335.9 637.5L1337.6 636.2L1340.4 638.4L1342.6 638.1L1343.2 638.4L1345.2 636.6L1347.7 637.5L1349.6 637.9L1352.0 636.6L1355.8 636.8L1357.5 637.0L1360.0 636.8L1362.4 637.9L1364.1 637.6L1366.8 636.4L1370.2 636.8L1372.0 638.6L1373.5 636.6L1376.4 638.2L1377.2 637.3L1378.8 638.7L1381.4 637.2L1382.4 637.6L1383.6 638.7L1385.8 638.7L1389.0 637.4L1391.2 638.1L1393.6 636.5L1394.6 638.6L1396.9 637.9L1398.2 636.8L1401.5 636.3L1404.2 636.5L1406.6 637.6L1407.8 637.6L1410.3 637.7L1412.1 638.2L1414.0 637.1L1416.3 638.4L1417.3 636.1L1418.4 636.3L1420.2 637.8L1421.5 636.3L1423.4 637.3L1424.3 638.8L1426.5 636.7L1429.1 636.3L1431.2 637.2L1433.8 636.8L1435.3 638.5L1437.7 637.3L1440.0 639.5L1441.4 640.7L1443.4 644.1L1444.2 645.5L1446.2 647.2L1448.0 652.7L1445.7 658.3L1443.6 660.9L1442.3 662.8L1441.0 664.2L1438.8 664.3L1436.3 667.0L1435.2 667.6L1432.7 666.6L1430.2 667.8L1427.3 667.9L1425.2 666.8L1423.0 668.1L1420.1 667.7L1419.1 667.0L1415.7 667.7L1414.0 666.5L1411.8 666.3L1408.9 666.2L1407.9 668.2L1406.3 668.4L1404.7 667.0L1402.4 667.2L1400.3 666.5L1397.9 666.8L1395.7 666.4L1394.5 666.1L1391.1 668.3L1388.9 668.3L1386.4 666.5L1383.9 667.1L1381.2 666.6L1379.6 666.2L1377.9 666.2L1375.1 666.3L1374.0 666.0L1371.3 666.9L1369.8 666.2L1368.4 666.0L1365.5 668.4L1363.9 666.7L1362.4 667.4L1361.3 668.4L1359.2 666.9L1356.6 668.6L1353.6 668.3L1352.8 668.1L1350.3 668.2L1348.4 666.3L1345.7 668.2L1344.9 668.1L1342.3 668.0L1339.3 666.8L1338.1 666.4L1335.3 667.8L1333.4 667.9L1331.0 666.3L1329.3 667.4L1325.8 668.0L1324.9 668.2L1321.9 666.2L1319.9 667.6L1317.4 667.3L1316.4 666.5L1314.9 668.3L1313.3 665.9L1311.6 666.5L1310.1 667.3L1308.0 667.1L1305.3 666.8L1302.8 667.0L1301.3 668.2L1299.7 667.3L1298.5 666.8L1296.5 666.3L1294.2 666.3L1292.4 666.9L1289.1 667.9L1286.8 667.8L1284.5 667.1L1282.4 666.7L1281.0 666.1L1277.8 665.9L1277.0 668.5L1275.2 668.4L1274.6 668.5L1273.1 667.9L1271.1 666.3L1268.7 667.9L1267.3 667.6L1264.2 666.1L1262.9 667.9L1262.2 666.7L1259.7 667.5L1258.8 667.8L1256.7 667.1L1255.5 668.1L1253.3 667.8L1250.1 666.9L1249.2 668.6L1245.7 666.7L1243.9 667.0L1242.3 667.8L1240.5 666.1L1238.2 667.3L1235.8 668.3L1234.4 667.7L1232.6 667.2L1231.5 668.6L1229.3 667.6L1228.2 667.0L1226.6 666.2L1224.8 666.5L1220.9 666.4L1219.2 667.4L1216.6 668.3L1213.0 666.5L1211.1 667.8L1209.5 666.6L1206.8 667.1L1204.0 667.2L1202.5 668.0L1199.6 666.0L1197.0 668.2L1194.4 668.3L1192.3 665.9L1189.4 667.6L1188.3 666.1L1185.8 667.0L1182.2 667.4L1180.9 668.6L1178.4 667.0L1175.8 667.8L1174.0 667.7L1172.3 666.3L1170.6 666.4L1169.2 666.5L1167.6 666.7L1165.1 666.9L1163.6 666.3L1160.6 667.9L1158.5 666.5L1155.1 667.4L1153.8 667.6L1150.7 666.5L1148.7 666.9L1145.6 666.4L1143.5 668.6L1142.3 667.1L1140.7 668.3L1138.8 666.0L1136.0 666.8L1134.8 666.7L1133.9 666.7L1131.3 666.5L1128.3 667.3L1126.7 666.1L1124.5 667.1L1123.1 666.8L1121.0 667.3L1117.7 668.5L1117.0 667.5L1114.5 668.6L1111.9 666.7L1110.2 661.9L1108.5 660.0L1105.1 657.9Z" fill="#fde5b3"/><clipPath id="c25"><use href="#n25"/></clipPath><g clip-path="url(#c25)"><g stroke="#fef8e7" fill="none"><path d="M1084.7 665.8L1104.2 635.8" stroke-width="1.6" stroke-opacity="0.34"/><path d="M1099.8 655.6L1100.8 654.0" stroke-width="0.9" stroke-opacity="0.45"/><path d="M1107.4 662.9L1114.6 651.8" stroke-width="0.7" stroke-opacity="0.64"/><path d="M1118.4 656.3L1131.0 636.8" stroke-width="1.2" stroke-opacity="0.43"/><path d="M1126.2 663.1L1143.6 636.3" stroke-width="1.2" stroke-opacity="0.46"/><path d="M1130.2 662.6L1143.4 642.2" stroke-width="2.2" stroke-opacity="0.29"/><path d="M1130.6 668.4L1151.5 636.2" stroke-width="0.7" stroke-opacity="0.31"/><path d="M1144.0 666.6L1159.9 642.0" stroke-width="0.9" stroke-opacity="0.54"/><path d="M1161.5 654.8L1169.7 642.2" stroke-width="0.9" stroke-opacity="0.55"/><path d="M1162.3 664.1L1179.5 637.6" stroke-width="0.7" stroke-opacity="0.46"/><path d="M1174.6 663.9L1191.0 638.6" stroke-width="2.2" stroke-opacity="0.39"/><path d="M1185.5 654.0L1197.1 636.1" stroke-width="2.2" stroke-opacity="0.26"/><path d="M1183.4 663.7L1191.3 651.5" stroke-width="1.6" stroke-opacity="0.40"/><path d="M1196.3 661.6L1210.5 639.9" stroke-width="0.9" stroke-opacity="0.57"/><path d="M1199.8 666.3L1219.5 636.0" stroke-width="1.2" stroke-opacity="0.32"/><path d="M1210.5 667.5L1227.1 641.9" stroke-width="1.2" stroke-opacity="0.68"/><path d="M1223.3 662.4L1236.8 641.6" stroke-width="1.2" stroke-opacity="0.41"/><path d="M1233.1 662.6L1250.2 636.3" stroke-width="0.7" stroke-opacity="0.34"/><path d="M1239.5 661.6L1248.3 648.1" stroke-width="0.9" stroke-opacity="0.66"/><path d="M1248.1 664.8L1263.7 640.8" stroke-width="0.9" stroke-opacity="0.40"/><path d="M1262.1 661.3L1275.1 641.3" stroke-width="1.6" stroke-opacity="0.37"/><path d="M1270.5 661.8L1284.0 641.0" stroke-width="2.2" stroke-opacity="0.23"/><path d="M1273.0 669.0L1291.8 640.1" stroke-width="0.9" stroke-opacity="0.67"/><path d="M1282.8 663.2L1300.7 635.7" stroke-width="0.9" stroke-opacity="0.54"/><path d="M1292.8 666.7L1309.2 641.5" stroke-width="0.9" stroke-opacity="0.48"/><path d="M1302.4 658.5L1315.0 639.2" stroke-width="0.9" stroke-opacity="0.47"/><path d="M1309.8 662.2L1323.0 641.8" stroke-width="2.2" stroke-opacity="0.36"/><path d="M1317.8 664.5L1335.0 638.1" stroke-width="1.6" stroke-opacity="0.31"/><path d="M1328.7 664.8L1340.4 646.8" stroke-width="2.2" stroke-opacity="0.32"/><path d="M1335.5 665.6L1352.1 640.0" stroke-width="0.7" stroke-opacity="0.69"/><path d="M1343.4 667.3L1352.5 653.3" stroke-width="0.7" stroke-opacity="0.67"/><path d="M1350.7 668.8L1367.6 642.9" stroke-width="0.9" stroke-opacity="0.34"/><path d="M1366.5 657.9L1376.1 643.0" stroke-width="0.9" stroke-opacity="0.53"/><path d="M1374.5 654.1L1382.8 641.2" stroke-width="1.2" stroke-opacity="0.45"/><path d="M1376.0 657.7L1385.2 643.5" stroke-width="0.9" stroke-opacity="0.65"/><path d="M1382.4 656.1L1392.6 640.5" stroke-width="0.7" stroke-opacity="0.69"/><path d="M1389.2 661.6L1406.3 635.2" stroke-width="0.9" stroke-opacity="0.34"/><path d="M1400.0 662.4L1414.0 640.9" stroke-width="1.6" stroke-opacity="0.35"/><path d="M1414.3 658.3L1426.4 639.6" stroke-width="0.7" stroke-opacity="0.55"/><path d="M1418.5 669.6L1437.1 641.0" stroke-width="1.2" stroke-opacity="0.47"/><path d="M1430.1 662.0L1444.5 639.8" stroke-width="0.7" stroke-opacity="0.58"/><path d="M1435.6 669.4L1457.9 635.2" stroke-width="1.2" stroke-opacity="0.67"/><path d="M1446.1 665.3L1464.4 637.2" stroke-width="1.2" stroke-opacity="0.33"/></g></g><path id="n26" d="M1103.1 683.3L1105.9 678.8L1107.4 676.4L1109.3 674.8L1110.2 674.6L1112.1 673.5L1114.8 670.7L1117.4 671.1L1120.4 671.0L1123.4 670.8L1124.7 671.2L1127.0 670.4L1130.1 671.6L1132.1 670.0L1133.8 671.5L1134.9 671.9L1136.6 670.0L1139.6 671.0L1140.9 670.0L1143.6 670.3L1145.5 671.9L1147.1 672.2L1149.8 672.4L1151.9 670.9L1154.7 672.2L1157.7 671.9L1159.3 671.2L1160.2 670.2L1163.0 669.8L1164.1 670.8L1166.5 672.4L1168.3 672.0L1171.0 670.0L1172.8 672.5L1174.6 670.2L1176.2 671.7L1178.7 670.9L1181.3 672.1L1182.2 671.0L1184.5 672.3L1187.3 670.7L1189.6 672.1L1190.9 669.9L1193.2 672.5L1194.4 672.0L1195.7 672.0L1199.2 670.1L1200.2 671.1L1202.7 672.4L1204.8 671.4L1206.3 671.2L1207.5 672.4L1208.5 670.8L1210.7 670.5L1212.3 672.0L1214.6 671.7L1218.0 670.3L1219.9 670.3L1222.9 671.8L1225.6 670.0L1226.9 670.4L1229.5 670.8L1231.1 670.4L1232.8 670.8L1236.0 670.6L1237.9 671.0L1240.9 670.7L1242.1 670.3L1244.4 670.5L1245.9 670.3L1248.4 670.5L1251.7 670.1L1254.3 671.5L1254.9 671.6L1257.5 671.5L1260.6 671.6L1263.0 671.0L1264.0 671.5L1265.3 670.4L1266.6 671.9L1270.2 671.0L1272.9 671.4L1275.2 672.1L1277.6 669.9L1278.7 670.6L1281.8 672.3L1284.4 671.7L1285.8 672.5L1287.4 671.6L1290.3 670.6L1292.5 672.2L1295.1 670.3L1297.0 672.3L1299.6 671.2L1301.9 672.2L1303.8 669.8L1307.1 672.5L1309.6 670.4L1310.7 670.8L1313.3 671.3L1316.3 670.4L1318.7 670.4L1321.4 671.1L1322.7 669.8L1325.6 671.3L1328.8 670.4L1329.9 670.0L1332.9 670.4L1334.6 671.2L1337.9 672.5L1339.4 671.3L1340.3 671.3L1343.1 672.4L1344.4 672.3L1346.5 670.7L1348.7 670.6L1351.1 671.4L1353.4 671.2L1355.4 671.6L1356.8 670.3L1359.1 670.6L1360.3 670.0L1362.6 671.9L1363.6 670.8L1365.1 670.5L1368.1 672.0L1370.2 671.4L1371.8 672.2L1374.4 671.5L1376.5 671.8L1379.3 670.3L1380.4 671.5L1383.0 674.2L1384.3 677.1L1386.9 677.1L1388.9 680.6L1390.7 682.1L1390.3 686.1L1388.8 691.5L1386.6 693.0L1385.2 695.0L1381.9 698.5L1381.1 700.6L1379.0 699.8L1377.3 701.7L1374.5 701.8L1372.9 701.7L1370.3 701.2L1368.3 701.4L1366.3 699.7L1364.2 700.1L1362.4 700.1L1358.6 701.1L1356.9 701.4L1355.2 701.1L1353.0 699.6L1351.2 701.3L1348.2 699.6L1345.6 701.5L1344.7 701.1L1341.3 700.6L1338.9 700.8L1336.9 701.5L1334.0 700.4L1332.4 702.1L1329.2 699.6L1326.9 701.7L1325.9 701.8L1324.9 699.7L1322.2 701.3L1320.3 699.8L1318.7 700.1L1317.9 699.9L1316.0 700.1L1312.8 700.9L1310.9 702.1L1309.3 701.2L1306.4 701.5L1303.8 699.9L1300.6 699.8L1297.9 699.8L1295.0 700.4L1292.3 700.0L1289.3 700.9L1286.7 701.3L1285.3 699.8L1282.3 700.1L1280.7 699.6L1278.3 699.7L1275.3 701.9L1273.0 700.6L1270.3 699.8L1268.3 700.4L1266.9 700.7L1265.9 700.8L1262.5 702.0L1260.2 700.3L1258.4 699.6L1257.3 700.6L1255.2 701.8L1252.5 702.2L1249.5 701.5L1247.0 700.1L1245.8 701.0L1243.4 699.7L1241.9 701.5L1239.3 701.9L1237.6 700.2L1235.7 702.0L1233.3 702.2L1231.4 700.8L1229.6 702.3L1228.2 701.6L1226.0 701.7L1223.1 701.3L1220.5 700.3L1219.0 701.4L1216.4 700.3L1215.0 700.1L1212.5 701.2L1210.6 701.2L1207.9 701.0L1205.5 701.7L1203.3 700.8L1200.7 701.9L1198.4 699.6L1196.4 701.2L1194.1 700.9L1192.8 699.7L1190.3 700.2L1187.8 701.6L1185.4 699.9L1183.7 701.2L1181.6 700.4L1178.5 700.7L1176.8 701.2L1174.8 701.0L1173.9 702.2L1171.4 702.0L1169.0 700.8L1166.4 700.1L1163.7 701.7L1161.2 701.6L1157.8 701.2L1155.5 701.8L1153.6 701.2L1151.7 701.2L1150.3 700.4L1148.5 700.7L1146.0 701.5L1143.7 701.2L1142.0 700.1L1139.3 700.4L1136.6 699.9L1134.4 701.4L1131.5 701.5L1129.8 701.7L1127.0 699.6L1124.5 700.1L1121.4 700.2L1119.9 699.8L1118.3 702.3L1116.1 700.6L1114.0 701.7L1112.5 699.1L1109.0 697.1L1107.0 694.0L1106.0 693.4L1104.8 691.7Z" fill="#fde5b3"/><clipPath id="c26"><use href="#n26"/></clipPath><g clip-path="url(#c26)"><g stroke="#fef8e7" fill="none"><path d="M1089.3 695.6L1101.9 676.1" stroke-width="0.7" stroke-opacity="0.49"/><path d="M1091.5 702.1L1109.6 674.2" stroke-width="0.9" stroke-opacity="0.56"/><path d="M1104.4 695.5L1114.0 680.7" stroke-width="2.2" stroke-opacity="0.20"/><path d="M1106.7 700.8L1126.9 669.7" stroke-width="0.9" stroke-opacity="0.70"/><path d="M1113.6 699.5L1129.8 674.7" stroke-width="0.7" stroke-opacity="0.66"/><path d="M1122.4 699.3L1131.8 684.9" stroke-width="1.6" stroke-opacity="0.41"/><path d="M1125.1 703.2L1143.7 674.6" stroke-width="0.9" stroke-opacity="0.68"/><path d="M1137.0 702.3L1158.7 668.9" stroke-width="1.2" stroke-opacity="0.36"/><path d="M1144.8 701.0L1163.5 672.3" stroke-width="1.2" stroke-opacity="0.66"/><path d="M1157.3 699.5L1175.1 672.0" stroke-width="0.9" stroke-opacity="0.32"/><path d="M1174.2 686.8L1183.0 673.1" stroke-width="0.9" stroke-opacity="0.64"/><path d="M1179.5 684.7L1182.2 680.6" stroke-width="1.6" stroke-opacity="0.33"/><path d="M1177.0 696.5L1191.2 674.6" stroke-width="1.6" stroke-opacity="0.42"/><path d="M1188.7 696.9L1201.5 677.2" stroke-width="2.2" stroke-opacity="0.23"/><path d="M1194.0 703.0L1216.0 669.1" stroke-width="1.2" stroke-opacity="0.35"/><path d="M1210.7 695.2L1222.8 676.7" stroke-width="0.9" stroke-opacity="0.41"/><path d="M1228.6 684.8L1236.5 672.6" stroke-width="0.9" stroke-opacity="0.56"/><path d="M1237.2 688.3L1248.4 671.1" stroke-width="0.7" stroke-opacity="0.67"/><path d="M1240.2 700.2L1257.9 672.9" stroke-width="0.9" stroke-opacity="0.41"/><path d="M1245.4 697.7L1259.6 675.8" stroke-width="1.6" stroke-opacity="0.37"/><path d="M1255.2 689.6L1268.4 669.4" stroke-width="0.9" stroke-opacity="0.64"/><path d="M1262.1 697.2L1280.3 669.2" stroke-width="0.7" stroke-opacity="0.61"/><path d="M1279.4 684.5L1284.8 676.2" stroke-width="1.2" stroke-opacity="0.61"/><path d="M1281.1 694.8L1296.3 671.4" stroke-width="0.9" stroke-opacity="0.58"/><path d="M1281.1 702.4L1302.7 669.1" stroke-width="0.7" stroke-opacity="0.30"/><path d="M1297.8 688.4L1307.2 673.8" stroke-width="1.6" stroke-opacity="0.34"/><path d="M1305.9 689.0L1313.6 677.2" stroke-width="0.9" stroke-opacity="0.44"/><path d="M1304.0 700.2L1322.0 672.4" stroke-width="0.9" stroke-opacity="0.45"/><path d="M1319.0 692.9L1331.2 674.1" stroke-width="1.6" stroke-opacity="0.21"/><path d="M1325.6 697.1L1341.8 672.3" stroke-width="2.2" stroke-opacity="0.34"/><path d="M1327.8 703.5L1348.6 671.4" stroke-width="0.9" stroke-opacity="0.46"/><path d="M1341.6 692.7L1355.4 671.5" stroke-width="1.6" stroke-opacity="0.20"/><path d="M1343.9 696.9L1362.2 668.9" stroke-width="0.7" stroke-opacity="0.38"/><path d="M1345.1 703.3L1366.9 669.7" stroke-width="2.2" stroke-opacity="0.32"/><path d="M1362.3 696.0L1377.1 673.2" stroke-width="0.9" stroke-opacity="0.62"/><path d="M1378.7 688.8L1391.8 668.6" stroke-width="1.6" stroke-opacity="0.27"/><path d="M1389.6 688.4L1391.3 685.8" stroke-width="0.7" stroke-opacity="0.50"/></g></g>
<g class="mt">
<text x="733.3" y="238.1">システムエラー対策</text>
<text x="992.0" y="238.1">担当者：山本</text>
<text x="1194.8" y="187.5">期限：<tspan class="hw">2026</tspan>年<tspan class="hw">3</tspan>月<tspan class="hw">16</tspan>日</text>
<text x="1194.8" y="221.2">ステータス：完了</text>
<text x="1194.8" y="255.0">対応策：エラー内容解析</text>
<text x="1194.8" y="288.7">備考：課長報告済み</text>
<text x="733.3" y="372.6">事象<tspan class="hwa" textLength="9.6" lengthAdjust="spacingAndGlyphs">A</tspan>不具合対応</text>
<text x="964.0" y="372.6">担当者：石井</text>
<text x="1166.8" y="322.1">期限：<tspan class="hw">2026</tspan>年<tspan class="hw">3</tspan>月<tspan class="hw">20</tspan>日</text>
<text x="1166.8" y="355.8">ステータス：対応中</text>
<text x="1166.8" y="389.5">対応策：事象確認</text>
<text x="1166.8" y="423.1">備考：客先報告、加藤さん対応</text>
<text x="733.3" y="507.1">新製品広告遅延</text>
<text x="954.0" y="507.1">担当者：中野</text>
<text x="1156.8" y="456.6">期限：<tspan class="hw">2026</tspan>年<tspan class="hw">3</tspan>月<tspan class="hw">25</tspan>日</text>
<text x="1156.8" y="490.2">ステータス：対応中</text>
<text x="1156.8" y="524.0">対応策：広告費支払い遅れ</text>
<text x="1156.8" y="557.6">備考：<tspan class="hw">3</tspan>月<tspan class="hw">25</tspan>日支払い予定</text>
<text x="733.3" y="641.6">未検収通知</text>
<text x="917.0" y="641.6">担当者：佐藤</text>
<text x="1118.3" y="591.1">期限：<tspan class="hw">2026</tspan>年<tspan class="hw">3</tspan>月<tspan class="hw">31</tspan>日</text>
<text x="1118.3" y="624.8">ステータス：未着手</text>
<text x="1118.3" y="658.5">対応策：<tspan class="hw">3</tspan>月<tspan class="hw">20</tspan>日までに関係者メール</text>
<text x="1118.3" y="692.1">備考：<tspan class="hw">3</tspan>月<tspan class="hw">27</tspan>日研修期限で通知</text>
</g>
<text class="rt" x="155.5" y="444.0">基本課題管理表</text>
<text class="m2" x="532.5" y="442.3">課題一覧</text>
</svg>
</main>
<header id="chrome">
<div class="a" style="left:0px;top:0px;width:1918px;height:45px;background:#e0e2e2"></div>
<svg class="a" style="left:286px;top:4px;" width="230" height="42" viewBox="0 0 230 42" fill="none"><path d="M0 41 C8 41 12 37 12 29 V10 C12 3 16 0 22 0 H207 C213 0 217 3 217 10 V29 C217 37 221 41 229 41 V42 H0 Z" fill="#f5f5f5"/></svg>
<svg class="a" style="left:21px;top:11px;" width="23" height="23" viewBox="0 0 23 23" fill="none"><defs><linearGradient id="lg1" x1="0" y1="0" x2="1" y2="1"><stop offset="0" stop-color="#3fcf7a"/><stop offset="1" stop-color="#17999a"/></linearGradient></defs><rect width="23" height="23" rx="4.5" fill="url(#lg1)"/><path d="M5.2 6.2 L11.5 10.2 L17.8 6.2 V16.8 L11.5 12.8 L5.2 16.8 Z" stroke="#fff" stroke-width="1.9" stroke-linejoin="round" fill="none"/></svg>
<span id="t26" class="t" style="left:50.00px;top:11.90px;font-size:15px;color:#1a1a1a;font-weight:400;transform:scaleX(0.9764);">Wondershare EdrawMind</span>
<div class="a" style="left:231px;top:12px;width:37px;height:20px;border-radius:5px;background:linear-gradient(100deg,#ffd970,#ffb52e)"></div>
<span id="t27" class="t" style="left:236.00px;top:9.00px;font-size:15.5px;color:#3b2a12;font-weight:400;transform:scaleX(0.9967);">Pro</span>
<svg class="a" style="left:309px;top:12px;" width="18" height="20" viewBox="0 0 18 20" fill="none"><path d="M2.5 0 H12.5 L18 5.5 V17.5 Q18 20 15.5 20 H2.5 Q0 20 0 17.5 V2.5 Q0 0 2.5 0Z" fill="#10c88c"/><path d="M4.6 8.3h3.6v3.2H4.6zM10.6 6.2h3.4v2.6h-3.4zM10.6 11.4h3.4v2.6h-3.4zM8.2 9.9h1.2M9.4 7.5v5.2M9.4 7.5h1.2M9.4 12.7h1.2" stroke="#fff" stroke-width="1.1" fill="none"/></svg>
<span id="t28" class="t" style="left:333.00px;top:12.10px;font-size:14.8px;color:#1a1a1a;font-weight:400;transform:scaleX(1.0039);">基本課題管理表</span>
<div class="a" style="left:478.7px;top:18px;width:10px;height:10px;border-radius:50%;background:#5c5c5c"></div>
<svg class="a" style="left:517.7px;top:14px;" width="18" height="18" viewBox="0 0 18 18" fill="none" stroke="#444" stroke-width="1.4" stroke-linecap="round" stroke-linejoin="round"><path d="M1 9H17M9 1V17"/></svg>
<div class="a" style="left:1722px;top:6.5px;width:50.5px;height:30.5px;border-radius:16px;background:#d7d9d9;border:1px solid #c4c6c6;box-sizing:border-box"></div>
<svg class="a" style="left:1725px;top:8px;" width="30" height="30" viewBox="0 0 30 30" fill="none"><defs><linearGradient id="av" x1="0" y1="0.6" x2="1" y2="0.3"><stop offset="0" stop-color="#fba2d2"/><stop offset="0.5" stop-color="#eeb6f6"/><stop offset="1" stop-color="#a9dcfb"/></linearGradient></defs><circle cx="12.6" cy="12.6" r="11.8" fill="url(#av)" stroke="#86e2c4" stroke-width="1.1"/><path d="M10.2 7.6h4.6v4.6h-4.6z" stroke="#fff" stroke-width="1.1" fill="none" opacity=".85"/><path d="M8.2 24V16.5H14V24Z" fill="#f38ee0" opacity=".8"/><circle cx="20.8" cy="21.4" r="6.2" fill="#1f78dc" stroke="#fff" stroke-width="1.2"/><path d="M18.4 24V20.6h1.7V24zM21.2 24v-5.4h1.7V24z" fill="#fff"/></svg>
<svg class="a" style="left:1755.7px;top:19.6px;" width="10" height="6" viewBox="0 0 10 6" fill="none" stroke="#555" stroke-width="1.3" stroke-linecap="round" stroke-linejoin="round"><path d="M1 1L5 5L9 1"/></svg>
<svg class="a" style="left:1801.5px;top:22.3px;" width="15" height="2" viewBox="0 0 15 2" fill="none" stroke="#333" stroke-width="1.3" stroke-linecap="round" stroke-linejoin="round"><path d="M1 1H14"/></svg>
<svg class="a" style="left:1841px;top:15px;" width="16" height="16" viewBox="0 0 16 16" fill="none" stroke="#3a3a3a" stroke-width="1.4" stroke-linecap="round" stroke-linejoin="round"><path d="M1 4.8h10.6v10.2H1zM4.6 4.6V1H15v10.4h-3.2"/></svg>
<svg class="a" style="left:1882.5px;top:16.3px;" width="13" height="13.4" viewBox="0 0 13 13.4" fill="none" stroke="#333" stroke-width="1.4" stroke-linecap="round" stroke-linejoin="round"><path d="M0.8 0.8L12.2 12.6M12.2 0.8L0.8 12.6"/></svg>
<div class="a" style="left:0px;top:45px;width:1918px;height:34px;background:#f5f5f5"></div>
<div class="a" style="left:0px;top:79px;width:1918px;height:1px;background:#e1e1e1"></div>
<svg class="a" style="left:18.5px;top:52.7px;" width="12" height="18" viewBox="0 0 12 18" fill="none" stroke="#333" stroke-width="1.5" stroke-linecap="round" stroke-linejoin="round"><path d="M10.5 1.2L2 9L10.5 16.8"/></svg>
<svg class="a" style="left:47.5px;top:54px;" width="15" height="15" viewBox="0 0 15 15" fill="none" stroke="#333" stroke-width="1.4" stroke-linecap="round" stroke-linejoin="round"><path d="M1 1.5H14M1 7.5H14M1 13.5H14"/></svg>
<span id="t29" class="t" style="left:74.00px;top:51.20px;font-size:14.3px;color:#222;font-weight:400;transform:scaleX(0.9860);"><span class="ko" style="width:43.76px"><span class="ki" style="font-size:15.73px;transform:scaleX(0.6955)">ファイル</span></span></span>
<div class="a" style="left:132px;top:52px;width:1px;height:19.5px;background:#dcdcdc"></div>
<svg class="a" style="left:149px;top:53.3px;" width="16" height="16" viewBox="0 0 16 16" fill="none" stroke="#333" stroke-width="1.4" stroke-linecap="round" stroke-linejoin="round"><path d="M5.5 1.5L1.5 5.5L5.5 9.5M1.8 5.5H10a4.6 4.6 0 0 1 0 9.2H6.5"/></svg>
<div class="a" style="left:171.2px;top:59.8px;width:0;height:0;border-left:4.1px solid transparent;border-right:4.1px solid transparent;border-top:5px solid #6e6e6e"></div>
<svg class="a" style="left:196.7px;top:53.3px;" width="16" height="16" viewBox="0 0 16 16" fill="none" stroke="#9a9a9a" stroke-width="1.3" stroke-linecap="round" stroke-linejoin="round"><path d="M10.5 1.5L14.5 5.5L10.5 9.5M14.6 5.5H6a4.6 4.6 0 0 0 0 9.2H9.5"/></svg>
<svg class="a" style="left:229.1px;top:52.8px;" width="19" height="18" viewBox="0 0 19 18" fill="none" stroke="#333" stroke-width="1.4" stroke-linecap="round" stroke-linejoin="round"><rect x="1" y="1" width="17" height="16" rx="2.2"/><path d="M6 9H13M9.5 5.5V12.5"/></svg>
<svg class="a" style="left:264.2px;top:53.5px;" width="20" height="16" viewBox="0 0 20 16" fill="none" stroke="#333" stroke-width="1.4" stroke-linecap="round" stroke-linejoin="round"><path d="M1.5 13.5V2.8Q1.5 1.2 3 1.2H7.2L9.2 3.8H15.5Q17 3.8 17 5.3V6.6M1.5 13.6L4.2 7.6Q4.6 6.6 5.8 6.6H17.6Q19 6.6 18.5 8L16.6 13.7Q16.2 14.8 15 14.8H2.8Q1.5 14.8 1.5 13.5Z"/></svg>
<svg class="a" style="left:299.5px;top:52.8px;" width="19" height="17" viewBox="0 0 19 17" fill="none" stroke="#333" stroke-width="1.4" stroke-linecap="round" stroke-linejoin="round"><path d="M2.5 1H16.5Q18 1 18 2.5V14.5Q18 16 16.5 16H2.5Q1 16 1 14.5V2.5Q1 1 2.5 1ZM5 1V7.2H14V1M11.2 3v2"/></svg>
<svg class="a" style="left:333.5px;top:52.7px;" width="21" height="18" viewBox="0 0 21 18" fill="none" stroke="#333" stroke-width="1.4" stroke-linecap="round" stroke-linejoin="round"><path d="M5.3 5.5V1.2H15.7V5.5M5.3 14H2.8Q1.2 14 1.2 12.4V7.2Q1.2 5.6 2.8 5.6H18.2Q19.8 5.6 19.8 7.2V12.4Q19.8 14 18.2 14H15.7M5.3 10.6H15.7V16.8H5.3ZM16.6 8.3h.1"/></svg>
<svg class="a" style="left:369.5px;top:53px;" width="18" height="17" viewBox="0 0 18 17" fill="none" stroke="#333" stroke-width="1.4" stroke-linecap="round" stroke-linejoin="round"><path d="M8.5 1.8H2.8Q1.2 1.8 1.2 3.4V14.4Q1.2 16 2.8 16H13.8Q15.4 16 15.4 14.4V10.2M12.3 1.2L16.6 4.3L12.3 7.4M16.4 4.3H12Q7.6 4.3 7.6 10"/></svg>
<div class="a" style="left:392.5px;top:59.8px;width:0;height:0;border-left:4.1px solid transparent;border-right:4.1px solid transparent;border-top:5px solid #6e6e6e"></div>
<svg class="a" style="left:415.5px;top:53px;" width="18" height="17" viewBox="0 0 18 17" fill="none" stroke="#333" stroke-width="1.4" stroke-linecap="round" stroke-linejoin="round"><path d="M9 1.8H2.8Q1.2 1.8 1.2 3.4V14.4Q1.2 16 2.8 16H13.8Q15.4 16 15.4 14.4V10.5M16.8 1.4Q11 2.2 8.8 9.6M8.4 5.2L8.8 9.8L13.2 8.4"/></svg>
<svg class="a" style="left:449.5px;top:57px;" width="10" height="10" viewBox="0 0 10 10" fill="none" stroke="#444" stroke-width="1.3" stroke-linecap="round" stroke-linejoin="round"><path d="M1 1.2H9M1.2 4.8L5 8.6L8.8 4.8"/></svg>
<span id="t30" class="t" style="left:621.40px;top:52.10px;font-size:14.5px;color:#12b67c;font-weight:700;transform:scaleX(1.0000);">開始</span>
<div class="a" style="left:618.3px;top:75.3px;width:34.4px;height:3.7px;background:#12b67c;border-radius:2px 2px 0 0"></div>
<span id="t31" class="t" style="left:701.80px;top:52.10px;font-size:14.3px;color:#222;font-weight:400;transform:scaleX(0.9866);">挿入</span>
<span id="t32" class="t" style="left:781.80px;top:53.10px;font-size:14.3px;color:#222;font-weight:400;transform:scaleX(1.0212);"><span class="ko" style="width:76.58px"><span class="ki" style="font-size:15.73px;transform:scaleX(0.6955)">ページスタイル</span></span></span>
<span id="t33" class="t" style="left:909.00px;top:51.90px;font-size:14.3px;color:#222;font-weight:400;transform:scaleX(1.0241);"><span class="ko" style="width:87.52px"><span class="ki" style="font-size:15.73px;transform:scaleX(0.6955)">アドバンスツール</span></span></span>
<span id="t34" class="t" style="left:1050.00px;top:52.10px;font-size:14.3px;color:#222;font-weight:400;transform:scaleX(1.0142);">表示</span>
<span id="t35" class="t" style="left:1130.00px;top:51.30px;font-size:14.3px;color:#222;font-weight:400;transform:scaleX(0.9988);">AI</span>
<svg class="a" style="left:1524.7px;top:51.8px;" width="20" height="20" viewBox="0 0 20 20" fill="none" stroke="#333" stroke-width="1.3" stroke-linecap="round" stroke-linejoin="round"><circle cx="10" cy="10" r="8.8"/><path d="M8 6.3L13.6 10L8 13.7Z"/></svg>
<span id="t36" class="t" style="left:1553.80px;top:51.00px;font-size:14.3px;color:#222;font-weight:400;transform:scaleX(0.9592);"><span class="ko" style="width:98.46px"><span class="ki" style="font-size:15.73px;transform:scaleX(0.6955)">プレゼンテーション</span></span></span>
<div class="a" style="left:1650.2px;top:59.8px;width:0;height:0;border-left:4.1px solid transparent;border-right:4.1px solid transparent;border-top:5px solid #6e6e6e"></div>
<svg class="a" style="left:1678.2px;top:52.5px;" width="19" height="19" viewBox="0 0 19 19" fill="none" stroke="#333" stroke-width="1.3" stroke-linecap="round" stroke-linejoin="round"><path d="M17.6 1.4L1.4 8.6L7 11.2L8.2 17.2L11 12.6M17.6 1.4L14.6 16.2L7 11.2L17.6 1.4"/></svg>
<span id="t37" class="t" style="left:1708.00px;top:50.50px;font-size:14.3px;color:#222;font-weight:400;transform:scaleX(0.9548);">投稿</span>
<svg class="a" style="left:1756.3px;top:52.5px;" width="19" height="19" viewBox="0 0 19 19" fill="none" stroke="#333" stroke-width="1.3" stroke-linecap="round" stroke-linejoin="round"><circle cx="14.8" cy="3.8" r="2.6"/><circle cx="3.8" cy="9.5" r="2.6"/><circle cx="14.8" cy="15.2" r="2.6"/><path d="M6.1 8.3L12.5 5M6.1 10.7L12.5 14"/></svg>
<span id="t38" class="t" style="left:1785.70px;top:50.50px;font-size:14.3px;color:#222;font-weight:400;transform:scaleX(0.9792);">共有</span>
<svg class="a" style="left:1833.2px;top:51.8px;" width="20" height="20" viewBox="0 0 20 20" fill="none" stroke="#444" stroke-width="1.3" stroke-linecap="round" stroke-linejoin="round"><circle cx="10" cy="10" r="8.8"/><path d="M7.3 7.8a2.7 2.7 0 1 1 3.9 2.4c-.9.5-1.2 1-1.2 2M10 14.6v.2"/></svg>
<div class="a" style="left:1856.6px;top:59.8px;width:0;height:0;border-left:4.1px solid transparent;border-right:4.1px solid transparent;border-top:5px solid #6e6e6e"></div>
<svg class="a" style="left:1886.3px;top:56.7px;" width="16" height="10" viewBox="0 0 16 10" fill="none" stroke="#333" stroke-width="1.4" stroke-linecap="round" stroke-linejoin="round"><path d="M1.2 8.6L8 1.6L14.8 8.6"/></svg>
<div class="a" style="left:0px;top:80px;width:1918px;height:114px;background:#f5f5f5"></div>
<div class="a" style="left:0px;top:194px;width:1918px;height:1px;background:#e4e4e4"></div>
<div class="a" style="left:15px;top:95px;width:367.5px;height:85.5px;background:#fff;border-radius:8px"></div>
<div class="a" style="left:22.7px;top:102.7px;width:88px;height:70px;background:#efefef;border-radius:6px"></div>
<svg class="a" style="left:56.7px;top:115.8px;" width="22" height="20" viewBox="0 0 22 20" fill="none" stroke="#444" stroke-width="1.7" stroke-linecap="round" stroke-linejoin="round"><ellipse cx="3.7" cy="3" rx="2.7" ry="2"/><ellipse cx="18.3" cy="3" rx="2.7" ry="2"/><ellipse cx="3.7" cy="17" rx="2.7" ry="2"/><ellipse cx="18.3" cy="17" rx="2.7" ry="2"/><path d="M5.6 4.6L8.6 8M16.4 4.6L13.4 8M5.6 15.4L8.6 12M16.4 15.4L13.4 12"/><ellipse cx="11" cy="10" rx="3.2" ry="2.3"/></svg>
<span id="t39" class="t" style="left:32.10px;top:147.10px;font-size:14.3px;color:#222;font-weight:400;transform:scaleX(0.9141);"><span class="ko" style="width:76.58px"><span class="ki" style="font-size:15.73px;transform:scaleX(0.6955)">マインドマップ</span></span></span>
<svg class="a" style="left:144px;top:117px;" width="22" height="18" viewBox="0 0 22 18" fill="none" stroke="#4a4a4a" stroke-width="1.8" stroke-linecap="round" stroke-linejoin="round"><path d="M1.2 1.5H4.6M7.4 1.5H20.4M4.2 9H7.6M10.2 9H20.4M1.2 16.5H4.6M7.4 16.5H20.4"/></svg>
<span id="t40" class="t" style="left:124.00px;top:145.90px;font-size:14.3px;color:#222;font-weight:400;transform:scaleX(0.9295);"><span class="ko" style="width:65.64px"><span class="ki" style="font-size:15.73px;transform:scaleX(0.6955)">アウトライン</span></span></span>
<svg class="a" style="left:230.7px;top:115px;" width="24" height="22" viewBox="0 0 24 22" fill="none" stroke="#333" stroke-width="1.5" stroke-linecap="round" stroke-linejoin="round"><rect x="1" y="1.5" width="5.4" height="12.5" rx="1.6"/><rect x="9.3" y="1.5" width="5.4" height="19" rx="1.6"/><rect x="17.6" y="1.5" width="5.4" height="15.5" rx="1.6"/><path d="M2.6 5.3H4.8M10.9 5.3H13.1M19.2 5.3H21.4"/></svg>
<span id="t41" class="t" style="left:221.10px;top:145.90px;font-size:14.3px;color:#222;font-weight:400;transform:scaleX(0.9677);"><span class="ko" style="width:43.76px"><span class="ki" style="font-size:15.73px;transform:scaleX(0.6955)">カンバン</span></span></span>
<svg class="a" style="left:319.7px;top:115px;" width="22" height="22" viewBox="0 0 22 22" fill="none" stroke="#444" stroke-width="1.7" stroke-linecap="round" stroke-linejoin="round"><rect x="1" y="1" width="20" height="20" rx="3"/><path d="M6.8 6.6V15.4" stroke-width="1.8"/><path d="M10.4 8H16.6M10.4 14H16.6" stroke-width="3.2" stroke-linecap="butt"/></svg>
<span id="t42" class="t" style="left:309.00px;top:146.10px;font-size:14.3px;color:#222;font-weight:400;transform:scaleX(0.9852);"><span class="ko" style="width:43.76px"><span class="ki" style="font-size:15.73px;transform:scaleX(0.6955)">スライド</span></span></span>
<svg class="a" style="left:710px;top:109px;" width="22" height="23" viewBox="0 0 22 23" fill="none"><g fill="none" stroke-linecap="round" stroke-linejoin="round"><path d="M7.2 5H4.2Q2.3 5 2.3 6.9V19Q2.3 20.9 4.2 20.9H18Q19.9 20.9 19.9 19V6.9Q19.9 5 18 5H15" stroke="#3a3a3a" stroke-width="1.9"/><rect x="7.4" y="2.3" width="7.6" height="5" rx="1.8" stroke="#3a3a3a" stroke-width="1.8"/><path d="M7 12.3H15.2M7 16H15.2" stroke="#8a8a8a" stroke-width="1.6"/></g></svg>
<span id="t43" class="t" style="left:696.80px;top:139.10px;font-size:14.3px;color:#222;font-weight:400;transform:scaleX(0.9007);">貼<span class="ko" style="width:12.58px"><span class="ki" style="transform:scaleX(0.8800)">り</span></span>付<span class="ko" style="width:12.58px"><span class="ki" style="transform:scaleX(0.8800)">け</span></span></span>
<div class="a" style="left:716.1px;top:167.7px;width:0;height:0;border-left:4.2px solid transparent;border-right:4.2px solid transparent;border-top:5.2px solid #6e6e6e"></div>
<svg class="a" style="left:788px;top:109px;" width="22" height="22" viewBox="0 0 22 22" fill="none"><g fill="none" stroke="#8e8e8e" stroke-width="1.7" stroke-linecap="round"><circle cx="4.9" cy="15.3" r="2.9"/><circle cx="16.9" cy="15.3" r="2.9"/><path d="M3.4 2.5L15.2 13M18.4 2.5L6.6 13"/></g></svg>
<span id="t44" class="t" style="left:776.10px;top:138.30px;font-size:14.3px;color:#ababab;font-weight:400;transform:scaleX(0.8947);">切<span class="ko" style="width:12.58px"><span class="ki" style="transform:scaleX(0.8800)">り</span></span>取<span class="ko" style="width:12.58px"><span class="ki" style="transform:scaleX(0.8800)">り</span></span></span>
<svg class="a" style="left:866px;top:109px;" width="23" height="22" viewBox="0 0 23 22" fill="none"><g fill="none" stroke="#8e8e8e" stroke-width="1.7" stroke-linejoin="round" stroke-linecap="round"><rect x="2" y="7.5" width="13.2" height="12.4" rx="0.8"/><path d="M6.8 4.4V3.2Q6.8 2.3 7.7 2.3H19.4Q20.5 2.3 20.5 3.4V14.6Q20.5 15.6 19.5 15.6H18.4"/></g></svg>
<span id="t45" class="t" style="left:861.20px;top:138.90px;font-size:14.3px;color:#ababab;font-weight:400;transform:scaleX(0.9043);"><span class="ko" style="width:32.82px"><span class="ki" style="font-size:15.73px;transform:scaleX(0.6955)">コピー</span></span></span>
<svg class="a" style="left:973px;top:108px;" width="24" height="23" viewBox="0 0 24 23" fill="none"><g stroke="#8e8e8e" stroke-width="1.7" stroke-linejoin="round" stroke-linecap="round"><path d="M2.6 10.4L10.4 5.6L20.6 10.2L13.2 20.4Z" fill="none"/><path d="M10.4 5.6L13 3.8L21.6 7.6L20.6 10.2Z" fill="#8e8e8e"/><path d="M17.2 5.4L20.6 2.4" stroke-width="3"/></g></svg>
<span id="t46" class="t" style="left:951.90px;top:139.10px;font-size:14.3px;color:#ababab;font-weight:400;transform:scaleX(0.9193);">書式<span class="ko" style="width:12.58px"><span class="ki" style="transform:scaleX(0.8800)">の</span></span><span class="ko" style="width:32.82px"><span class="ki" style="font-size:15.73px;transform:scaleX(0.6955)">コピー</span></span></span>
<span id="t47" class="t" style="left:962.10px;top:158.10px;font-size:14.3px;color:#ababab;font-weight:400;transform:scaleX(0.8912);">貼<span class="ko" style="width:12.58px"><span class="ki" style="transform:scaleX(0.8800)">り</span></span>付<span class="ko" style="width:12.58px"><span class="ki" style="transform:scaleX(0.8800)">け</span></span></span>
<div class="a" style="left:1060px;top:105px;width:1px;height:64.5px;background:#e0e0e0"></div>
<svg class="a" style="left:1092px;top:108px;" width="25" height="25" viewBox="0 0 25 25" fill="none"><g fill="none" stroke="#444" stroke-width="1.9" stroke-linejoin="round" stroke-linecap="round"><rect x="7.2" y="2.9" width="9" height="5.2" rx="0.6"/><path d="M7.2 5.5H3.4Q2.6 5.5 2.6 6.3V17.6Q2.6 18.4 3.4 18.4H7"/><rect x="7.2" y="13.2" width="15" height="9.8" rx="0.6"/></g></svg>
<span id="t48" class="t" style="left:1079.90px;top:140.10px;font-size:14.3px;color:#222;font-weight:400;transform:scaleX(0.9685);"><span class="ko" style="width:43.76px"><span class="ki" style="font-size:15.73px;transform:scaleX(0.6955)">トピック</span></span></span>
<div class="a" style="left:1099px;top:167.7px;width:0;height:0;border-left:4.2px solid transparent;border-right:4.2px solid transparent;border-top:5.2px solid #6e6e6e"></div>
<div class="a" style="left:1146.5px;top:105px;width:1px;height:64.5px;background:#e0e0e0"></div>
<svg class="a" style="left:1178px;top:108px;" width="27" height="24" viewBox="0 0 27 24" fill="none"><g fill="none" stroke="#444" stroke-width="1.9" stroke-linecap="round" stroke-linejoin="round"><path d="M4.2 5.8H13Q16.2 5.8 16.2 8.7T13 11.6H10.4Q7.4 11.6 7.4 14.6T10.4 17.6H21"/></g><circle cx="4" cy="5.8" r="2.3" fill="#444"/><path d="M20.4 14.2L24.8 17.6L20.4 21Z" fill="#444"/></svg>
<span id="t49" class="t" style="left:1176.90px;top:139.10px;font-size:14.3px;color:#222;font-weight:400;transform:scaleX(0.9093);">挿入</span>
<div class="a" style="left:1185.8px;top:167.7px;width:0;height:0;border-left:4.2px solid transparent;border-right:4.2px solid transparent;border-top:5.2px solid #6e6e6e"></div>
<div class="a" style="left:1233px;top:105px;width:1px;height:64.5px;background:#e0e0e0"></div>
<svg class="a" style="left:1849.3px;top:105.7px;" width="31" height="31" viewBox="0 0 31 31" fill="none"><circle cx="15.5" cy="15.5" r="15.15" fill="#06b681"/><path d="M15.4 8.4H10.2Q8.2 8.4 8.2 10.4V22Q8.2 24 10.2 24H21.8Q23.8 24 23.8 22V17.8M20.8 7.4L25 11.1L20.8 14.8M24.8 11.1H22Q15.2 11.6 15 18.2" stroke="#fff" stroke-opacity=".92" stroke-width="1.35" stroke-linecap="round" stroke-linejoin="round"/></svg>
<span id="t50" class="t" style="left:1833.00px;top:141.10px;font-size:14.3px;color:#222;font-weight:400;transform:scaleX(0.9774);"><span class="ko" style="width:65.64px"><span class="ki" style="font-size:15.73px;transform:scaleX(0.6955)">エクスポート</span></span></span>
</header>
<section id="floating">
<div class="a" style="left:1384.5px;top:209px;width:108.5px;height:49.5px;background:#fff;border-radius:7px;box-shadow:0 0 0 1px #f0ede4"></div>
<svg class="a" style="left:1400px;top:224px;" width="18" height="20" viewBox="0 0 18 20" fill="none"><path d="M2.6 0H12.6L18 5.4V17.4Q18 20 15.4 20H2.6Q0 20 0 17.4V2.6Q0 0 2.6 0Z" fill="#1296fb"/><path d="M4 6.4H10.4M4 10H7" stroke="#fff" stroke-width="1.5" stroke-linecap="round"/><path d="M14.6 8.2L10 16.4" stroke="#fff" stroke-width="1.8" stroke-linecap="round"/></svg>
<span id="t1" class="t" style="left:1423.00px;top:222.70px;font-size:14.3px;color:#222;font-weight:400;transform:scaleX(0.9464);"><span class="ko" style="width:32.82px"><span class="ki" style="font-size:15.73px;transform:scaleX(0.6955)">ノート</span></span></span>
<svg class="a" style="left:1463.9px;top:226.5px;" width="9" height="15" viewBox="0 0 9 15" fill="none" stroke="#444" stroke-width="1.4" stroke-linecap="round" stroke-linejoin="round"><path d="M7.6 1L1.4 7.5L7.6 14"/></svg>
<div class="a" style="left:70.2px;top:1016.2px;width:44.6px;height:44.6px;background:#fff;border-radius:50%;box-shadow:0 3px 8px rgba(130,110,60,.30),0 0 0 0.6px rgba(200,200,215,.55)"></div>
<svg class="a" style="left:78px;top:1027px;" width="30" height="23" viewBox="0 0 30 23" fill="none"><defs><linearGradient id="fm1" x1="0" y1="0" x2="0" y2="1"><stop offset="0" stop-color="#63e4f2"/><stop offset="0.5" stop-color="#2fdccb"/><stop offset="1" stop-color="#0cc89c"/></linearGradient><linearGradient id="fm2" x1="0" y1="0" x2="0" y2="1"><stop offset="0" stop-color="#ff35b6"/><stop offset="0.55" stop-color="#ff7a98"/><stop offset="1" stop-color="#ffb98a"/></linearGradient><linearGradient id="fm3" x1="0" y1="0" x2="0" y2="1"><stop offset="0" stop-color="#2b66cf"/><stop offset="0.6" stop-color="#2f7ed0"/><stop offset="0.8" stop-color="#22d6c2"/><stop offset="1" stop-color="#22d6c2"/></linearGradient></defs><path d="M9.4 2.1H16.7L9.7 20.9H2.1Z" fill="url(#fm1)"/><path d="M13.6 2.1H16.7L23.8 20.9H19.6L13 8Z" fill="url(#fm3)"/><path d="M20 2.1H27.1L20 20.9H13Z" fill="url(#fm2)"/></svg>
<div class="a" style="left:1519.5px;top:195px;width:30.5px;height:63.5px;background:#f5f5f5;border-radius:7px 0 0 7px;box-shadow:0 0 0 1px #e4e4e4"></div>
<svg class="a" style="left:1529.6px;top:218.3px;" width="10" height="17" viewBox="0 0 10 17" fill="none" stroke="#444" stroke-width="1.5" stroke-linecap="round" stroke-linejoin="round"><path d="M1.2 1.2L8.6 8.5L1.2 15.8"/></svg>

</section>
<aside id="format-panel">

<div class="a" style="left:1549px;top:195px;width:369px;height:904px;background:#f5f5f5;border-left:1px solid #e1e1e1;box-sizing:border-box"></div>
<div class="a" style="left:1549px;top:244px;width:369px;height:1px;background:#dedede"></div>
<div class="a" style="left:1549px;top:195px;width:74px;height:47.3px;background:#dcefe9"></div>
<div class="a" style="left:1549px;top:242.3px;width:74px;height:2.7px;background:#12b67c"></div>
<svg class="a" style="left:1573.8px;top:205.9px;" width="26" height="26" viewBox="0 0 26 26" fill="none" stroke="#12b67c" stroke-width="2.2" stroke-linecap="round" stroke-linejoin="round"><rect x="2.2" y="2.3" width="21.6" height="21.4" rx="5.6"/><rect x="8.4" y="10.3" width="9.4" height="5.4" rx="1.2"/></svg>
<svg class="a" style="left:1645.3px;top:205px;" width="30" height="30" viewBox="0 0 30 30" fill="none" stroke="#111" stroke-width="2.2" stroke-linecap="round" stroke-linejoin="round"><path d="M15 3.6Q16.4 12.6 26.6 15Q16.4 17.4 15 26.6Q13.6 17.4 3.4 15Q13.6 12.6 15 3.6Z"/><path d="M4.6 0.8Q5 3.4 7.8 3.9Q5 4.4 4.6 7Q4.2 4.4 1.4 3.9Q4.2 3.4 4.6 0.8Z" fill="#111" stroke-width=".9"/><path d="M25.4 22.4Q25.8 25 28.6 25.5Q25.8 26 25.4 28.6Q25 26 22.2 25.5Q25 25 25.4 22.4Z" fill="#111" stroke-width=".9"/></svg>
<svg class="a" style="left:1721.1px;top:206.5px;" width="26" height="28" viewBox="0 0 26 28" fill="none" stroke="#111" stroke-width="2.2" stroke-linecap="round" stroke-linejoin="round"><path d="M13 26.4Q2.1 20.2 2.1 12A10.9 10.9 0 0 1 23.9 12Q23.9 20.2 13 26.4Z"/><path d="M9 13.6Q13 16.8 17 13.6"/><path d="M9.7 8.6v.7M16.3 8.6v.7" stroke-width="2.4"/></svg>
<svg class="a" style="left:1794.4px;top:206.5px;" width="27" height="27" viewBox="0 0 27 27" fill="none" stroke="#111" stroke-width="2.2" stroke-linecap="round" stroke-linejoin="round"><path d="M13.5 1.7L14.4 1.8L15.3 2.3L16.0 3.0L16.6 3.9L17.1 4.8L17.5 5.6L17.9 6.3L18.4 6.7L19.0 7.0L19.8 7.2L20.7 7.4L21.7 7.6L22.7 7.9L23.6 8.4L24.3 9.0L24.8 9.8L24.9 10.8L24.7 11.7L24.2 12.7L23.6 13.5L22.9 14.2L22.3 14.9L21.7 15.5L21.4 16.1L21.3 16.7L21.4 17.5L21.5 18.4L21.7 19.4L21.7 20.5L21.5 21.5L21.1 22.4L20.5 23.1L19.6 23.5L18.6 23.6L17.6 23.4L16.6 23.1L15.7 22.7L14.9 22.3L14.2 22.0L13.5 21.9L12.8 22.0L12.1 22.3L11.3 22.7L10.4 23.1L9.4 23.4L8.4 23.6L7.4 23.5L6.5 23.1L5.9 22.4L5.5 21.5L5.3 20.5L5.3 19.4L5.5 18.4L5.6 17.5L5.7 16.7L5.6 16.1L5.3 15.5L4.7 14.9L4.1 14.2L3.4 13.5L2.8 12.7L2.3 11.7L2.1 10.8L2.2 9.8L2.7 9.0L3.4 8.4L4.3 7.9L5.3 7.6L6.3 7.4L7.2 7.2L8.0 7.0L8.6 6.7L9.1 6.3L9.5 5.6L9.9 4.8L10.4 3.9L11.0 3.0L11.7 2.3L12.6 1.8Z"/><circle cx="13.5" cy="13.6" r="3.5"/></svg>
<svg class="a" style="left:1868.3px;top:206.5px;" width="27" height="27" viewBox="0 0 27 27" fill="none" stroke="#111" stroke-width="2.3" stroke-linecap="round" stroke-linejoin="round"><path d="M13.5 2.2A11.3 11.3 0 1 0 13.5 24.8"/><path d="M13.5 2.2A11.3 11.3 0 0 1 24.8 13.5A11.3 11.3 0 0 1 13.5 24.8" stroke-dasharray="0.1 4.4" stroke-dashoffset="-2.6"/><path d="M13.5 7V13.6L17.4 16"/></svg>
<div class="a" style="left:1907.9px;top:245.5px;width:10.6px;height:675.9px;background:#cfcfd2;border-radius:5.3px"></div>
<span id="t2" class="t" style="left:1566.00px;top:264.50px;font-size:15.2px;color:#222;font-weight:700;transform:scaleX(1.2076);"><span class="ko" style="width:58.14px"><span class="ki" style="font-size:16.72px;transform:scaleX(0.6955)">レイアウト</span></span></span>
<span id="t3" class="t" style="left:1566.00px;top:321.00px;font-size:14.3px;color:#444;font-weight:400;transform:scaleX(1.0658);"><span class="ko" style="width:54.70px"><span class="ki" style="font-size:15.73px;transform:scaleX(0.6955)">レイアウト</span></span></span>
<div class="a" style="left:1759.5px;top:301px;width:109.2px;height:59.6px;background:#fff;border-radius:7px;border:1px solid #eaeaea;box-sizing:border-box"></div>
<svg class="a" style="left:1776px;top:312px;" width="52" height="38" viewBox="0 0 52 38" fill="none"><defs><linearGradient id="og" x1="0" y1="0" x2="0" y2="1"><stop offset="0" stop-color="#ff6514"/><stop offset="1" stop-color="#ff8c42"/></linearGradient></defs><path d="M13.2 6.4H17Q20.4 6.4 20.4 9.8V12M13.2 31.4H17Q20.4 31.4 20.4 28V26M39 6.4H35Q31.6 6.4 31.6 9.8V12M39 31.4H35Q31.6 31.4 31.6 28V26" stroke="#d6d6d6" stroke-width="1.2"/><g fill="#cecece"><rect x="2.8" y="3.1" width="10.4" height="6.7" rx="2.6"/><rect x="2.8" y="28.1" width="10.4" height="6.7" rx="2.6"/><rect x="39" y="3.1" width="10.4" height="6.7" rx="2.6"/><rect x="39" y="28.1" width="10.4" height="6.7" rx="2.6"/></g><rect x="17" y="12.2" width="18.4" height="13.8" rx="3.2" fill="url(#og)"/><path d="M8 24.6V18M44 14.8V21.4" stroke="#8a8a8a" stroke-width="1.5"/><path d="M4.8 18.8L8 14.6L11.2 18.8ZM40.8 20.6L44 24.8L47.2 20.6Z" fill="#8a8a8a"/></svg>
<svg class="a" style="left:1845.6px;top:328.2px;" width="12" height="8" viewBox="0 0 12 8" fill="none" stroke="#303030" stroke-width="1.8" stroke-linecap="round" stroke-linejoin="round"><path d="M2.1 1.9L6 5.7L9.9 1.9"/></svg>
<span id="t4" class="t" style="left:1565.00px;top:383.00px;font-size:14.3px;color:#444;font-weight:400;transform:scaleX(1.0263);"><span class="ko" style="width:43.76px"><span class="ki" style="font-size:15.73px;transform:scaleX(0.6955)">トピック</span></span><span class="ko" style="width:12.58px"><span class="ki" style="transform:scaleX(0.8800)">の</span></span>間隔</span>
<span id="t5" class="t" style="left:1568.00px;top:429.80px;font-size:14.3px;color:#444;font-weight:400;transform:scaleX(1.0142);">水平</span>
<div class="a" style="left:1605.3px;top:426.3px;width:69.3px;height:29.2px;background:#fff;border-radius:7px;border:1px solid #eaeaea;box-sizing:border-box"></div>
<span id="t6" class="t" style="left:1615.50px;top:429.40px;font-size:15.4px;color:#222;font-weight:400;transform:scaleX(0.9168);">30</span>
<div class="a" style="left:1657px;top:431px;width:0.8px;height:20px;background:#ececec"></div>
<div class="a" style="left:1662.6px;top:432.2px;width:0;height:0;border-left:3.6px solid transparent;border-right:3.6px solid transparent;border-bottom:4.8px solid #222"></div>
<div class="a" style="left:1662.6px;top:445px;width:0;height:0;border-left:3.6px solid transparent;border-right:3.6px solid transparent;border-top:4.8px solid #222"></div>
<div class="a" style="left:1799.3px;top:426.3px;width:69.3px;height:29.2px;background:#fff;border-radius:7px;border:1px solid #eaeaea;box-sizing:border-box"></div>
<span id="t7" class="t" style="left:1809.50px;top:429.40px;font-size:15.4px;color:#222;font-weight:400;transform:scaleX(0.9168);">30</span>
<div class="a" style="left:1851px;top:431px;width:0.8px;height:20px;background:#ececec"></div>
<div class="a" style="left:1856.6px;top:432.2px;width:0;height:0;border-left:3.6px solid transparent;border-right:3.6px solid transparent;border-bottom:4.8px solid #222"></div>
<div class="a" style="left:1856.6px;top:445px;width:0;height:0;border-left:3.6px solid transparent;border-right:3.6px solid transparent;border-top:4.8px solid #222"></div>
<span id="t8" class="t" style="left:1762.80px;top:429.80px;font-size:14.3px;color:#444;font-weight:400;transform:scaleX(1.0142);">垂直</span>
<div class="a" style="left:1569.2px;top:478.4px;width:17px;height:17px;background:#fff;border:1px solid #cfcfcf;border-radius:3.5px;box-sizing:border-box"></div>
<span id="t9" class="t" style="left:1594.00px;top:476.00px;font-size:14.3px;color:#333;font-weight:400;transform:scaleX(1.0202);"><span class="ko" style="width:43.76px"><span class="ki" style="font-size:15.73px;transform:scaleX(0.6955)">ブランチ</span></span><span class="ko" style="width:12.58px"><span class="ki" style="transform:scaleX(0.8800)">の</span></span>自由配置</span>
<div class="a" style="left:1569.2px;top:517.6px;width:17px;height:17px;background:#fff;border:1px solid #cfcfcf;border-radius:3.5px;box-sizing:border-box"></div>
<span id="t10" class="t" style="left:1595.50px;top:514.50px;font-size:14.3px;color:#333;font-weight:400;transform:scaleX(0.9936);">兄弟<span class="ko" style="width:43.76px"><span class="ki" style="font-size:15.73px;transform:scaleX(0.6955)">トピック</span></span><span class="ko" style="width:25.17px"><span class="ki" style="transform:scaleX(0.8800)">との</span></span>位置合<span class="ko" style="width:25.17px"><span class="ki" style="transform:scaleX(0.8800)">わせ</span></span></span>
<div class="a" style="left:1568.2px;top:558.5px;width:17px;height:17px;background:#fff;border:1px solid #cfcfcf;border-radius:3.5px;box-sizing:border-box"></div>
<span id="t11" class="t" style="left:1594.00px;top:556.10px;font-size:14.3px;color:#333;font-weight:400;transform:scaleX(0.9968);"><span class="ko" style="width:32.82px"><span class="ki" style="font-size:15.73px;transform:scaleX(0.6955)">テーマ</span></span><span class="ko" style="width:12.58px"><span class="ki" style="transform:scaleX(0.8800)">の</span></span>自動<span class="ko" style="width:43.76px"><span class="ki" style="font-size:15.73px;transform:scaleX(0.6955)">グループ</span></span>化<span class="ko" style="width:12.58px"><span class="ki" style="transform:scaleX(0.8800)">を</span></span>無効<span class="ko" style="width:37.75px"><span class="ki" style="transform:scaleX(0.8800)">にする</span></span></span>
<div class="a" style="left:1568.2px;top:596.6px;width:17px;height:17px;background:#fff;border:1px solid #cfcfcf;border-radius:3.5px;box-sizing:border-box"></div>
<span id="t12" class="t" style="left:1591.00px;top:594.90px;font-size:14.3px;color:#333;font-weight:400;transform:scaleX(0.9864);"><span class="ko" style="width:43.76px"><span class="ki" style="font-size:15.73px;transform:scaleX(0.6955)">トピック</span></span><span class="ko" style="width:12.58px"><span class="ki" style="transform:scaleX(0.8800)">の</span></span><span class="ko" style="width:76.58px"><span class="ki" style="font-size:15.73px;transform:scaleX(0.6955)">オーバーラップ</span></span></span>
<div class="a" style="left:1568px;top:635px;width:320.7px;height:1px;background:#dfdfdf"></div>
<span id="t13" class="t" style="left:1568.00px;top:652.90px;font-size:15.2px;color:#222;font-weight:700;transform:scaleX(1.1129);"><span class="ko" style="width:34.88px"><span class="ki" style="font-size:16.72px;transform:scaleX(0.6955)">テーマ</span></span></span>
<span id="t14" class="t" style="left:1568.00px;top:710.00px;font-size:14.3px;color:#444;font-weight:400;transform:scaleX(0.9752);"><span class="ko" style="width:32.82px"><span class="ki" style="font-size:15.73px;transform:scaleX(0.6955)">テーマ</span></span></span>
<div class="a" style="left:1759.5px;top:691px;width:109.2px;height:59.5px;background:#fff;border-radius:7px;border:1px solid #eaeaea;box-sizing:border-box"></div>
<svg class="a" style="left:1771px;top:702px;" width="70" height="37" viewBox="0 0 70 37" fill="none"><defs><linearGradient id="tg" x1="0" y1="0" x2="1" y2="0.4"><stop offset="0" stop-color="#ff8a22"/><stop offset="1" stop-color="#fb4a1c"/></linearGradient></defs><rect width="70" height="37" fill="#fff8e6"/><rect x="11" y="13.6" width="15.4" height="9.4" rx="4.7" fill="url(#tg)"/><path d="M26.6 18.2C30 18.2 30.5 8.2 35 8.2M26.6 18.2H35M26.6 18.2C30 18.2 30.5 28.2 35 28.2" stroke="#3a3f47" stroke-width="1.1" fill="none"/><rect x="35" y="5.6" width="12.2" height="5.4" rx="2.4" fill="#fdbb18"/><rect x="35" y="15.6" width="12.2" height="5.4" rx="2.4" fill="#fdbb18"/><rect x="35" y="25.6" width="12.2" height="5.4" rx="2.4" fill="#fdbb18"/><path d="M48.4 6.2Q49.4 6.2 49.4 8V11.6Q49.4 13 50.4 13Q49.4 13 49.4 14.4V18.4Q49.4 20 48.4 20" stroke="#f56a3a" stroke-width="0.8" fill="none"/><rect x="51.8" y="11" width="7.4" height="3.8" rx="1.8" fill="#fbdfce"/><rect x="34.6" y="23.2" width="24.2" height="8.6" rx="2.4" fill="#fde6d4" fill-opacity=".6" stroke="#f5795a" stroke-width="0.7" stroke-dasharray="1.4 0.9"/><rect x="35" y="25.6" width="12.2" height="5.4" rx="2.4" fill="#fdbb18"/><path d="M47.4 28.2L51.6 26.4H57M47.4 28.2L51.6 30.2H57" stroke="#6a737c" stroke-width="0.7" fill="none"/></svg>
<svg class="a" style="left:1845.6px;top:718px;" width="12" height="8" viewBox="0 0 12 8" fill="none" stroke="#303030" stroke-width="1.8" stroke-linecap="round" stroke-linejoin="round"><path d="M2.1 1.9L6 5.7L9.9 1.9"/></svg>
<span id="t15" class="t" style="left:1568.60px;top:775.00px;font-size:14.3px;color:#444;font-weight:400;transform:scaleX(0.9813);">虹<span class="ko" style="width:12.58px"><span class="ki" style="transform:scaleX(0.8800)">の</span></span>色</span>
<div class="a" style="left:1709.4px;top:766.4px;width:37px;height:39.1px;background:#f6f6f6;border:1.5px solid #dcdedd;border-radius:7px;box-sizing:border-box"></div>
<svg class="a" style="left:1716px;top:774.1px;" width="24.8" height="24.6" viewBox="0 0 24.8 24.6" fill="none"><rect x="1" y="1" width="22.8" height="22.6" rx="2.8" fill="#fff" stroke="#333" stroke-width="2"/><rect x="3.4" y="3.4" width="8.2" height="4.7" fill="#06c3a1"/><rect x="13.2" y="3.4" width="8.2" height="4.7" fill="#06c3a1"/><rect x="3.4" y="10" width="8.2" height="4.7" fill="#06c3a1"/><rect x="13.2" y="10" width="8.2" height="4.7" fill="#06c3a1"/><rect x="3.4" y="16.6" width="8.2" height="4.7" fill="#06c3a1"/><rect x="13.2" y="16.6" width="8.2" height="4.7" fill="#06c3a1"/></svg>
<svg class="a" style="left:1754px;top:774.1px;" width="24.8" height="24.6" viewBox="0 0 24.8 24.6" fill="none"><rect x="1" y="1" width="22.8" height="22.6" rx="2.8" fill="#fff" stroke="#333" stroke-width="2"/><rect x="3.4" y="3.4" width="8.2" height="4.7" fill="#5fd0a6"/><rect x="13.2" y="3.4" width="8.2" height="4.7" fill="#8a4fe6"/><rect x="3.4" y="10" width="8.2" height="4.7" fill="#ffc73c"/><rect x="13.2" y="10" width="8.2" height="4.7" fill="#4fa8f6"/><rect x="3.4" y="16.6" width="8.2" height="4.7" fill="#ff7242"/><rect x="13.2" y="16.6" width="8.2" height="4.7" fill="#a184d2"/></svg>
<svg class="a" style="left:1792px;top:774.1px;" width="24.8" height="24.6" viewBox="0 0 24.8 24.6" fill="none"><rect x="1" y="1" width="22.8" height="22.6" rx="2.8" fill="#fff" stroke="#333" stroke-width="2"/><rect x="3.4" y="3.4" width="8.2" height="4.7" fill="#06c3a1"/><rect x="13.2" y="3.4" width="8.2" height="4.7" fill="#06c3a1"/><rect x="3.4" y="10" width="8.2" height="4.7" fill="#ff7a1c"/><rect x="13.2" y="10" width="8.2" height="4.7" fill="#ff7a1c"/><rect x="3.4" y="16.6" width="8.2" height="4.7" fill="#4f95f8"/><rect x="13.2" y="16.6" width="8.2" height="4.7" fill="#4f95f8"/></svg>
<svg class="a" style="left:1830px;top:774.1px;" width="24.8" height="24.6" viewBox="0 0 24.8 24.6" fill="none"><rect x="1" y="1" width="22.8" height="22.6" rx="2.8" fill="#fff" stroke="#333" stroke-width="2"/><rect x="3.4" y="3.4" width="8.2" height="4.7" fill="#06c3a1"/><rect x="13.2" y="3.4" width="8.2" height="4.7" fill="#4f95f8"/><rect x="3.4" y="10" width="8.2" height="4.7" fill="#4f95f8"/><rect x="13.2" y="10" width="8.2" height="4.7" fill="#06c3a1"/><rect x="3.4" y="16.6" width="8.2" height="4.7" fill="#06c3a1"/><rect x="13.2" y="16.6" width="8.2" height="4.7" fill="#4f95f8"/></svg>
<span id="t16" class="t" style="left:1568.60px;top:828.00px;font-size:14.3px;color:#444;font-weight:400;transform:scaleX(0.9617);"><span class="ko" style="width:32.82px"><span class="ki" style="font-size:15.73px;transform:scaleX(0.6955)">テーマ</span></span><span class="ko" style="width:12.58px"><span class="ki" style="transform:scaleX(0.8800)">の</span></span>色</span>
<div class="a" style="left:1709px;top:821.2px;width:159.7px;height:34.4px;background:#fff;border-radius:7px;border:1px solid #eaeaea;box-sizing:border-box"></div>
<div class="a" style="left:1721.6px;top:832.8px;width:10.44px;height:10.2px;background:#00ae57"></div>
<div class="a" style="left:1732.84px;top:832.8px;width:10.44px;height:10.2px;background:#6a00e0"></div>
<div class="a" style="left:1744.08px;top:832.8px;width:10.44px;height:10.2px;background:#2fe0d2"></div>
<div class="a" style="left:1755.32px;top:832.8px;width:10.44px;height:10.2px;background:#0078ff"></div>
<div class="a" style="left:1766.56px;top:832.8px;width:10.44px;height:10.2px;background:#ffc010"></div>
<div class="a" style="left:1777.8px;top:832.8px;width:10.44px;height:10.2px;background:#ff3b1d"></div>
<div class="a" style="left:1789.04px;top:832.8px;width:10.44px;height:10.2px;background:#ff5468"></div>
<div class="a" style="left:1800.28px;top:832.8px;width:10.44px;height:10.2px;background:#ff6428"></div>
<div class="a" style="left:1811.52px;top:832.8px;width:10.44px;height:10.2px;background:#4258f0"></div>
<div class="a" style="left:1822.76px;top:832.8px;width:10.44px;height:10.2px;background:#7be6ff"></div>
<svg class="a" style="left:1845.6px;top:835.1px;" width="12" height="8" viewBox="0 0 12 8" fill="none" stroke="#303030" stroke-width="1.8" stroke-linecap="round" stroke-linejoin="round"><path d="M2.1 1.9L6 5.7L9.9 1.9"/></svg>
<span id="t17" class="t" style="left:1568.80px;top:877.80px;font-size:14.3px;color:#444;font-weight:400;transform:scaleX(0.9571);"><span class="ko" style="width:32.82px"><span class="ki" style="font-size:15.73px;transform:scaleX(0.6955)">テーマ</span></span><span class="ko" style="width:12.58px"><span class="ki" style="transform:scaleX(0.8800)">の</span></span><span class="ko" style="width:43.76px"><span class="ki" style="font-size:15.73px;transform:scaleX(0.6955)">フォント</span></span></span>
<div class="a" style="left:1709px;top:870.8px;width:159.7px;height:35px;background:#fff;border-radius:7px;border:1px solid #eaeaea;box-sizing:border-box"></div>
<span id="t18" class="t" style="left:1717.00px;top:877.00px;font-size:8.5px;color:#666;font-weight:400;font-family:'Liberation Serif','Noto Serif CJK JP','Noto Serif CJK SC',serif;transform:scaleX(1.0079);">Aa</span>
<div class="a" style="left:1734.4px;top:876px;width:99.6px;height:26px;overflow:hidden"><span id="t19" class="t" style="left:0.00px;top:0.60px;font-size:14.8px;color:#222;font-weight:400;transform:scaleX(0.9439);">MS Mincho (Big5)</span></div>
<svg class="a" style="left:1845.6px;top:885px;" width="12" height="8" viewBox="0 0 12 8" fill="none" stroke="#303030" stroke-width="1.8" stroke-linecap="round" stroke-linejoin="round"><path d="M2.1 1.9L6 5.7L9.9 1.9"/></svg>
<span id="t20" class="t" style="left:1568.60px;top:940.00px;font-size:14.3px;color:#444;font-weight:400;transform:scaleX(0.9897);">手描<span class="ko" style="width:12.58px"><span class="ki" style="transform:scaleX(0.8800)">き</span></span>風</span>
<div class="a" style="left:1759.5px;top:921.3px;width:109.2px;height:59.7px;background:#fff;border-radius:7px;border:1px solid #eaeaea;box-sizing:border-box"></div>
<div class="a" style="left:1771px;top:932.6px;width:69.4px;height:36.4px;background:#fff;border:1px solid #efefef;border-radius:5px;box-sizing:border-box"></div>
<div class="a" style="left:1782.8px;top:939.4px;width:46px;height:22.6px;background:#222;border-radius:3.5px"></div>
<svg class="a" style="left:1845.6px;top:948px;" width="12" height="8" viewBox="0 0 12 8" fill="none" stroke="#303030" stroke-width="1.8" stroke-linecap="round" stroke-linejoin="round"><path d="M2.1 1.9L6 5.7L9.9 1.9"/></svg>
<div class="a" style="left:1568px;top:995.6px;width:320.7px;height:1px;background:#dfdfdf"></div>
<span id="t21" class="t" style="left:1568.60px;top:1013.00px;font-size:15.2px;color:#222;font-weight:700;transform:scaleX(1.1325);">背景</span>
<div class="a" style="left:1568.2px;top:1057px;width:300.5px;height:63px;background:#fff;border-radius:9px;border:1px solid #eaeaea;box-sizing:border-box"></div>
<div class="a" style="left:1647.6px;top:1063px;width:67.9px;height:57px;background:#e4f7f1;border-radius:6px"></div>
<svg class="a" style="left:1598.3px;top:1068.9px;" width="21" height="21" viewBox="0 0 21 21" fill="none" stroke="#222" stroke-width="1.6" stroke-linecap="round" stroke-linejoin="round"><rect x="1.2" y="1.2" width="18.6" height="18.6" rx="3.2"/><path d="M2.8 18.2L18.2 2.8"/></svg>
<svg class="a" style="left:1670.7px;top:1068.9px;" width="21" height="21" viewBox="0 0 21 21" fill="none" stroke="#333" stroke-width="1.6" stroke-linecap="round" stroke-linejoin="round"><rect x="1.2" y="1.2" width="18.6" height="18.6" rx="3.2"/><rect x="4.4" y="4.4" width="12.2" height="12.2" rx="1" fill="#12b67c" stroke="none"/></svg>
<svg class="a" style="left:1745.2px;top:1068.9px;" width="21" height="21" viewBox="0 0 21 21" fill="none" stroke="#333" stroke-width="1.6" stroke-linecap="round" stroke-linejoin="round"><rect x="1.2" y="1.2" width="18.6" height="18.6" rx="3.2" stroke="#333"/><path d="M4.6 11.5L9.6 4.5M5.4 16.4L14.4 4.6M9.4 16.6L16.6 6.4M13.4 16.6L16.6 12" stroke="#4dc99a" stroke-width="1.7"/></svg>
<svg class="a" style="left:1818.3px;top:1068.9px;" width="21" height="21" viewBox="0 0 21 21" fill="none" stroke="#222" stroke-width="1.6" stroke-linecap="round" stroke-linejoin="round"><rect x="1.2" y="1.2" width="18.6" height="18.6" rx="3.2"/><path d="M1.6 14.6L7 9.6L11 13.6L13.6 11.4L19.4 16.4"/><circle cx="14.4" cy="6.6" r="1.3"/></svg>

</aside>
<footer id="statusbar">

<div class="a" style="left:0px;top:1099px;width:1918px;height:43px;background:#f5f5f5;border-top:1px solid #e4e4e4;box-sizing:border-box"></div>
<div class="a" style="left:0px;top:1139.5px;width:1918px;height:2.5px;background:linear-gradient(#d8d8d8,#c4c4c4)"></div>
<svg class="a" style="left:11px;top:1109.5px;" width="22" height="19" viewBox="0 0 22 19" fill="none" stroke="#444" stroke-width="1.3" stroke-linecap="round" stroke-linejoin="round"><path d="M1 1.2H20M1 7.4H9M1 13.2H8M1 18H7.4"/><path d="M15.6 18.2Q10.6 14.6 10.6 11.4A5 5 0 0 1 20.6 11.4Q20.6 14.6 15.6 18.2Z"/><circle cx="15.6" cy="11.4" r="1.5"/></svg>
<svg class="a" style="left:51px;top:1112.5px;" width="22" height="13" viewBox="0 0 22 13" fill="none" stroke="#444" stroke-width="1.4" stroke-linecap="round" stroke-linejoin="round"><path d="M1 1V12M21 1V12"/><rect x="4.6" y="1" width="12.8" height="11" rx="1.6"/></svg>
<div class="a" style="left:88px;top:1107px;width:1px;height:24px;background:#dcdcdc"></div>
<div class="a" style="left:93px;top:1103.5px;width:123.5px;height:31.5px;background:#f7f7f7;border-radius:6px;box-shadow:0 0 0 1px #efefef"></div>
<span id="t22" class="t" style="left:102.10px;top:1108.10px;font-size:14.3px;color:#222;font-weight:400;transform:scaleX(1.0103);"><span class="ko" style="width:32.82px"><span class="ki" style="font-size:15.73px;transform:scaleX(0.6955)">ページ</span></span>-1</span>
<div class="a" style="left:202.2px;top:1116.95px;width:0;height:0;border-left:4px solid transparent;border-right:4px solid transparent;border-top:4.5px solid #555"></div>
<div class="a" style="left:220px;top:1107px;width:1px;height:24px;background:#dcdcdc"></div>
<svg class="a" style="left:244.3px;top:1110px;" width="18" height="18" viewBox="0 0 18 18" fill="none" stroke="#444" stroke-width="1.4" stroke-linecap="round" stroke-linejoin="round"><path d="M1 9H17M9 1V17"/></svg>
<div class="a" style="left:287px;top:1107px;width:1px;height:24px;background:#dcdcdc"></div>
<span id="t23" class="t" style="left:313.90px;top:1108.10px;font-size:14.3px;color:#12a874;font-weight:400;transform:scaleX(1.0346);"><span class="ko" style="width:32.82px"><span class="ki" style="font-size:15.73px;transform:scaleX(0.6955)">ページ</span></span>-1</span>
<div class="a" style="left:290.7px;top:1132.3px;width:93.6px;height:1.7px;background:#1a9e6c"></div>
<div class="a" style="left:385.5px;top:1107px;width:1px;height:24px;background:#dcdcdc"></div>
<span id="t24" class="t" style="left:1258.00px;top:1108.00px;font-size:14.3px;color:#222;font-weight:400;transform:scaleX(1.0268);"><span class="ko" style="width:43.76px"><span class="ki" style="font-size:15.73px;transform:scaleX(0.6955)">カウント</span></span>： 26</span>
<svg class="a" style="left:1356.4px;top:1109.3px;" width="17" height="19" viewBox="0 0 17 19" fill="none" stroke="#555" stroke-width="1.6" stroke-linecap="round" stroke-linejoin="round"><path d="M8.5 1.1V8.4H15.7Q15.7 1.4 8.5 1.1Z" fill="#7a7a7a" stroke="none"/><ellipse cx="8.5" cy="9.5" rx="7.2" ry="8.4"/><path d="M1.4 8.4H15.6M8.5 1.2V8.4"/></svg>
<svg class="a" style="left:1390px;top:1110.5px;" width="20" height="17" viewBox="0 0 20 17" fill="none" stroke="#555" stroke-width="1.6" stroke-linecap="round" stroke-linejoin="round"><path d="M1.2 3L7 1.4L13 3L18.8 1.4V14L13 15.6L7 14L1.2 15.6ZM7 1.4V14M13 3V15.6"/></svg>
<svg class="a" style="left:1425.5px;top:1109px;" width="20" height="20" viewBox="0 0 20 20" fill="none" stroke="#444" stroke-width="1.5" stroke-linecap="round" stroke-linejoin="round"><circle cx="10" cy="10" r="8.8"/><path d="M8.2 6.6L13.2 10L8.2 13.4Z"/></svg>
<svg class="a" style="left:1460.6px;top:1109.4px;" width="19" height="19" viewBox="0 0 19 19" fill="none" stroke="#555" stroke-width="1.7" stroke-linecap="round" stroke-linejoin="round"><rect x="1.1" y="1.1" width="16.8" height="16.8" rx="1.6"/><rect x="5" y="6.4" width="9" height="6" rx="0.8"/><path d="M3.6 5.4V3.8H5.4M13.6 3.8H15.4V5.4M15.4 13.4V15H13.6M5.4 15H3.6V13.4" stroke-width="1.2"/></svg>
<svg class="a" style="left:1495.6px;top:1109.4px;" width="19" height="19" viewBox="0 0 19 19" fill="none" stroke="#555" stroke-width="1.7" stroke-linecap="round" stroke-linejoin="round"><rect x="1.1" y="1.1" width="16.8" height="16.8" rx="1.6"/><path d="M4.4 7.2V4.4H7.2M4.6 4.6L7.6 7.6M11.8 4.4H14.6V7.2M14.4 4.6L11.4 7.6M14.6 11.8V14.6H11.8M14.4 14.4L11.4 11.4M7.2 14.6H4.4V11.8M4.6 14.4L7.6 11.4" stroke-width="1.25"/></svg>
<svg class="a" style="left:1530px;top:1118px;" width="12" height="2" viewBox="0 0 12 2" fill="none" stroke="#444" stroke-width="1.3" stroke-linecap="round" stroke-linejoin="round"><path d="M1 1H11"/></svg>
<div class="a" style="left:1548px;top:1118.3px;width:124.5px;height:1.4px;background:#dcdcdc"></div>
<div class="a" style="left:1548px;top:1117.6px;width:28px;height:2.8px;background:#111;border-radius:2px"></div>
<div class="a" style="left:1572.9px;top:1111px;width:16px;height:16px;background:#fff;border:2.7px solid #0a0a0a;border-radius:50%;box-sizing:border-box"></div>
<svg class="a" style="left:1679.1px;top:1112.5px;" width="13" height="13" viewBox="0 0 13 13" fill="none" stroke="#444" stroke-width="1.3" stroke-linecap="round" stroke-linejoin="round"><path d="M1 6.5H12M6.5 1V12"/></svg>
<span id="t25" class="t" style="left:1705.40px;top:1107.80px;font-size:14.3px;color:#222;font-weight:400;transform:scaleX(0.9459);">100%</span>
<div class="a" style="left:1746.1px;top:1117.4px;width:0;height:0;border-left:3.5px solid transparent;border-right:3.5px solid transparent;border-top:4px solid #666"></div>
<svg class="a" style="left:1838.5px;top:1109.9px;" width="19" height="18" viewBox="0 0 19 18" fill="none" stroke="#444" stroke-width="1.5" stroke-linecap="round" stroke-linejoin="round"><path d="M1 5.8V2.2Q1 1 2.2 1H6M13 1H16.8Q18 1 18 2.2V5.8M18 12.2V15.8Q18 17 16.8 17H13M6 17H2.2Q1 17 1 15.8V12.2"/></svg>
<svg class="a" style="left:1881.8px;top:1110px;" width="18" height="18" viewBox="0 0 18 18" fill="none" stroke="#333" stroke-width="1.3" stroke-linecap="round" stroke-linejoin="round"><rect x="1" y="1" width="16" height="16" rx="1.6"/><path d="M4 9H14M6 7L4 9L6 11M12 7L14 9L12 11"/></svg>
</footer>
</body></html>
